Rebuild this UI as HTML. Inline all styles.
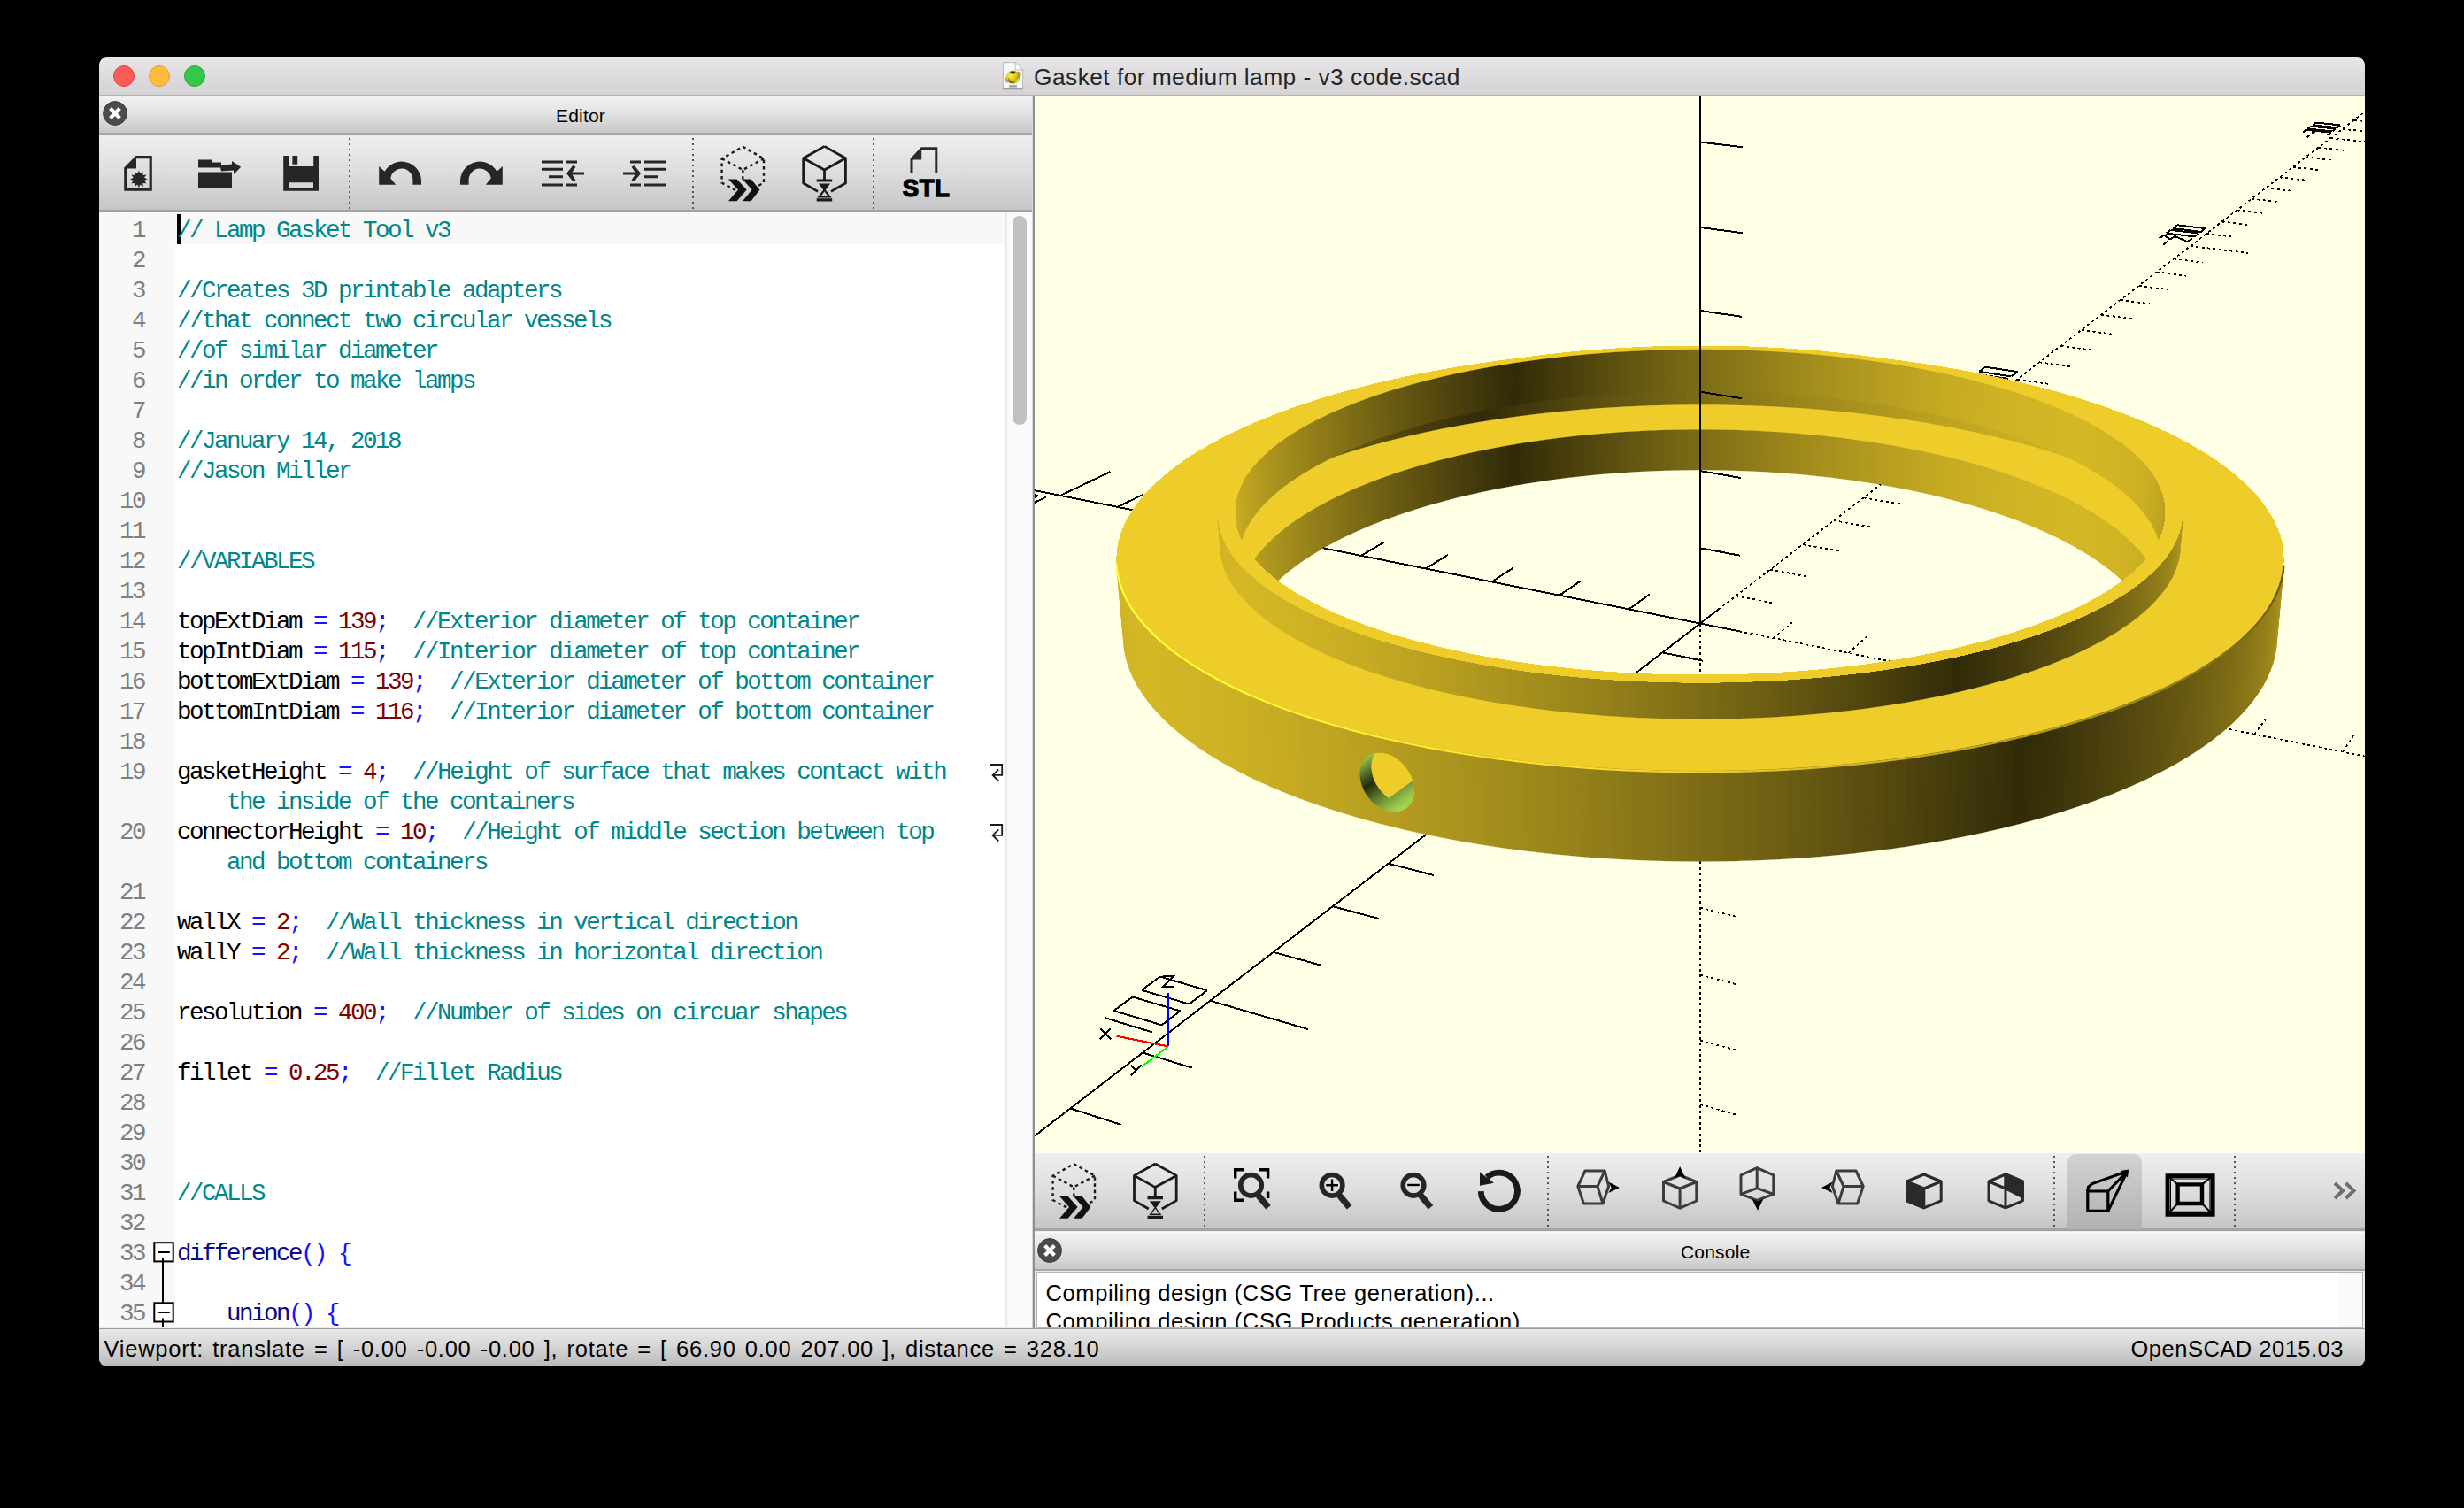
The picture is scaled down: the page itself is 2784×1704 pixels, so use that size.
<!DOCTYPE html>
<html><head><meta charset="utf-8"><title>OpenSCAD</title>
<style>
*{box-sizing:border-box;margin:0;padding:0}
html,body{width:2784px;height:1704px;background:#000;overflow:hidden}
body{position:relative;font-family:"Liberation Sans",sans-serif;color:#000}
.abs{position:absolute}
#win{position:absolute;left:112px;top:64px;width:2560px;height:1480px;border-radius:10px 10px 9px 9px;overflow:hidden;background:#ececec}
#title{position:absolute;left:0;top:0;width:2560px;height:44px;background:linear-gradient(#e9e7e9,#d3d1d3);border-bottom:1px solid #b4b2b4}
.tl{position:absolute;top:10px;width:24px;height:24px;border-radius:50%}
#ttext{position:absolute;left:1056px;top:7.7px;font-size:26.4px;line-height:30px;color:#262626;white-space:nowrap;letter-spacing:0.42px}
.dockhdr{position:absolute;background:linear-gradient(#f1f1f1,#e3e3e3 45%,#c8c8c8);border-top:1px solid #fbfbfb;border-bottom:2px solid #a6a6a6;font-size:21px;text-align:center;line-height:43px;letter-spacing:0.2px}
.tbar{position:absolute;background:linear-gradient(#efefef,#dddddd 50%,#c6c6c6);border-top:1px solid #fbfbfb;border-bottom:3px solid #a2a2a2}
.closeb{position:absolute;width:27px;height:27px}
.sep{position:absolute;width:0;border-left:2px dotted #555}
#code{position:absolute;left:0;top:176px;width:1054px;height:1260px;background:#fff;overflow:hidden;font-family:"Liberation Mono",monospace;font-size:27.5px;letter-spacing:-2.5px;line-height:34px;white-space:pre}
#gutter{position:absolute;left:0;top:0;width:86px;height:1260px;background:#f8f8f8}
.ln{position:absolute;left:0;width:51px;text-align:right;color:#7f7f7f;height:34px}
.cl{position:absolute;left:88px;height:34px;color:#000}
.c{color:#00878a}.n{color:#7f0000}.o{color:#1414ff}.k{color:#0a0a8c}
#status{position:absolute;left:0;top:1437px;width:2560px;height:43px;background:linear-gradient(#e8e8e8,#d4d4d4 50%,#b9b9b9);border-top:1px solid #9a9a9a;font-size:25.5px;line-height:45px;white-space:nowrap}
</style></head><body>
<div id="win">
 <div id="title">
  <div class="tl" style="left:16px;background:#fc5b57;border:1px solid #e0443e"></div>
  <div class="tl" style="left:56px;background:#fdbc40;border:1px solid #dea032"></div>
  <div class="tl" style="left:96px;background:#34c84a;border:1px solid #27aa35"></div>
  <svg class="abs" style="left:1020px;top:5px" width="26" height="34" viewBox="1132 69 26 34"><defs><radialGradient id="sph" cx="0.35" cy="0.35" r="0.75"><stop offset="0" stop-color="#fff23a"/><stop offset="0.55" stop-color="#e2c21c"/><stop offset="1" stop-color="#7a6410"/></radialGradient></defs>
<path d="M1133.4,70.6 H1147.2 L1155.6,79 V100.6 H1133.4Z" fill="#f7f7f7" stroke="#b4b4b4" stroke-width="0.9"/><path d="M1147.2,70.6 V79 H1155.6Z" fill="#fdfdfd" stroke="#b0b0b0" stroke-width="0.8"/><path d="M1133.4,100.6 H1155.6" stroke="#9c9c9c" stroke-width="1.2"/>
<ellipse cx="1138.2" cy="90.2" rx="2.6" ry="3.4" fill="#c99a78" transform="rotate(-25 1138.2 90.2)"/><ellipse cx="1151" cy="83.8" rx="2.4" ry="3.2" fill="#c99a78" transform="rotate(-25 1151 83.8)"/>
<circle cx="1144.5" cy="87" r="7.6" fill="url(#sph)"/>
<ellipse cx="1144.2" cy="81.8" rx="3" ry="1.8" fill="#243a08"/><path d="M1141.4,81.6 a3.4,2.4 0 0 1 6.4,-0.4 q-3,-1.6 -6.4,0.4z" fill="#7fae2c"/>
<path d="M1146.4,91.6 q3.4,-1 4.6,-4.6 q1.2,4.6 -3,7.2 q-1.8,-0.6 -1.6,-2.6z" fill="#b6e45c"/>
<path d="M1139.6,88 q1.4,3.6 4.6,4.8 q-0.6,1.6 -2.6,1.4 q-2.8,-2 -2,-6.2z" fill="#6e6a1c"/>
<rect x="1140" y="96.2" width="9" height="2.4" fill="#8c8c8c" opacity="0.8"/></svg>

  <div id="ttext">Gasket for medium lamp - v3 code.scad</div>
 </div>
 <!-- editor dock -->
 <div class="dockhdr" style="left:0;top:44px;width:1056px;height:44px"><span style="position:absolute;left:516px;top:0">Editor</span></div>
 <svg class="abs" style="left:4px;top:50px" width="29" height="29" viewBox="0 0 29 29"><circle cx="14" cy="14" r="13.4" fill="#4b4b4b" stroke="#3a3a3a" stroke-width="1"/><path d="M8.6,8.6 L19.4,19.4 M19.4,8.6 L8.6,19.4" stroke="#fff" stroke-width="4.2" stroke-linecap="butt"/></svg>

 <div class="tbar" style="left:0;top:88px;width:1056px;height:88px"></div>
 <svg class="abs" style="left:0;top:88px" width="1056" height="88" viewBox="112 152 1056 88">
<g fill="none" stroke="#555" stroke-width="2" stroke-dasharray="2 4"><path d="M395,156V238M783,156V238M987,156V238"/></g>
<g fill="#262626" stroke="none">
<!-- new -->
<path d="M153.5,176 L171.8,176 L171.8,215.8 L140.2,215.8 L140.2,189.5 Z M154,179.2 L154,190.5 L143.4,190.5 L143.4,212.6 L168.6,212.6 L168.6,179.2 Z" fill-rule="evenodd"/>
<path d="M156.9,192.7 l1.6,3.6 3.2,-2.4 -0.3,4 4,-0.3 -2.4,3.2 3.6,1.6 -3.6,1.6 2.4,3.2 -4,-0.3 0.3,4 -3.2,-2.4 -1.6,3.6 -1.6,-3.6 -3.2,2.4 0.3,-4 -4,0.3 2.4,-3.2 -3.6,-1.6 3.6,-1.6 -2.4,-3.2 4,0.3 -0.3,-4 3.2,2.4z"/>
<!-- open -->
<path d="M224,180.5 H240 V183.5 H250 V189.5 H224Z"/>
<path d="M224,194.5 H262 V212 H224Z"/>
<path d="M248.5,187.2 L262,185.6 V182 L272.2,188.8 L264,197 V192.6 L250,193.4Z"/>
<!-- save -->
<path d="M320.2,176 H326 V188 H354.2 V176 H360 V215.8 H320.2Z M326.2,206.2 V212 H354 V206.2Z" fill-rule="evenodd"/>
<path d="M330.4,176 H336.2 V185.8 H330.4Z"/>
<!-- undo / redo -->
<path d="M428.2,188 V208.8 H447.2 L441.3,201.6 A12.6,12.6 0 0 1 466.4,203 V208.8 H476 V203 A22.2,22.2 0 0 0 434.6,193.8Z"/>
<path d="M567.8,188 V208.8 H548.8 L554.7,201.6 A12.6,12.6 0 0 0 529.6,203 V208.8 H520 V203 A22.2,22.2 0 0 1 561.4,193.8Z"/>
<!-- unindent -->
<path d="M612,181.4 H636 V184.4 H612Z M640,181.4 H652 V184.4 H640Z M612,189.8 H636 V192.8 H612Z M620,198.2 H636 V201.2 H620Z M612,207.6 H636 V210.6 H612Z M640,207.6 H652 V210.6 H640Z"/>
<path d="M660,194.4 H646.5 L650.5,188.6 L647.3,187 L640,196 L647.3,205 L650.5,203.4 L646.5,197.6 H660Z"/>
<!-- indent -->
<path d="M712,181.4 H724 V184.4 H712Z M728,181.4 H752 V184.4 H728Z M728,189.8 H752 V192.8 H728Z M728,198.2 H744 V201.2 H728Z M712,207.6 H724 V210.6 H712Z M728,207.6 H752 V210.6 H728Z"/>
<path d="M704,194.4 H717.5 L713.5,188.6 L716.7,187 L724,196 L716.7,205 L713.5,203.4 L717.5,197.6 H704Z"/>
</g>
<!-- preview -->
<g fill="none" stroke="#1a1a1a" stroke-width="2.4" stroke-dasharray="3.6 3.6">
<path d="M839.3,165.8 L863,179.2 V206.6 L848,215 M831,215 L815.6,206.6 V179.2 L839.3,165.8"/>
<path d="M815.6,179.2 L839.3,192 L863,179.2 M839.3,192 V203"/>
</g>
<g fill="#111"><path d="M823,202.4 H832.6 L843.6,214.6 L832.6,227.3 H823 L834,214.6Z M839,202.4 H848.6 L858.4,214.6 L848.6,227.3 H839 L849.6,214.6Z"/></g>
<!-- render -->
<g fill="none" stroke="#1a1a1a" stroke-width="2.8" stroke-linejoin="round">
<path d="M931.5,165.4 L955.4,178.8 V207 L939,216.4 M924,216.4 L907.7,207 V178.8 L931.5,165.4"/>
<path d="M907.7,178.8 L931.5,192 L955.4,178.8 M931.5,192 V203"/>
</g>
<g fill="#1a1a1a"><path d="M922.7,202.4 H940.2 V205.6 H922.7Z M922.7,224.2 H940.2 V227.4 H922.7Z"/><path d="M925,207.6 H938 L931.5,215.8Z" /><path d="M925,222.6 H938 L931.5,214.4Z" fill="none" stroke="#1a1a1a" stroke-width="1.6"/><path d="M926.5,208 L936.5,222 M936.5,208 L926.5,222" stroke="#1a1a1a" stroke-width="1.4"/></g>
<!-- STL -->
<path d="M1030,195.8 V180.2 L1041.4,167.8 H1057.8 V195.8" fill="none" stroke="#2a2a2a" stroke-width="3"/>
<path d="M1029.4,180.6 L1041.2,167.6 V180.6Z" fill="#2a2a2a"/>
<text x="1046.5" y="221.8" font-family="Liberation Sans, sans-serif" font-weight="bold" font-size="27.6" text-anchor="middle" fill="#000" stroke="#000" stroke-width="1.3" letter-spacing="0.4">STL</text>
</svg>

 <div id="code">
  <div id="gutter"></div>
  <div class="abs" style="left:86px;top:1px;width:938px;height:35px;background:#f8f8f8"></div>
<div class="abs" style="left:88px;top:2px;width:4px;height:34px;background:#000"></div>
<div class="ln" style="top:4px">1</div>
<div class="cl" style="top:4px"><span class="c">// Lamp Gasket Tool v3</span></div>
<div class="ln" style="top:38px">2</div>
<div class="ln" style="top:72px">3</div>
<div class="cl" style="top:72px"><span class="c">//Creates 3D printable adapters</span></div>
<div class="ln" style="top:106px">4</div>
<div class="cl" style="top:106px"><span class="c">//that connect two circular vessels</span></div>
<div class="ln" style="top:140px">5</div>
<div class="cl" style="top:140px"><span class="c">//of similar diameter</span></div>
<div class="ln" style="top:174px">6</div>
<div class="cl" style="top:174px"><span class="c">//in order to make lamps</span></div>
<div class="ln" style="top:208px">7</div>
<div class="ln" style="top:242px">8</div>
<div class="cl" style="top:242px"><span class="c">//January 14, 2018</span></div>
<div class="ln" style="top:276px">9</div>
<div class="cl" style="top:276px"><span class="c">//Jason Miller</span></div>
<div class="ln" style="top:310px">10</div>
<div class="ln" style="top:344px">11</div>
<div class="ln" style="top:378px">12</div>
<div class="cl" style="top:378px"><span class="c">//VARIABLES</span></div>
<div class="ln" style="top:412px">13</div>
<div class="ln" style="top:446px">14</div>
<div class="cl" style="top:446px">topExtDiam <span class="o">=</span> <span class="n">139</span><span class="o">;</span>  <span class="c">//Exterior diameter of top container</span></div>
<div class="ln" style="top:480px">15</div>
<div class="cl" style="top:480px">topIntDiam <span class="o">=</span> <span class="n">115</span><span class="o">;</span>  <span class="c">//Interior diameter of top container</span></div>
<div class="ln" style="top:514px">16</div>
<div class="cl" style="top:514px">bottomExtDiam <span class="o">=</span> <span class="n">139</span><span class="o">;</span>  <span class="c">//Exterior diameter of bottom container</span></div>
<div class="ln" style="top:548px">17</div>
<div class="cl" style="top:548px">bottomIntDiam <span class="o">=</span> <span class="n">116</span><span class="o">;</span>  <span class="c">//Interior diameter of bottom container</span></div>
<div class="ln" style="top:582px">18</div>
<div class="ln" style="top:616px">19</div>
<div class="cl" style="top:616px">gasketHeight <span class="o">=</span> <span class="n">4</span><span class="o">;</span>  <span class="c">//Height of surface that makes contact with</span></div>
<div class="cl" style="top:650px">    <span class="c">the inside of the containers</span></div>
<div class="ln" style="top:684px">20</div>
<div class="cl" style="top:684px">connectorHeight <span class="o">=</span> <span class="n">10</span><span class="o">;</span>  <span class="c">//Height of middle section between top</span></div>
<div class="cl" style="top:718px">    <span class="c">and bottom containers</span></div>
<div class="ln" style="top:752px">21</div>
<div class="ln" style="top:786px">22</div>
<div class="cl" style="top:786px">wallX <span class="o">=</span> <span class="n">2</span><span class="o">;</span>  <span class="c">//Wall thickness in vertical direction</span></div>
<div class="ln" style="top:820px">23</div>
<div class="cl" style="top:820px">wallY <span class="o">=</span> <span class="n">2</span><span class="o">;</span>  <span class="c">//Wall thickness in horizontal direction</span></div>
<div class="ln" style="top:854px">24</div>
<div class="ln" style="top:888px">25</div>
<div class="cl" style="top:888px">resolution <span class="o">=</span> <span class="n">400</span><span class="o">;</span>  <span class="c">//Number of sides on circuar shapes</span></div>
<div class="ln" style="top:922px">26</div>
<div class="ln" style="top:956px">27</div>
<div class="cl" style="top:956px">fillet <span class="o">=</span> <span class="n">0.25</span><span class="o">;</span>  <span class="c">//Fillet Radius</span></div>
<div class="ln" style="top:990px">28</div>
<div class="ln" style="top:1024px">29</div>
<div class="ln" style="top:1058px">30</div>
<div class="ln" style="top:1092px">31</div>
<div class="cl" style="top:1092px"><span class="c">//CALLS</span></div>
<div class="ln" style="top:1126px">32</div>
<div class="ln" style="top:1160px">33</div>
<div class="cl" style="top:1160px"><span class="k">difference</span><span class="o">() {</span></div>
<div class="ln" style="top:1194px">34</div>
<div class="ln" style="top:1228px">35</div>
<div class="cl" style="top:1228px">    <span class="k">union</span><span class="o">() {</span></div><svg class="abs" style="left:0;top:0" width="1054" height="1260" viewBox="112 240 1054 1260">
<g fill="none" stroke="#1c1c14" stroke-width="1.8"><path d="M1119,864 H1132.2 V875.9 H1122 M1128.3,869.4 L1121.6,875.9 L1128.3,882.5"/><path d="M1119,932 H1132.2 V943.9 H1122 M1128.3,937.4 L1121.6,943.9 L1128.3,950.5"/></g>
<g stroke="#000" stroke-width="2"><path d="M184,1423 V1500" fill="none"/><rect x="174.3" y="1404.2" width="21.4" height="21.2" fill="#fff"/><rect x="174.3" y="1472.3" width="21.4" height="21.2" fill="#fff"/><path d="M178.4,1415 H191.8 M178.4,1483 H191.8 M184,1421.5 V1426 M184,1489.5 V1500" fill="none"/></g>
</svg>

 </div>
 <!-- editor scrollbar -->
 <div class="abs" style="left:1024px;top:176px;width:30px;height:1260px;background:#fafafa;border-left:2px solid #e9e9e9"></div>
 <div class="abs" style="left:1032px;top:180px;width:16px;height:236px;border-radius:8px;background:#c1c1c1"></div>
 <!-- splitter -->
 <div class="abs" style="left:1054px;top:44px;width:3px;height:1393px;background:linear-gradient(90deg,#d8d8d8 0,#d8d8d8 33%,#8f8f8f 34%,#8f8f8f)"></div>
 <!-- 3D view -->
 <div class="abs" style="left:1057px;top:44px;width:1503px;height:1194px;background:#ffffe5;overflow:hidden">
 <svg width="1503" height="1194" viewBox="1169 108 1503 1194" style="position:absolute;left:0;top:0">
 <g stroke="#000" stroke-width="2" fill="none" shape-rendering="crispEdges"><path d="M1494.9,619.3 L34.6,327.4"/>
<path d="M1650.6,912.7 L-5630.7,6519.3"/>
<path d="M2412.5,802.7 L6512.6,1622.4" stroke-dasharray="3 3.4" stroke-width="1.8"/>
<path d="M2125.0,547.4 L2669.8,127.9" stroke-dasharray="3 3.4" stroke-width="1.8"/>
<path d="M1466.7,613.7 L1493.2,598.8"/>
<path d="M1627.9,930.2 L1678.3,942.6"/>
<path d="M2450.5,810.3 L2467.0,790.1" stroke-dasharray="3 3.4" stroke-width="1.8"/>
<path d="M2137.7,537.6 L2178.0,544.4" stroke-dasharray="3 3.4" stroke-width="1.8"/>
<path d="M1397.1,599.8 L1424.2,585.2"/>
<path d="M1568.7,975.8 L1620.2,989.0"/>
<path d="M2547.3,829.7 L2562.7,808.9" stroke-dasharray="3 3.4" stroke-width="1.8"/>
<path d="M2168.4,514.0 L2208.1,520.5" stroke-dasharray="3 3.4" stroke-width="1.8"/>
<path d="M1329.2,586.2 L1356.8,572.0"/>
<path d="M1505.8,1024.2 L1558.3,1038.2"/>
<path d="M2647.0,849.6 L2661.0,828.3" stroke-dasharray="3 3.4" stroke-width="1.8"/>
<path d="M2197.9,491.3 L2236.9,497.5" stroke-dasharray="3 3.4" stroke-width="1.8"/>
<path d="M1262.8,572.9 L1290.9,559.0"/>
<path d="M1438.8,1075.8 L1492.5,1090.7"/>
<path d="M2749.4,870.1 L2762.1,848.1" stroke-dasharray="3 3.4" stroke-width="1.8"/>
<path d="M2226.2,469.5 L2264.5,475.5" stroke-dasharray="3 3.4" stroke-width="1.8"/>
<path d="M1198.0,560.0 L1254.4,533.1"/>
<path d="M1367.4,1130.8 L1478.0,1163.0"/>
<path d="M2854.9,891.2 L2877.0,846.7" stroke-dasharray="3 3.4" stroke-width="1.8"/>
<path d="M2253.3,448.6 L2329.2,460.2" stroke-dasharray="3 3.4" stroke-width="1.8"/>
<path d="M1134.5,547.3 L1163.5,534.0"/>
<path d="M1291.1,1189.5 L1347.0,1206.6"/>
<path d="M2963.5,912.9 L2973.2,889.6" stroke-dasharray="3 3.4" stroke-width="1.8"/>
<path d="M2279.4,428.6 L2316.5,434.1" stroke-dasharray="3 3.4" stroke-width="1.8"/>
<path d="M1072.5,534.9 L1101.9,521.9"/>
<path d="M1209.3,1252.5 L1266.5,1270.8"/>
<path d="M3075.4,935.3 L3083.4,911.3" stroke-dasharray="3 3.4" stroke-width="1.8"/>
<path d="M2304.4,409.3 L2341.0,414.6" stroke-dasharray="3 3.4" stroke-width="1.8"/>
<path d="M1011.9,522.8 L1041.6,510.0"/>
<path d="M1121.5,1320.1 L1179.9,1339.9"/>
<path d="M3190.6,958.3 L3197.0,933.6" stroke-dasharray="3 3.4" stroke-width="1.8"/>
<path d="M2328.5,390.7 L2364.5,395.8" stroke-dasharray="3 3.4" stroke-width="1.8"/>
<path d="M952.5,510.9 L982.6,498.4"/>
<path d="M1026.9,1392.9 L1086.5,1414.2"/>
<path d="M3309.5,982.1 L3314.0,956.6" stroke-dasharray="3 3.4" stroke-width="1.8"/>
<path d="M2351.8,372.8 L2387.2,377.7" stroke-dasharray="3 3.4" stroke-width="1.8"/>
<path d="M894.4,499.3 L924.9,487.1"/>
<path d="M924.8,1471.6 L985.7,1494.6"/>
<path d="M3432.1,1006.6 L3434.6,980.3" stroke-dasharray="3 3.4" stroke-width="1.8"/>
<path d="M2374.1,355.6 L2409.0,360.3" stroke-dasharray="3 3.4" stroke-width="1.8"/>
<path d="M837.5,487.9 L868.4,476.0"/>
<path d="M814.2,1556.8 L876.3,1581.8"/>
<path d="M3558.6,1031.9 L3559.0,1004.8" stroke-dasharray="3 3.4" stroke-width="1.8"/>
<path d="M2395.7,339.0 L2430.1,343.5" stroke-dasharray="3 3.4" stroke-width="1.8"/>
<path d="M781.9,476.8 L813.0,465.1"/>
<path d="M693.9,1649.3 L757.3,1676.6"/>
<path d="M3689.2,1058.0 L3687.4,1030.0" stroke-dasharray="3 3.4" stroke-width="1.8"/>
<path d="M2416.6,322.9 L2450.4,327.3" stroke-dasharray="3 3.4" stroke-width="1.8"/>
<path d="M727.4,465.9 L758.8,454.4"/>
<path d="M562.8,1750.3 L627.4,1780.1"/>
<path d="M3824.1,1084.9 L3819.9,1056.0" stroke-dasharray="3 3.4" stroke-width="1.8"/>
<path d="M2436.7,307.4 L2470.0,311.7" stroke-dasharray="3 3.4" stroke-width="1.8"/>
<path d="M674.0,455.2 L705.6,444.0"/>
<path d="M419.2,1860.9 L485.0,1893.6"/>
<path d="M3963.5,1112.8 L3956.8,1082.9" stroke-dasharray="3 3.4" stroke-width="1.8"/>
<path d="M2456.1,292.5 L2489.0,296.6" stroke-dasharray="3 3.4" stroke-width="1.8"/>
<path d="M621.6,444.8 L684.8,423.0"/>
<path d="M261.2,1982.5 L397.0,2055.7"/>
<path d="M4107.7,1141.6 L4089.2,1080.9" stroke-dasharray="3 3.4" stroke-width="1.8"/>
<path d="M2474.9,278.0 L2540.1,286.0" stroke-dasharray="3 3.4" stroke-width="1.8"/>
<path d="M570.4,434.5 L602.5,423.7"/>
<path d="M86.7,2116.9 L154.5,2157.0"/>
<path d="M4257.0,1171.5 L4244.6,1139.5" stroke-dasharray="3 3.4" stroke-width="1.8"/>
<path d="M2493.0,264.0 L2525.0,267.9" stroke-dasharray="3 3.4" stroke-width="1.8"/>
<path d="M520.1,424.5 L552.5,413.9"/>
<path d="M-107.2,2266.3 L-38.6,2310.9"/>
<path d="M4411.5,1202.4 L4396.1,1169.3" stroke-dasharray="3 3.4" stroke-width="1.8"/>
<path d="M2510.6,250.5 L2542.2,254.2" stroke-dasharray="3 3.4" stroke-width="1.8"/>
<path d="M470.9,414.6 L503.4,404.3"/>
<path d="M-323.9,2433.1 L-254.8,2483.1"/>
<path d="M4571.5,1234.4 L4552.8,1200.1" stroke-dasharray="3 3.4" stroke-width="1.8"/>
<path d="M2527.6,237.4 L2558.8,241.0" stroke-dasharray="3 3.4" stroke-width="1.8"/>
<path d="M422.6,405.0 L455.3,394.8"/>
<path d="M-567.6,2620.8 L-498.4,2677.3"/>
<path d="M4737.4,1267.5 L4715.2,1232.0" stroke-dasharray="3 3.4" stroke-width="1.8"/>
<path d="M2544.1,224.7 L2574.8,228.2" stroke-dasharray="3 3.4" stroke-width="1.8"/>
<path d="M375.2,395.5 L408.1,385.5"/>
<path d="M-843.8,2833.4 L-775.1,2897.8"/>
<path d="M4909.6,1301.9 L4883.5,1265.1" stroke-dasharray="3 3.4" stroke-width="1.8"/>
<path d="M2560.1,212.4 L2590.4,215.8" stroke-dasharray="3 3.4" stroke-width="1.8"/>
<path d="M328.8,386.2 L361.8,376.4"/>
<path d="M-1159.3,3076.3 L-1091.9,3150.3"/>
<path d="M5088.2,1337.6 L5058.1,1299.4" stroke-dasharray="3 3.4" stroke-width="1.8"/>
<path d="M2575.6,200.4 L2605.5,203.7" stroke-dasharray="3 3.4" stroke-width="1.8"/>
<path d="M283.2,377.1 L316.4,367.5"/>
<path d="M-1523.2,3356.5 L-1458.5,3442.4"/>
<path d="M5273.8,1374.7 L5239.4,1335.0" stroke-dasharray="3 3.4" stroke-width="1.8"/>
<path d="M2590.6,188.9 L2620.2,192.1" stroke-dasharray="3 3.4" stroke-width="1.8"/>
<path d="M238.5,368.1 L271.8,358.7"/>
<path d="M-1947.5,3683.3 L-1887.4,3784.2"/>
<path d="M5466.8,1413.3 L5427.6,1372.0" stroke-dasharray="3 3.4" stroke-width="1.8"/>
<path d="M2605.2,177.6 L2634.4,180.7" stroke-dasharray="3 3.4" stroke-width="1.8"/>
<path d="M194.6,359.4 L228.0,350.1"/>
<path d="M-2448.8,4069.3 L-2396.1,4189.6"/>
<path d="M5667.5,1453.4 L5623.3,1410.4" stroke-dasharray="3 3.4" stroke-width="1.8"/>
<path d="M2619.4,166.7 L2648.2,169.7" stroke-dasharray="3 3.4" stroke-width="1.8"/>
<path d="M151.5,350.8 L218.0,332.8"/>
<path d="M-3050.1,4532.3 L-2965.8,4832.6"/>
<path d="M5876.5,1495.2 L5779.4,1407.6" stroke-dasharray="3 3.4" stroke-width="1.8"/>
<path d="M2633.2,156.1 L2690.3,162.0" stroke-dasharray="3 3.4" stroke-width="1.8"/>
<path d="M109.2,342.3 L142.9,333.4"/>
<path d="M-3784.4,5097.7 L-3762.2,5278.3"/>
<path d="M6094.2,1538.8 L6038.8,1492.1" stroke-dasharray="3 3.4" stroke-width="1.8"/>
<path d="M2646.6,145.8 L2674.6,148.7" stroke-dasharray="3 3.4" stroke-width="1.8"/>
<path d="M67.7,334.0 L101.5,325.3"/>
<path d="M-4701.6,5803.9 L-4709.5,6033.2"/>
<path d="M6321.4,1584.2 L6259.7,1535.5" stroke-dasharray="3 3.4" stroke-width="1.8"/>
<path d="M2659.6,135.8 L2687.3,138.6" stroke-dasharray="3 3.4" stroke-width="1.8"/>
<path d="M1152.4,575.6 L1181.9,561.7"/>
<path d="M1143.6,573.8 L1126.1,570.2"/>
<path d="M1126.1,570.2 L1155.8,556.4"/>
<path d="M1155.8,556.4 L1173.2,559.9"/>
<path d="M1173.2,559.9 L1143.6,573.8"/>
<path d="M1117.4,568.5 L1100.0,564.9"/>
<path d="M1100.0,564.9 L1129.9,551.2"/>
<path d="M1129.9,551.2 L1147.1,554.7"/>
<path d="M1147.1,554.7 L1117.4,568.5"/>
<path d="M1290.0,1118.8 L1310.6,1103.6"/>
<path d="M1310.6,1103.6 L1364.0,1119.1"/>
<path d="M1364.0,1119.1 L1343.7,1134.6"/>
<path d="M1343.7,1134.6 L1290.0,1118.8"/>
<path d="M1258.5,1142.1 L1279.6,1126.5"/>
<path d="M1279.6,1126.5 L1333.5,1142.4"/>
<path d="M1333.5,1142.4 L1312.6,1158.3"/>
<path d="M1312.6,1158.3 L1258.5,1142.1"/>
<path d="M1247.8,1150.0 L1302.1,1166.4"/>
<path d="M1858.2,-269.1 L1858.5,-239.7"/>
<path d="M1858.5,-239.7 L1908.4,-237.1"/>
<path d="M1908.4,-237.1 L1908.3,-266.7"/>
<path d="M1908.3,-266.7 L1858.2,-269.1"/>
<path d="M1857.9,-313.6 L1858.1,-283.9"/>
<path d="M1858.1,-283.9 L1908.3,-281.6"/>
<path d="M1908.3,-281.6 L1908.3,-311.5"/>
<path d="M1908.3,-311.5 L1857.9,-313.6"/>
<path d="M1857.8,-328.6 L1908.3,-326.6"/>
<path d="M2855.3,923.5 L2825.5,917.4"/>
<path d="M2825.5,917.4 L2837.4,894.0"/>
<path d="M2837.4,894.0 L2866.8,899.9"/>
<path d="M2866.8,899.9 L2855.3,923.5"/>
<path d="M2900.4,932.7 L2870.3,926.6"/>
<path d="M2870.3,926.6 L2881.5,902.9"/>
<path d="M2881.5,902.9 L2911.3,908.8"/>
<path d="M2911.3,908.8 L2900.4,932.7"/>
<path d="M2915.6,935.8 L2926.2,911.8"/>
<path d="M2965.2,936.0 L2996.0,942.2"/>
<path d="M2224.3,440.9 L2216.9,446.4"/>
<path d="M2221.5,430.6 L2258.4,436.2"/>
<path d="M2225.2,427.9 L2232.4,422.6"/>
<path d="M2232.4,422.6 L2269.0,428.0"/>
<path d="M2269.0,428.0 L2262.0,433.4"/>
<path d="M2262.0,433.4 L2225.2,427.9"/>
<path d="M2236.0,419.9 L2243.1,414.7"/>
<path d="M2243.1,414.7 L2279.5,420.0"/>
<path d="M2279.5,420.0 L2272.5,425.4"/>
<path d="M2272.5,425.4 L2236.0,419.9"/>
<path d="M1886.4,1454.2 L1886.3,1435.9"/>
<path d="M1871.9,1476.7 L1911.1,1489.3"/>
<path d="M1872.0,1485.7 L1872.1,1503.6"/>
<path d="M1872.1,1503.6 L1911.2,1516.4"/>
<path d="M1911.2,1516.4 L1911.1,1498.4"/>
<path d="M1911.1,1498.4 L1872.0,1485.7"/>
<path d="M1872.2,1512.6 L1872.3,1530.4"/>
<path d="M1872.3,1530.4 L1911.2,1543.2"/>
<path d="M1911.2,1543.2 L1911.2,1525.4"/>
<path d="M1911.2,1525.4 L1872.2,1512.6"/>
<path d="M587.9,460.3 L573.7,457.4"/>
<path d="M573.7,457.4 L600.3,456.0"/>
<path d="M600.3,456.0 L586.1,453.1"/>
<path d="M586.1,453.1 L620.7,449.0"/>
<path d="M620.7,449.0 L606.5,446.1"/>
<path d="M566.6,455.9 L552.5,453.0"/>
<path d="M552.5,453.0 L585.4,441.9"/>
<path d="M585.4,441.9 L599.4,444.7"/>
<path d="M599.4,444.7 L566.6,455.9"/>
<path d="M545.4,451.6 L531.4,448.7"/>
<path d="M531.4,448.7 L564.4,437.7"/>
<path d="M564.4,437.7 L578.4,440.5"/>
<path d="M578.4,440.5 L545.4,451.6"/>
<path d="M157.2,1955.8 L202.8,1922.1"/>
<path d="M202.8,1922.1 L267.3,1956.5"/>
<path d="M267.3,1956.5 L221.9,1991.1"/>
<path d="M221.9,1991.1 L157.2,1955.8"/>
<path d="M86.3,2008.2 L133.9,1973.0"/>
<path d="M133.9,1973.0 L198.7,2008.8"/>
<path d="M198.7,2008.8 L151.4,2045.0"/>
<path d="M151.4,2045.0 L86.3,2008.2"/>
<path d="M12.5,2062.7 L62.0,2026.1"/>
<path d="M62.0,2026.1 L36.8,2077.0"/>
<path d="M36.8,2077.0 L86.3,2040.0"/>
<path d="M86.3,2040.0 L77.9,2101.1"/>
<path d="M77.9,2101.1 L127.3,2063.4"/>
<path d="M2449.3,272.6 L2444.2,276.5"/>
<path d="M2439.9,269.3 L2445.1,265.5"/>
<path d="M2445.1,265.5 L2451.9,270.7"/>
<path d="M2451.9,270.7 L2457.0,266.9"/>
<path d="M2457.0,266.9 L2471.9,273.2"/>
<path d="M2471.9,273.2 L2476.9,269.3"/>
<path d="M2447.6,263.6 L2452.7,259.8"/>
<path d="M2452.7,259.8 L2484.3,263.7"/>
<path d="M2484.3,263.7 L2479.4,267.4"/>
<path d="M2479.4,267.4 L2447.6,263.6"/>
<path d="M2455.2,258.0 L2460.2,254.3"/>
<path d="M2460.2,254.3 L2491.6,258.1"/>
<path d="M2491.6,258.1 L2486.8,261.8"/>
<path d="M2486.8,261.8 L2455.2,258.0"/>
<path d="M1889.7,2057.1 L1889.6,2042.2"/>
<path d="M1876.5,2059.0 L1876.6,2073.8"/>
<path d="M1876.6,2073.8 L1889.8,2064.5"/>
<path d="M1889.8,2064.5 L1889.8,2079.4"/>
<path d="M1889.8,2079.4 L1912.0,2073.8"/>
<path d="M1912.0,2073.8 L1912.1,2088.6"/>
<path d="M1876.6,2081.2 L1876.8,2095.9"/>
<path d="M1876.8,2095.9 L1912.1,2110.8"/>
<path d="M1912.1,2110.8 L1912.1,2096.0"/>
<path d="M1912.1,2096.0 L1876.6,2081.2"/>
<path d="M1876.8,2103.2 L1876.9,2117.8"/>
<path d="M1876.9,2117.8 L1912.1,2132.7"/>
<path d="M1912.1,2132.7 L1912.1,2118.1"/>
<path d="M1912.1,2118.1 L1876.8,2103.2"/>
<path d="M114.4,363.6 L102.7,361.2"/>
<path d="M102.7,361.2 L137.1,351.9"/>
<path d="M137.1,351.9 L148.8,354.2"/>
<path d="M115.7,357.7 L127.4,360.0"/>
<path d="M96.9,360.0 L85.2,357.6"/>
<path d="M85.2,357.6 L119.7,348.4"/>
<path d="M119.7,348.4 L131.3,350.7"/>
<path d="M131.3,350.7 L96.9,360.0"/>
<path d="M79.5,356.4 L67.9,354.1"/>
<path d="M67.9,354.1 L102.5,344.9"/>
<path d="M102.5,344.9 L114.0,347.2"/>
<path d="M114.0,347.2 L79.5,356.4"/>
<path d="M2610.4,152.2 L2606.6,155.0"/>
<path d="M2601.8,149.7 L2605.6,146.9"/>
<path d="M2605.6,146.9 L2633.5,149.7"/>
<path d="M2633.5,149.7 L2629.8,152.5"/>
<path d="M2616.0,147.9 L2612.3,150.8"/>
<path d="M2607.4,145.5 L2611.2,142.7"/>
<path d="M2611.2,142.7 L2639.0,145.5"/>
<path d="M2639.0,145.5 L2635.4,148.3"/>
<path d="M2635.4,148.3 L2607.4,145.5"/>
<path d="M2613.0,141.4 L2616.7,138.6"/>
<path d="M2616.7,138.6 L2644.4,141.4"/>
<path d="M2644.4,141.4 L2640.8,144.2"/>
<path d="M2640.8,144.2 L2613.0,141.4"/>
<path d="M1892.5,2554.5 L1892.4,2542.1"/>
<path d="M1880.4,2554.7 L1880.5,2567.1"/>
<path d="M1880.5,2567.1 L1912.8,2583.1"/>
<path d="M1912.8,2583.1 L1912.8,2570.7"/>
<path d="M1892.6,2573.0 L1892.5,2560.7"/>
<path d="M1880.5,2573.2 L1880.6,2585.5"/>
<path d="M1880.6,2585.5 L1912.9,2601.5"/>
<path d="M1912.9,2601.5 L1912.9,2589.2"/>
<path d="M1912.9,2589.2 L1880.5,2573.2"/>
<path d="M1880.6,2591.6 L1880.7,2603.7"/>
<path d="M1880.7,2603.7 L1912.9,2619.8"/>
<path d="M1912.9,2619.8 L1912.9,2607.6"/>
<path d="M1912.9,2607.6 L1880.6,2591.6"/></g>
<g shape-rendering="crispEdges"><path d="M2545.2,658.4 L2542.1,652.1 L2538.7,646.0 L2534.9,639.9 L2530.6,633.8 L2526.0,627.9 L2521.1,622.0 L2515.7,616.2 L2510.0,610.5 L2504.0,604.8 L2497.7,599.3 L2491.0,593.8 L2484.0,588.5 L2476.6,583.2 L2469.0,578.0 L2461.1,572.9 L2452.9,567.9 L2444.5,563.0 L2435.7,558.2 L2426.7,553.5 L2417.5,549.0 L2408.0,544.5 L2398.3,540.1 L2388.3,535.8 L2378.1,531.7 L2367.7,527.6 L2357.1,523.6 L2346.4,519.8 L2335.4,516.1 L2324.2,512.4 L2312.9,508.9 L2301.3,505.5 L2289.7,502.3 L2277.8,499.1 L2265.8,496.0 L2253.7,493.1 L2241.4,490.2 L2229.0,487.5 L2216.5,484.9 L2203.9,482.4 L2191.1,480.1 L2178.3,477.8 L2165.3,475.7 L2152.2,473.6 L2139.1,471.7 L2125.9,469.9 L2112.6,468.2 L2099.2,466.7 L2085.7,465.2 L2072.2,463.9 L2058.6,462.7 L2045.0,461.6 L2031.4,460.6 L2017.7,459.7 L2003.9,458.9 L1990.1,458.3 L1976.3,457.8 L1962.5,457.4 L1948.7,457.1 L1934.8,456.9 L1921.0,456.8 L1907.2,456.9 L1893.3,457.1 L1879.5,457.4 L1865.7,457.8 L1851.9,458.3 L1838.1,458.9 L1824.3,459.7 L1810.6,460.6 L1797.0,461.6 L1783.4,462.7 L1769.8,463.9 L1756.3,465.2 L1742.8,466.7 L1729.4,468.2 L1716.1,469.9 L1702.9,471.7 L1689.8,473.6 L1676.7,475.7 L1663.7,477.8 L1650.9,480.1 L1638.1,482.4 L1625.5,484.9 L1613.0,487.5 L1600.6,490.2 L1588.3,493.1 L1576.2,496.0 L1564.2,499.1 L1552.3,502.3 L1540.7,505.5 L1529.1,508.9 L1517.8,512.4 L1506.6,516.1 L1495.6,519.8 L1484.9,523.6 L1474.3,527.6 L1463.9,531.7 L1453.7,535.8 L1443.7,540.1 L1434.0,544.5 L1424.5,549.0 L1415.3,553.5 L1406.3,558.2 L1397.5,563.0 L1389.1,567.9 L1380.9,572.9 L1373.0,578.0 L1365.4,583.2 L1358.0,588.5 L1351.0,593.8 L1344.3,599.3 L1338.0,604.8 L1332.0,610.5 L1326.3,616.2 L1320.9,622.0 L1316.0,627.9 L1311.4,633.8 L1307.1,639.9 L1303.3,646.0 L1299.9,652.1 L1296.8,658.4 L1403.5,657.6 L1405.6,652.4 L1408.0,647.3 L1410.7,642.2 L1413.8,637.2 L1417.2,632.2 L1421.0,627.3 L1425.0,622.4 L1429.4,617.6 L1434.0,612.9 L1439.0,608.2 L1444.2,603.6 L1449.7,599.1 L1455.5,594.6 L1461.5,590.2 L1467.8,585.9 L1474.4,581.7 L1481.2,577.5 L1488.2,573.4 L1495.5,569.4 L1503.0,565.5 L1510.8,561.7 L1518.7,557.9 L1526.9,554.3 L1535.2,550.7 L1543.8,547.2 L1552.5,543.8 L1561.4,540.5 L1570.5,537.3 L1579.8,534.2 L1589.2,531.1 L1598.8,528.2 L1608.6,525.4 L1618.5,522.6 L1628.5,520.0 L1638.7,517.4 L1649.0,514.9 L1659.4,512.6 L1670.0,510.3 L1680.6,508.2 L1691.4,506.1 L1702.2,504.1 L1713.2,502.2 L1724.2,500.5 L1735.4,498.8 L1746.6,497.2 L1757.9,495.8 L1769.2,494.4 L1780.7,493.1 L1792.2,492.0 L1803.7,490.9 L1815.3,489.9 L1826.9,489.1 L1838.6,488.3 L1850.3,487.6 L1862.0,487.1 L1873.8,486.6 L1885.6,486.3 L1897.4,486.0 L1909.2,485.9 L1921.0,485.8 L1932.8,485.9 L1944.6,486.0 L1956.4,486.3 L1968.2,486.6 L1980.0,487.1 L1991.7,487.6 L2003.4,488.3 L2015.1,489.1 L2026.7,489.9 L2038.3,490.9 L2049.8,492.0 L2061.3,493.1 L2072.8,494.4 L2084.1,495.8 L2095.4,497.2 L2106.6,498.8 L2117.8,500.5 L2128.8,502.2 L2139.8,504.1 L2150.6,506.1 L2161.4,508.2 L2172.0,510.3 L2182.6,512.6 L2193.0,514.9 L2203.3,517.4 L2213.5,520.0 L2223.5,522.6 L2233.4,525.4 L2243.2,528.2 L2252.8,531.1 L2262.2,534.2 L2271.5,537.3 L2280.6,540.5 L2289.5,543.8 L2298.2,547.2 L2306.8,550.7 L2315.1,554.3 L2323.3,557.9 L2331.2,561.7 L2339.0,565.5 L2346.5,569.4 L2353.8,573.4 L2360.8,577.5 L2367.6,581.7 L2374.2,585.9 L2380.5,590.2 L2386.5,594.6 L2392.3,599.1 L2397.8,603.6 L2403.0,608.2 L2408.0,612.9 L2412.6,617.6 L2417.0,622.4 L2421.0,627.3 L2424.8,632.2 L2428.2,637.2 L2431.3,642.2 L2434.0,647.3 L2436.4,652.4 L2438.5,657.6Z" fill="#eecd2a"/>
<g stroke-width="0.8" stroke-linejoin="round"><path d="M1411.0,555.7 L1405.7,558.5 L1402.2,510.3 L1407.6,507.6Z" fill="#907c19" stroke="#907c19"/><path d="M1405.7,558.5 L1400.5,561.4 L1397.0,513.1 L1402.2,510.3Z" fill="#927e19" stroke="#927e19"/><path d="M1400.5,561.4 L1395.4,564.2 L1391.9,515.8 L1397.0,513.1Z" fill="#94801a" stroke="#94801a"/><path d="M1395.4,564.2 L1390.4,567.1 L1386.8,518.6 L1391.9,515.8Z" fill="#96821a" stroke="#96821a"/><path d="M1390.4,567.1 L1385.5,570.1 L1381.8,521.5 L1386.8,518.6Z" fill="#98831b" stroke="#98831b"/><path d="M1385.5,570.1 L1380.7,573.0 L1377.0,524.3 L1381.8,521.5Z" fill="#9a851b" stroke="#9a851b"/><path d="M1380.7,573.0 L1375.9,576.1 L1372.2,527.2 L1377.0,524.3Z" fill="#9c871b" stroke="#9c871b"/><path d="M1375.9,576.1 L1371.3,579.1 L1367.6,530.1 L1372.2,527.2Z" fill="#9e881c" stroke="#9e881c"/><path d="M1371.3,579.1 L1366.8,582.2 L1363.0,533.1 L1367.6,530.1Z" fill="#a08a1c" stroke="#a08a1c"/><path d="M1366.8,582.2 L1362.4,585.3 L1358.6,536.1 L1363.0,533.1Z" fill="#a28c1c" stroke="#a28c1c"/><path d="M1362.4,585.3 L1358.1,588.4 L1354.2,539.1 L1358.6,536.1Z" fill="#a38d1d" stroke="#a38d1d"/><path d="M1358.1,588.4 L1353.9,591.6 L1350.0,542.2 L1354.2,539.1Z" fill="#a58f1d" stroke="#a58f1d"/><path d="M1353.9,591.6 L1349.8,594.8 L1345.9,545.3 L1350.0,542.2Z" fill="#a7901d" stroke="#a7901d"/><path d="M1349.8,594.8 L1345.9,598.0 L1341.9,548.4 L1345.9,545.3Z" fill="#a9921d" stroke="#a9921d"/><path d="M1345.9,598.0 L1342.0,601.3 L1338.0,551.5 L1341.9,548.4Z" fill="#aa931e" stroke="#aa931e"/><path d="M1342.0,601.3 L1338.3,604.6 L1334.2,554.7 L1338.0,551.5Z" fill="#ac951e" stroke="#ac951e"/><path d="M1338.3,604.6 L1334.7,607.9 L1330.6,557.9 L1334.2,554.7Z" fill="#ae961e" stroke="#ae961e"/><path d="M1334.7,607.9 L1331.2,611.3 L1327.0,561.2 L1330.6,557.9Z" fill="#af971f" stroke="#af971f"/><path d="M1331.2,611.3 L1327.8,614.6 L1323.6,564.4 L1327.0,561.2Z" fill="#b1991f" stroke="#b1991f"/><path d="M1327.8,614.6 L1324.5,618.1 L1320.3,567.7 L1323.6,564.4Z" fill="#b39a1f" stroke="#b39a1f"/><path d="M1324.5,618.1 L1321.4,621.5 L1317.1,571.0 L1320.3,567.7Z" fill="#b49b20" stroke="#b49b20"/><path d="M1321.4,621.5 L1318.4,625.0 L1314.1,574.4 L1317.1,571.0Z" fill="#b69d20" stroke="#b69d20"/><path d="M1318.4,625.0 L1315.5,628.5 L1311.2,577.8 L1314.1,574.4Z" fill="#b79e20" stroke="#b79e20"/><path d="M1315.5,628.5 L1312.7,632.0 L1308.4,581.2 L1311.2,577.8Z" fill="#b89f20" stroke="#b89f20"/><path d="M1312.7,632.0 L1310.1,635.5 L1305.7,584.6 L1308.4,581.2Z" fill="#baa021" stroke="#baa021"/><path d="M1310.1,635.5 L1307.6,639.1 L1303.2,588.0 L1305.7,584.6Z" fill="#bba221" stroke="#bba221"/><path d="M1307.6,639.1 L1305.3,642.7 L1300.9,591.5 L1303.2,588.0Z" fill="#bda321" stroke="#bda321"/><path d="M1305.3,642.7 L1303.1,646.3 L1298.6,595.0 L1300.9,591.5Z" fill="#bea421" stroke="#bea421"/><path d="M1303.1,646.3 L1301.0,650.0 L1296.5,598.5 L1298.6,595.0Z" fill="#bfa521" stroke="#bfa521"/><path d="M1301.0,650.0 L1299.1,653.7 L1294.5,602.1 L1296.5,598.5Z" fill="#c0a622" stroke="#c0a622"/><path d="M1299.1,653.7 L1297.3,657.3 L1292.7,605.6 L1294.5,602.1Z" fill="#c2a722" stroke="#c2a722"/><path d="M1297.3,657.3 L1295.6,661.1 L1291.1,609.2 L1292.7,605.6Z" fill="#c3a822" stroke="#c3a822"/><path d="M1295.6,661.1 L1294.1,664.8 L1289.5,612.8 L1291.1,609.2Z" fill="#c4a922" stroke="#c4a922"/><path d="M1294.1,664.8 L1292.8,668.5 L1288.2,616.4 L1289.5,612.8Z" fill="#c5aa22" stroke="#c5aa22"/><path d="M1292.8,668.5 L1291.6,672.3 L1286.9,620.1 L1288.2,616.4Z" fill="#c6ab23" stroke="#c6ab23"/><path d="M1291.6,672.3 L1290.5,676.1 L1285.9,623.7 L1286.9,620.1Z" fill="#c7ac23" stroke="#c7ac23"/><path d="M1290.5,676.1 L1289.6,679.9 L1284.9,627.4 L1285.9,623.7Z" fill="#c8ad23" stroke="#c8ad23"/><path d="M1289.6,679.9 L1288.9,683.7 L1284.2,631.1 L1284.9,627.4Z" fill="#c9ad23" stroke="#c9ad23"/><path d="M1288.9,683.7 L1288.3,687.6 L1283.6,634.8 L1284.2,631.1Z" fill="#caae23" stroke="#caae23"/><path d="M1288.3,687.6 L1287.9,691.4 L1283.1,638.5 L1283.6,634.8Z" fill="#cbaf24" stroke="#cbaf24"/><path d="M1287.9,691.4 L1287.6,695.3 L1282.8,642.3 L1283.1,638.5Z" fill="#cbb024" stroke="#cbb024"/><path d="M1287.6,695.3 L1287.5,699.2 L1282.7,646.0 L1282.8,642.3Z" fill="#ccb024" stroke="#ccb024"/><path d="M1287.5,699.2 L1287.5,703.1 L1282.7,649.8 L1282.7,646.0Z" fill="#cdb124" stroke="#cdb124"/><path d="M1287.5,703.1 L1287.7,707.0 L1282.9,653.5 L1282.7,649.8Z" fill="#ceb224" stroke="#ceb224"/><path d="M2554.3,707.0 L2554.5,703.1 L2559.3,649.8 L2559.1,653.5Z" fill="#ae961e" stroke="#ae961e"/><path d="M2554.5,703.1 L2554.5,699.2 L2559.3,646.0 L2559.3,649.8Z" fill="#af971f" stroke="#af971f"/><path d="M2554.5,699.2 L2554.4,695.3 L2559.2,642.3 L2559.3,646.0Z" fill="#b1991f" stroke="#b1991f"/><path d="M2554.4,695.3 L2554.1,691.4 L2558.9,638.5 L2559.2,642.3Z" fill="#b39a1f" stroke="#b39a1f"/><path d="M2554.1,691.4 L2553.7,687.6 L2558.4,634.8 L2558.9,638.5Z" fill="#b49b20" stroke="#b49b20"/><path d="M2553.7,687.6 L2553.1,683.7 L2557.8,631.1 L2558.4,634.8Z" fill="#b69d20" stroke="#b69d20"/><path d="M2553.1,683.7 L2552.4,679.9 L2557.1,627.4 L2557.8,631.1Z" fill="#b79e20" stroke="#b79e20"/><path d="M2552.4,679.9 L2551.5,676.1 L2556.1,623.7 L2557.1,627.4Z" fill="#b89f20" stroke="#b89f20"/><path d="M2551.5,676.1 L2550.4,672.3 L2555.1,620.1 L2556.1,623.7Z" fill="#baa021" stroke="#baa021"/><path d="M2550.4,672.3 L2549.2,668.5 L2553.8,616.4 L2555.1,620.1Z" fill="#bba221" stroke="#bba221"/><path d="M2549.2,668.5 L2547.9,664.8 L2552.5,612.8 L2553.8,616.4Z" fill="#bda321" stroke="#bda321"/><path d="M2547.9,664.8 L2546.4,661.1 L2550.9,609.2 L2552.5,612.8Z" fill="#bea421" stroke="#bea421"/><path d="M2546.4,661.1 L2544.7,657.3 L2549.3,605.6 L2550.9,609.2Z" fill="#bfa521" stroke="#bfa521"/><path d="M2544.7,657.3 L2542.9,653.7 L2547.5,602.1 L2549.3,605.6Z" fill="#c0a622" stroke="#c0a622"/><path d="M2542.9,653.7 L2541.0,650.0 L2545.5,598.5 L2547.5,602.1Z" fill="#c2a722" stroke="#c2a722"/><path d="M2541.0,650.0 L2538.9,646.3 L2543.4,595.0 L2545.5,598.5Z" fill="#c3a822" stroke="#c3a822"/><path d="M2538.9,646.3 L2536.7,642.7 L2541.1,591.5 L2543.4,595.0Z" fill="#c4a922" stroke="#c4a922"/><path d="M2536.7,642.7 L2534.4,639.1 L2538.8,588.0 L2541.1,591.5Z" fill="#c5aa22" stroke="#c5aa22"/><path d="M2534.4,639.1 L2531.9,635.5 L2536.3,584.6 L2538.8,588.0Z" fill="#c6ab23" stroke="#c6ab23"/><path d="M2531.9,635.5 L2529.3,632.0 L2533.6,581.2 L2536.3,584.6Z" fill="#c7ac23" stroke="#c7ac23"/><path d="M2529.3,632.0 L2526.5,628.5 L2530.8,577.8 L2533.6,581.2Z" fill="#c8ad23" stroke="#c8ad23"/><path d="M2526.5,628.5 L2523.6,625.0 L2527.9,574.4 L2530.8,577.8Z" fill="#c9ad23" stroke="#c9ad23"/><path d="M2523.6,625.0 L2520.6,621.5 L2524.9,571.0 L2527.9,574.4Z" fill="#caae23" stroke="#caae23"/><path d="M2520.6,621.5 L2517.5,618.1 L2521.7,567.7 L2524.9,571.0Z" fill="#cbaf24" stroke="#cbaf24"/><path d="M2517.5,618.1 L2514.2,614.6 L2518.4,564.4 L2521.7,567.7Z" fill="#cbb024" stroke="#cbb024"/><path d="M2514.2,614.6 L2510.8,611.3 L2515.0,561.2 L2518.4,564.4Z" fill="#ccb024" stroke="#ccb024"/><path d="M2510.8,611.3 L2507.3,607.9 L2511.4,557.9 L2515.0,561.2Z" fill="#cdb124" stroke="#cdb124"/><path d="M2507.3,607.9 L2503.7,604.6 L2507.8,554.7 L2511.4,557.9Z" fill="#ceb224" stroke="#ceb224"/><path d="M2503.7,604.6 L2500.0,601.3 L2504.0,551.5 L2507.8,554.7Z" fill="#ceb224" stroke="#ceb224"/><path d="M2500.0,601.3 L2496.1,598.0 L2500.1,548.4 L2504.0,551.5Z" fill="#cfb324" stroke="#cfb324"/><path d="M2496.1,598.0 L2492.2,594.8 L2496.1,545.3 L2500.1,548.4Z" fill="#d0b324" stroke="#d0b324"/><path d="M2492.2,594.8 L2488.1,591.6 L2492.0,542.2 L2496.1,545.3Z" fill="#d0b424" stroke="#d0b424"/><path d="M2488.1,591.6 L2483.9,588.4 L2487.8,539.1 L2492.0,542.2Z" fill="#d1b425" stroke="#d1b425"/><path d="M2483.9,588.4 L2479.6,585.3 L2483.4,536.1 L2487.8,539.1Z" fill="#d1b525" stroke="#d1b525"/><path d="M2479.6,585.3 L2475.2,582.2 L2479.0,533.1 L2483.4,536.1Z" fill="#d2b525" stroke="#d2b525"/><path d="M2475.2,582.2 L2470.7,579.1 L2474.4,530.1 L2479.0,533.1Z" fill="#d2b525" stroke="#d2b525"/><path d="M2470.7,579.1 L2466.1,576.1 L2469.8,527.2 L2474.4,530.1Z" fill="#d2b625" stroke="#d2b625"/><path d="M2466.1,576.1 L2461.3,573.0 L2465.0,524.3 L2469.8,527.2Z" fill="#d3b625" stroke="#d3b625"/><path d="M2461.3,573.0 L2456.5,570.1 L2460.2,521.5 L2465.0,524.3Z" fill="#d3b625" stroke="#d3b625"/><path d="M2456.5,570.1 L2451.6,567.1 L2455.2,518.6 L2460.2,521.5Z" fill="#d3b625" stroke="#d3b625"/><path d="M2451.6,567.1 L2446.6,564.2 L2450.1,515.8 L2455.2,518.6Z" fill="#d3b625" stroke="#d3b625"/><path d="M2446.6,564.2 L2441.5,561.4 L2445.0,513.1 L2450.1,515.8Z" fill="#d4b725" stroke="#d4b725"/><path d="M2441.5,561.4 L2436.3,558.5 L2439.8,510.3 L2445.0,513.1Z" fill="#d4b725" stroke="#d4b725"/><path d="M2436.3,558.5 L2431.0,555.7 L2434.4,507.6 L2439.8,510.3Z" fill="#d4b725" stroke="#d4b725"/><path d="M2431.0,555.7 L2425.6,553.0 L2429.0,505.0 L2434.4,507.6Z" fill="#d4b725" stroke="#d4b725"/><path d="M2425.6,553.0 L2420.2,550.3 L2423.5,502.4 L2429.0,505.0Z" fill="#d4b725" stroke="#d4b725"/><path d="M2420.2,550.3 L2414.6,547.6 L2417.9,499.8 L2423.5,502.4Z" fill="#d4b725" stroke="#d4b725"/><path d="M2414.6,547.6 L2409.0,544.9 L2412.2,497.2 L2417.9,499.8Z" fill="#d4b725" stroke="#d4b725"/><path d="M2409.0,544.9 L2403.3,542.3 L2406.4,494.7 L2412.2,497.2Z" fill="#d3b725" stroke="#d3b725"/><path d="M2403.3,542.3 L2397.4,539.7 L2400.6,492.2 L2406.4,494.7Z" fill="#d3b625" stroke="#d3b625"/><path d="M2397.4,539.7 L2391.6,537.2 L2394.7,489.8 L2400.6,492.2Z" fill="#d3b625" stroke="#d3b625"/><path d="M2391.6,537.2 L2385.6,534.7 L2388.7,487.3 L2394.7,489.8Z" fill="#d3b625" stroke="#d3b625"/><path d="M2385.6,534.7 L2379.6,532.2 L2382.6,485.0 L2388.7,487.3Z" fill="#d3b625" stroke="#d3b625"/><path d="M2379.6,532.2 L2373.5,529.8 L2376.4,482.6 L2382.6,485.0Z" fill="#d2b625" stroke="#d2b625"/><path d="M2373.5,529.8 L2367.3,527.4 L2370.2,480.3 L2376.4,482.6Z" fill="#d2b525" stroke="#d2b525"/><path d="M2367.3,527.4 L2361.0,525.1 L2363.9,478.1 L2370.2,480.3Z" fill="#d1b525" stroke="#d1b525"/><path d="M2361.0,525.1 L2354.7,522.7 L2357.5,475.8 L2363.9,478.1Z" fill="#d1b425" stroke="#d1b425"/><path d="M2354.7,522.7 L2348.3,520.5 L2351.1,473.6 L2357.5,475.8Z" fill="#d1b425" stroke="#d1b425"/><path d="M2348.3,520.5 L2341.8,518.2 L2344.5,471.5 L2351.1,473.6Z" fill="#d0b424" stroke="#d0b424"/><path d="M2341.8,518.2 L2335.3,516.0 L2338.0,469.4 L2344.5,471.5Z" fill="#cfb324" stroke="#cfb324"/><path d="M2335.3,516.0 L2328.7,513.9 L2331.3,467.3 L2338.0,469.4Z" fill="#cfb324" stroke="#cfb324"/><path d="M2328.7,513.9 L2322.0,511.8 L2324.6,465.3 L2331.3,467.3Z" fill="#ceb224" stroke="#ceb224"/><path d="M2322.0,511.8 L2315.3,509.7 L2317.8,463.3 L2324.6,465.3Z" fill="#ceb124" stroke="#ceb124"/><path d="M2315.3,509.7 L2308.5,507.6 L2311.0,461.3 L2317.8,463.3Z" fill="#cdb124" stroke="#cdb124"/><path d="M2308.5,507.6 L2301.7,505.6 L2304.1,459.4 L2311.0,461.3Z" fill="#ccb024" stroke="#ccb024"/><path d="M2301.7,505.6 L2294.8,503.7 L2297.2,457.5 L2304.1,459.4Z" fill="#cbb024" stroke="#cbb024"/><path d="M2294.8,503.7 L2287.8,501.8 L2290.2,455.6 L2297.2,457.5Z" fill="#caaf23" stroke="#caaf23"/><path d="M2287.8,501.8 L2280.8,499.9 L2283.1,453.8 L2290.2,455.6Z" fill="#caae23" stroke="#caae23"/><path d="M2280.8,499.9 L2273.8,498.0 L2276.0,452.0 L2283.1,453.8Z" fill="#c9ad23" stroke="#c9ad23"/><path d="M2273.8,498.0 L2266.7,496.2 L2268.9,450.3 L2276.0,452.0Z" fill="#c8ac23" stroke="#c8ac23"/><path d="M2266.7,496.2 L2259.5,494.5 L2261.6,448.6 L2268.9,450.3Z" fill="#c7ac23" stroke="#c7ac23"/><path d="M2259.5,494.5 L2252.3,492.7 L2254.4,446.9 L2261.6,448.6Z" fill="#c6ab23" stroke="#c6ab23"/><path d="M2252.3,492.7 L2245.0,491.1 L2247.1,445.3 L2254.4,446.9Z" fill="#c5aa22" stroke="#c5aa22"/><path d="M2245.0,491.1 L2237.7,489.4 L2239.7,443.7 L2247.1,445.3Z" fill="#c4a922" stroke="#c4a922"/><path d="M2237.7,489.4 L2230.4,487.8 L2232.3,442.2 L2239.7,443.7Z" fill="#c2a822" stroke="#c2a822"/><path d="M2230.4,487.8 L2223.0,486.2 L2224.9,440.7 L2232.3,442.2Z" fill="#c1a722" stroke="#c1a722"/><path d="M2223.0,486.2 L2215.5,484.7 L2217.4,439.2 L2224.9,440.7Z" fill="#c0a622" stroke="#c0a622"/><path d="M2215.5,484.7 L2208.0,483.2 L2209.8,437.8 L2217.4,439.2Z" fill="#bfa521" stroke="#bfa521"/><path d="M2208.0,483.2 L2200.5,481.8 L2202.3,436.4 L2209.8,437.8Z" fill="#bea421" stroke="#bea421"/><path d="M2200.5,481.8 L2193.0,480.4 L2194.7,435.0 L2202.3,436.4Z" fill="#bca321" stroke="#bca321"/><path d="M2193.0,480.4 L2185.4,479.0 L2187.0,433.7 L2194.7,435.0Z" fill="#bba121" stroke="#bba121"/><path d="M2185.4,479.0 L2177.7,477.7 L2179.3,432.5 L2187.0,433.7Z" fill="#baa020" stroke="#baa020"/><path d="M2177.7,477.7 L2170.1,476.4 L2171.6,431.2 L2179.3,432.5Z" fill="#b89f20" stroke="#b89f20"/><path d="M2170.1,476.4 L2162.4,475.2 L2163.9,430.0 L2171.6,431.2Z" fill="#b79e20" stroke="#b79e20"/><path d="M2162.4,475.2 L2154.6,474.0 L2156.1,428.9 L2163.9,430.0Z" fill="#b59d20" stroke="#b59d20"/><path d="M2154.6,474.0 L2146.9,472.8 L2148.3,427.7 L2156.1,428.9Z" fill="#b49b1f" stroke="#b49b1f"/><path d="M2146.9,472.8 L2139.1,471.7 L2140.4,426.7 L2148.3,427.7Z" fill="#b29a1f" stroke="#b29a1f"/><path d="M2139.1,471.7 L2131.2,470.6 L2132.5,425.6 L2140.4,426.7Z" fill="#b1991f" stroke="#b1991f"/><path d="M2131.2,470.6 L2123.4,469.6 L2124.6,424.6 L2132.5,425.6Z" fill="#af971f" stroke="#af971f"/><path d="M2123.4,469.6 L2115.5,468.6 L2116.7,423.7 L2124.6,424.6Z" fill="#ad961e" stroke="#ad961e"/><path d="M2115.5,468.6 L2107.6,467.6 L2108.7,422.7 L2116.7,423.7Z" fill="#ac941e" stroke="#ac941e"/><path d="M2107.6,467.6 L2099.6,466.7 L2100.7,421.9 L2108.7,422.7Z" fill="#aa931e" stroke="#aa931e"/><path d="M2099.6,466.7 L2091.7,465.8 L2092.7,421.0 L2100.7,421.9Z" fill="#a8911d" stroke="#a8911d"/><path d="M2091.7,465.8 L2083.7,465.0 L2084.7,420.2 L2092.7,421.0Z" fill="#a7901d" stroke="#a7901d"/><path d="M2083.7,465.0 L2075.7,464.2 L2076.6,419.5 L2084.7,420.2Z" fill="#a58e1d" stroke="#a58e1d"/><path d="M2075.7,464.2 L2067.7,463.5 L2068.6,418.7 L2076.6,419.5Z" fill="#a38d1c" stroke="#a38d1c"/><path d="M2067.7,463.5 L2059.6,462.7 L2060.5,418.0 L2068.6,418.7Z" fill="#a18b1c" stroke="#a18b1c"/><path d="M2059.6,462.7 L2051.6,462.1 L2052.4,417.4 L2060.5,418.0Z" fill="#9f8a1c" stroke="#9f8a1c"/><path d="M2051.6,462.1 L2043.5,461.4 L2044.2,416.8 L2052.4,417.4Z" fill="#9d881c" stroke="#9d881c"/><path d="M2043.5,461.4 L2035.4,460.8 L2036.1,416.2 L2044.2,416.8Z" fill="#9c861b" stroke="#9c861b"/><path d="M2035.4,460.8 L2027.3,460.3 L2027.9,415.7 L2036.1,416.2Z" fill="#9a851b" stroke="#9a851b"/><path d="M2027.3,460.3 L2019.2,459.8 L2019.8,415.2 L2027.9,415.7Z" fill="#98831a" stroke="#98831a"/><path d="M2019.2,459.8 L2011.0,459.3 L2011.6,414.7 L2019.8,415.2Z" fill="#96811a" stroke="#96811a"/><path d="M2011.0,459.3 L2002.9,458.9 L2003.4,414.3 L2011.6,414.7Z" fill="#947f1a" stroke="#947f1a"/><path d="M2002.9,458.9 L1994.7,458.5 L1995.2,414.0 L2003.4,414.3Z" fill="#927e19" stroke="#927e19"/><path d="M1994.7,458.5 L1986.6,458.2 L1987.0,413.6 L1995.2,414.0Z" fill="#907c19" stroke="#907c19"/><path d="M1986.6,458.2 L1978.4,457.8 L1978.7,413.3 L1987.0,413.6Z" fill="#8d7a19" stroke="#8d7a19"/><path d="M1978.4,457.8 L1970.2,457.6 L1970.5,413.1 L1978.7,413.3Z" fill="#8b7818" stroke="#8b7818"/><path d="M1970.2,457.6 L1962.0,457.4 L1962.3,412.9 L1970.5,413.1Z" fill="#897618" stroke="#897618"/><path d="M1962.0,457.4 L1953.8,457.2 L1954.0,412.7 L1962.3,412.9Z" fill="#877518" stroke="#877518"/><path d="M1953.8,457.2 L1945.6,457.0 L1945.8,412.5 L1954.0,412.7Z" fill="#857317" stroke="#857317"/><path d="M1945.6,457.0 L1937.4,456.9 L1937.5,412.4 L1945.8,412.5Z" fill="#837117" stroke="#837117"/><path d="M1937.4,456.9 L1929.2,456.9 L1929.3,412.4 L1937.5,412.4Z" fill="#806f16" stroke="#806f16"/><path d="M1929.2,456.9 L1921.0,456.8 L1921.0,412.4 L1929.3,412.4Z" fill="#7e6d16" stroke="#7e6d16"/><path d="M1921.0,456.8 L1912.8,456.9 L1912.7,412.4 L1921.0,412.4Z" fill="#7c6b16" stroke="#7c6b16"/><path d="M1912.8,456.9 L1904.6,456.9 L1904.5,412.4 L1912.7,412.4Z" fill="#7a6915" stroke="#7a6915"/><path d="M1904.6,456.9 L1896.4,457.0 L1896.2,412.5 L1904.5,412.4Z" fill="#776715" stroke="#776715"/><path d="M1896.4,457.0 L1888.2,457.2 L1888.0,412.7 L1896.2,412.5Z" fill="#756514" stroke="#756514"/><path d="M1888.2,457.2 L1880.0,457.4 L1879.7,412.9 L1888.0,412.7Z" fill="#736314" stroke="#736314"/><path d="M1880.0,457.4 L1871.8,457.6 L1871.5,413.1 L1879.7,412.9Z" fill="#706114" stroke="#706114"/><path d="M1871.8,457.6 L1863.6,457.8 L1863.3,413.3 L1871.5,413.1Z" fill="#6e5f13" stroke="#6e5f13"/><path d="M1863.6,457.8 L1855.4,458.2 L1855.0,413.6 L1863.3,413.3Z" fill="#6c5d13" stroke="#6c5d13"/><path d="M1855.4,458.2 L1847.3,458.5 L1846.8,414.0 L1855.0,413.6Z" fill="#695b12" stroke="#695b12"/><path d="M1847.3,458.5 L1839.1,458.9 L1838.6,414.3 L1846.8,414.0Z" fill="#675912" stroke="#675912"/><path d="M1839.1,458.9 L1831.0,459.3 L1830.4,414.7 L1838.6,414.3Z" fill="#645711" stroke="#645711"/><path d="M1831.0,459.3 L1822.8,459.8 L1822.2,415.2 L1830.4,414.7Z" fill="#625511" stroke="#625511"/><path d="M1822.8,459.8 L1814.7,460.3 L1814.1,415.7 L1822.2,415.2Z" fill="#605211" stroke="#605211"/><path d="M1814.7,460.3 L1806.6,460.8 L1805.9,416.2 L1814.1,415.7Z" fill="#5d5010" stroke="#5d5010"/><path d="M1806.6,460.8 L1798.5,461.4 L1797.8,416.8 L1805.9,416.2Z" fill="#5b4e10" stroke="#5b4e10"/><path d="M1798.5,461.4 L1790.4,462.1 L1789.6,417.4 L1797.8,416.8Z" fill="#584c0f" stroke="#584c0f"/><path d="M1790.4,462.1 L1782.4,462.7 L1781.5,418.0 L1789.6,417.4Z" fill="#564a0f" stroke="#564a0f"/><path d="M1782.4,462.7 L1774.3,463.5 L1773.4,418.7 L1781.5,418.0Z" fill="#53480e" stroke="#53480e"/><path d="M1774.3,463.5 L1766.3,464.2 L1765.4,419.5 L1773.4,418.7Z" fill="#51460e" stroke="#51460e"/><path d="M1766.3,464.2 L1758.3,465.0 L1757.3,420.2 L1765.4,419.5Z" fill="#4e430d" stroke="#4e430d"/><path d="M1758.3,465.0 L1750.3,465.8 L1749.3,421.0 L1757.3,420.2Z" fill="#4c410d" stroke="#4c410d"/><path d="M1750.3,465.8 L1742.4,466.7 L1741.3,421.9 L1749.3,421.0Z" fill="#493f0d" stroke="#493f0d"/><path d="M1742.4,466.7 L1734.4,467.6 L1733.3,422.7 L1741.3,421.9Z" fill="#473d0c" stroke="#473d0c"/><path d="M1734.4,467.6 L1726.5,468.6 L1725.3,423.7 L1733.3,422.7Z" fill="#443b0c" stroke="#443b0c"/><path d="M1726.5,468.6 L1718.6,469.6 L1717.4,424.6 L1725.3,423.7Z" fill="#42390b" stroke="#42390b"/><path d="M1718.6,469.6 L1710.8,470.6 L1709.5,425.6 L1717.4,424.6Z" fill="#3f360b" stroke="#3f360b"/><path d="M1710.8,470.6 L1702.9,471.7 L1701.6,426.7 L1709.5,425.6Z" fill="#3c340a" stroke="#3c340a"/><path d="M1702.9,471.7 L1695.1,472.8 L1693.7,427.7 L1701.6,426.7Z" fill="#3a320a" stroke="#3a320a"/><path d="M1695.1,472.8 L1687.4,474.0 L1685.9,428.9 L1693.7,427.7Z" fill="#373009" stroke="#373009"/><path d="M1687.4,474.0 L1679.6,475.2 L1678.1,430.0 L1685.9,428.9Z" fill="#352e09" stroke="#352e09"/><path d="M1679.6,475.2 L1671.9,476.4 L1670.4,431.2 L1678.1,430.0Z" fill="#322b09" stroke="#322b09"/><path d="M1671.9,476.4 L1664.3,477.7 L1662.7,432.5 L1670.4,431.2Z" fill="#332c09" stroke="#332c09"/><path d="M1664.3,477.7 L1656.6,479.0 L1655.0,433.7 L1662.7,432.5Z" fill="#352e09" stroke="#352e09"/><path d="M1656.6,479.0 L1649.0,480.4 L1647.3,435.0 L1655.0,433.7Z" fill="#383009" stroke="#383009"/><path d="M1649.0,480.4 L1641.5,481.8 L1639.7,436.4 L1647.3,435.0Z" fill="#3a320a" stroke="#3a320a"/><path d="M1641.5,481.8 L1634.0,483.2 L1632.2,437.8 L1639.7,436.4Z" fill="#3d350a" stroke="#3d350a"/><path d="M1634.0,483.2 L1626.5,484.7 L1624.6,439.2 L1632.2,437.8Z" fill="#40370b" stroke="#40370b"/><path d="M1626.5,484.7 L1619.0,486.2 L1617.1,440.7 L1624.6,439.2Z" fill="#42390b" stroke="#42390b"/><path d="M1619.0,486.2 L1611.6,487.8 L1609.7,442.2 L1617.1,440.7Z" fill="#453b0c" stroke="#453b0c"/><path d="M1611.6,487.8 L1604.3,489.4 L1602.3,443.7 L1609.7,442.2Z" fill="#473d0c" stroke="#473d0c"/><path d="M1604.3,489.4 L1597.0,491.1 L1594.9,445.3 L1602.3,443.7Z" fill="#4a400d" stroke="#4a400d"/><path d="M1597.0,491.1 L1589.7,492.7 L1587.6,446.9 L1594.9,445.3Z" fill="#4c420d" stroke="#4c420d"/><path d="M1589.7,492.7 L1582.5,494.5 L1580.4,448.6 L1587.6,446.9Z" fill="#4f440e" stroke="#4f440e"/><path d="M1582.5,494.5 L1575.3,496.2 L1573.1,450.3 L1580.4,448.6Z" fill="#51460e" stroke="#51460e"/><path d="M1575.3,496.2 L1568.2,498.0 L1566.0,452.0 L1573.1,450.3Z" fill="#54480e" stroke="#54480e"/><path d="M1568.2,498.0 L1561.2,499.9 L1558.9,453.8 L1566.0,452.0Z" fill="#564a0f" stroke="#564a0f"/><path d="M1561.2,499.9 L1554.2,501.8 L1551.8,455.6 L1558.9,453.8Z" fill="#594d0f" stroke="#594d0f"/><path d="M1554.2,501.8 L1547.2,503.7 L1544.8,457.5 L1551.8,455.6Z" fill="#5b4f10" stroke="#5b4f10"/><path d="M1547.2,503.7 L1540.3,505.6 L1537.9,459.4 L1544.8,457.5Z" fill="#5e5110" stroke="#5e5110"/><path d="M1540.3,505.6 L1533.5,507.6 L1531.0,461.3 L1537.9,459.4Z" fill="#605311" stroke="#605311"/><path d="M1533.5,507.6 L1526.7,509.7 L1524.2,463.3 L1531.0,461.3Z" fill="#635511" stroke="#635511"/><path d="M1526.7,509.7 L1520.0,511.8 L1517.4,465.3 L1524.2,463.3Z" fill="#655711" stroke="#655711"/><path d="M1520.0,511.8 L1513.3,513.9 L1510.7,467.3 L1517.4,465.3Z" fill="#675912" stroke="#675912"/><path d="M1513.3,513.9 L1506.7,516.0 L1504.0,469.4 L1510.7,467.3Z" fill="#6a5b12" stroke="#6a5b12"/><path d="M1506.7,516.0 L1500.2,518.2 L1497.5,471.5 L1504.0,469.4Z" fill="#6c5d13" stroke="#6c5d13"/><path d="M1500.2,518.2 L1493.7,520.5 L1490.9,473.6 L1497.5,471.5Z" fill="#6e5f13" stroke="#6e5f13"/><path d="M1493.7,520.5 L1487.3,522.7 L1484.5,475.8 L1490.9,473.6Z" fill="#716114" stroke="#716114"/><path d="M1487.3,522.7 L1481.0,525.1 L1478.1,478.1 L1484.5,475.8Z" fill="#736314" stroke="#736314"/><path d="M1481.0,525.1 L1474.7,527.4 L1471.8,480.3 L1478.1,478.1Z" fill="#766514" stroke="#766514"/><path d="M1474.7,527.4 L1468.5,529.8 L1465.6,482.6 L1471.8,480.3Z" fill="#786715" stroke="#786715"/><path d="M1468.5,529.8 L1462.4,532.2 L1459.4,485.0 L1465.6,482.6Z" fill="#7a6915" stroke="#7a6915"/><path d="M1462.4,532.2 L1456.4,534.7 L1453.3,487.3 L1459.4,485.0Z" fill="#7c6b16" stroke="#7c6b16"/><path d="M1456.4,534.7 L1450.4,537.2 L1447.3,489.8 L1453.3,487.3Z" fill="#7f6d16" stroke="#7f6d16"/><path d="M1450.4,537.2 L1444.6,539.7 L1441.4,492.2 L1447.3,489.8Z" fill="#816f16" stroke="#816f16"/><path d="M1444.6,539.7 L1438.7,542.3 L1435.6,494.7 L1441.4,492.2Z" fill="#837117" stroke="#837117"/><path d="M1438.7,542.3 L1433.0,544.9 L1429.8,497.2 L1435.6,494.7Z" fill="#857317" stroke="#857317"/><path d="M1433.0,544.9 L1427.4,547.6 L1424.1,499.8 L1429.8,497.2Z" fill="#877518" stroke="#877518"/><path d="M1427.4,547.6 L1421.8,550.3 L1418.5,502.4 L1424.1,499.8Z" fill="#8a7718" stroke="#8a7718"/><path d="M1421.8,550.3 L1416.4,553.0 L1413.0,505.0 L1418.5,502.4Z" fill="#8c7918" stroke="#8c7918"/><path d="M1416.4,553.0 L1411.0,555.7 L1407.6,507.6 L1413.0,505.0Z" fill="#8e7a19" stroke="#8e7a19"/></g>
<g stroke-width="0.8" stroke-linejoin="round"><path d="M1494.9,619.3 L1490.7,621.8 L1487.8,573.7 L1492.1,571.3Z" fill="#907c19" stroke="#907c19"/><path d="M1490.7,621.8 L1486.5,624.3 L1483.6,576.1 L1487.8,573.7Z" fill="#927e19" stroke="#927e19"/><path d="M1486.5,624.3 L1482.5,626.8 L1479.5,578.5 L1483.6,576.1Z" fill="#94801a" stroke="#94801a"/><path d="M1482.5,626.8 L1478.5,629.4 L1475.5,581.0 L1479.5,578.5Z" fill="#96821a" stroke="#96821a"/><path d="M1478.5,629.4 L1474.6,631.9 L1471.5,583.5 L1475.5,581.0Z" fill="#98831b" stroke="#98831b"/><path d="M1474.6,631.9 L1470.7,634.6 L1467.7,586.0 L1471.5,583.5Z" fill="#9a851b" stroke="#9a851b"/><path d="M1470.7,634.6 L1467.0,637.2 L1463.9,588.6 L1467.7,586.0Z" fill="#9c871b" stroke="#9c871b"/><path d="M1467.0,637.2 L1463.4,639.9 L1460.2,591.2 L1463.9,588.6Z" fill="#9e881c" stroke="#9e881c"/><path d="M1463.4,639.9 L1459.8,642.5 L1456.6,593.8 L1460.2,591.2Z" fill="#a08a1c" stroke="#a08a1c"/><path d="M1459.8,642.5 L1456.3,645.3 L1453.1,596.4 L1456.6,593.8Z" fill="#a28c1c" stroke="#a28c1c"/><path d="M1456.3,645.3 L1453.0,648.0 L1449.8,599.0 L1453.1,596.4Z" fill="#a38d1d" stroke="#a38d1d"/><path d="M1453.0,648.0 L1449.7,650.8 L1446.5,601.7 L1449.8,599.0Z" fill="#a58f1d" stroke="#a58f1d"/><path d="M1449.7,650.8 L1446.5,653.6 L1443.3,604.4 L1446.5,601.7Z" fill="#a7901d" stroke="#a7901d"/><path d="M1446.5,653.6 L1443.5,656.4 L1440.2,607.1 L1443.3,604.4Z" fill="#a9921d" stroke="#a9921d"/><path d="M1443.5,656.4 L1440.5,659.2 L1437.2,609.9 L1440.2,607.1Z" fill="#aa931e" stroke="#aa931e"/><path d="M1440.5,659.2 L1437.6,662.1 L1434.3,612.7 L1437.2,609.9Z" fill="#ac951e" stroke="#ac951e"/><path d="M1437.6,662.1 L1434.9,665.0 L1431.5,615.5 L1434.3,612.7Z" fill="#ae961e" stroke="#ae961e"/><path d="M1434.9,665.0 L1432.2,667.9 L1428.8,618.3 L1431.5,615.5Z" fill="#af971f" stroke="#af971f"/><path d="M1432.2,667.9 L1429.6,670.9 L1426.2,621.1 L1428.8,618.3Z" fill="#b1991f" stroke="#b1991f"/><path d="M1429.6,670.9 L1427.2,673.8 L1423.7,624.0 L1426.2,621.1Z" fill="#b39a1f" stroke="#b39a1f"/><path d="M1427.2,673.8 L1424.8,676.8 L1421.3,626.9 L1423.7,624.0Z" fill="#b49b20" stroke="#b49b20"/><path d="M1424.8,676.8 L1422.6,679.8 L1419.1,629.8 L1421.3,626.9Z" fill="#b69d20" stroke="#b69d20"/><path d="M1422.6,679.8 L1420.5,682.8 L1416.9,632.7 L1419.1,629.8Z" fill="#b79e20" stroke="#b79e20"/><path d="M1420.5,682.8 L1418.4,685.9 L1414.9,635.6 L1416.9,632.7Z" fill="#b89f20" stroke="#b89f20"/><path d="M1418.4,685.9 L1416.5,688.9 L1412.9,638.6 L1414.9,635.6Z" fill="#baa021" stroke="#baa021"/><path d="M1416.5,688.9 L1414.7,692.0 L1411.1,641.6 L1412.9,638.6Z" fill="#bba221" stroke="#bba221"/><path d="M1414.7,692.0 L1413.1,695.1 L1409.4,644.6 L1411.1,641.6Z" fill="#bda321" stroke="#bda321"/><path d="M1413.1,695.1 L1411.5,698.2 L1407.8,647.6 L1409.4,644.6Z" fill="#bea421" stroke="#bea421"/><path d="M1411.5,698.2 L1410.1,701.4 L1406.4,650.6 L1407.8,647.6Z" fill="#bfa521" stroke="#bfa521"/><path d="M1410.1,701.4 L1408.7,704.5 L1405.0,653.7 L1406.4,650.6Z" fill="#c0a622" stroke="#c0a622"/><path d="M1408.7,704.5 L1407.5,707.7 L1403.8,656.7 L1405.0,653.7Z" fill="#c2a722" stroke="#c2a722"/><path d="M1407.5,707.7 L1406.5,710.8 L1402.7,659.8 L1403.8,656.7Z" fill="#c3a822" stroke="#c3a822"/><path d="M1406.5,710.8 L1405.5,714.0 L1401.7,662.9 L1402.7,659.8Z" fill="#c4a922" stroke="#c4a922"/><path d="M1405.5,714.0 L1404.7,717.2 L1400.9,666.0 L1401.7,662.9Z" fill="#c5aa22" stroke="#c5aa22"/><path d="M1404.7,717.2 L1403.9,720.5 L1400.2,669.1 L1400.9,666.0Z" fill="#c6ab23" stroke="#c6ab23"/><path d="M1403.9,720.5 L1403.4,723.7 L1399.6,672.2 L1400.2,669.1Z" fill="#c7ac23" stroke="#c7ac23"/><path d="M1403.4,723.7 L1402.9,726.9 L1399.1,675.4 L1399.6,672.2Z" fill="#c8ad23" stroke="#c8ad23"/><path d="M1402.9,726.9 L1402.6,730.2 L1398.8,678.5 L1399.1,675.4Z" fill="#c9ad23" stroke="#c9ad23"/><path d="M1402.6,730.2 L1402.4,733.5 L1398.5,681.7 L1398.8,678.5Z" fill="#caae23" stroke="#caae23"/><path d="M1402.4,733.5 L1402.3,736.7 L1398.5,684.8 L1398.5,681.7Z" fill="#cbaf24" stroke="#cbaf24"/><path d="M1402.3,736.7 L1402.4,740.0 L1398.5,688.0 L1398.5,684.8Z" fill="#cbb024" stroke="#cbb024"/><path d="M1402.4,740.0 L1402.6,743.3 L1398.7,691.2 L1398.5,688.0Z" fill="#ccb024" stroke="#ccb024"/><path d="M2439.4,743.3 L2439.6,740.0 L2443.5,688.0 L2443.3,691.2Z" fill="#b1991f" stroke="#b1991f"/><path d="M2439.6,740.0 L2439.7,736.7 L2443.5,684.8 L2443.5,688.0Z" fill="#b39a1f" stroke="#b39a1f"/><path d="M2439.7,736.7 L2439.6,733.5 L2443.5,681.7 L2443.5,684.8Z" fill="#b49b20" stroke="#b49b20"/><path d="M2439.6,733.5 L2439.4,730.2 L2443.2,678.5 L2443.5,681.7Z" fill="#b69d20" stroke="#b69d20"/><path d="M2439.4,730.2 L2439.1,726.9 L2442.9,675.4 L2443.2,678.5Z" fill="#b79e20" stroke="#b79e20"/><path d="M2439.1,726.9 L2438.6,723.7 L2442.4,672.2 L2442.9,675.4Z" fill="#b89f20" stroke="#b89f20"/><path d="M2438.6,723.7 L2438.1,720.5 L2441.8,669.1 L2442.4,672.2Z" fill="#baa021" stroke="#baa021"/><path d="M2438.1,720.5 L2437.3,717.2 L2441.1,666.0 L2441.8,669.1Z" fill="#bba221" stroke="#bba221"/><path d="M2437.3,717.2 L2436.5,714.0 L2440.3,662.9 L2441.1,666.0Z" fill="#bda321" stroke="#bda321"/><path d="M2436.5,714.0 L2435.5,710.8 L2439.3,659.8 L2440.3,662.9Z" fill="#bea421" stroke="#bea421"/><path d="M2435.5,710.8 L2434.5,707.7 L2438.2,656.7 L2439.3,659.8Z" fill="#bfa521" stroke="#bfa521"/><path d="M2434.5,707.7 L2433.3,704.5 L2437.0,653.7 L2438.2,656.7Z" fill="#c0a622" stroke="#c0a622"/><path d="M2433.3,704.5 L2431.9,701.4 L2435.6,650.6 L2437.0,653.7Z" fill="#c2a722" stroke="#c2a722"/><path d="M2431.9,701.4 L2430.5,698.2 L2434.2,647.6 L2435.6,650.6Z" fill="#c3a822" stroke="#c3a822"/><path d="M2430.5,698.2 L2428.9,695.1 L2432.6,644.6 L2434.2,647.6Z" fill="#c4a922" stroke="#c4a922"/><path d="M2428.9,695.1 L2427.3,692.0 L2430.9,641.6 L2432.6,644.6Z" fill="#c5aa22" stroke="#c5aa22"/><path d="M2427.3,692.0 L2425.5,688.9 L2429.1,638.6 L2430.9,641.6Z" fill="#c6ab23" stroke="#c6ab23"/><path d="M2425.5,688.9 L2423.6,685.9 L2427.1,635.6 L2429.1,638.6Z" fill="#c7ac23" stroke="#c7ac23"/><path d="M2423.6,685.9 L2421.5,682.8 L2425.1,632.7 L2427.1,635.6Z" fill="#c8ad23" stroke="#c8ad23"/><path d="M2421.5,682.8 L2419.4,679.8 L2422.9,629.8 L2425.1,632.7Z" fill="#c9ad23" stroke="#c9ad23"/><path d="M2419.4,679.8 L2417.2,676.8 L2420.7,626.9 L2422.9,629.8Z" fill="#caae23" stroke="#caae23"/><path d="M2417.2,676.8 L2414.8,673.8 L2418.3,624.0 L2420.7,626.9Z" fill="#cbaf24" stroke="#cbaf24"/><path d="M2414.8,673.8 L2412.4,670.9 L2415.8,621.1 L2418.3,624.0Z" fill="#cbb024" stroke="#cbb024"/><path d="M2412.4,670.9 L2409.8,667.9 L2413.2,618.3 L2415.8,621.1Z" fill="#ccb024" stroke="#ccb024"/><path d="M2409.8,667.9 L2407.1,665.0 L2410.5,615.5 L2413.2,618.3Z" fill="#cdb124" stroke="#cdb124"/><path d="M2407.1,665.0 L2404.4,662.1 L2407.7,612.7 L2410.5,615.5Z" fill="#ceb224" stroke="#ceb224"/><path d="M2404.4,662.1 L2401.5,659.2 L2404.8,609.9 L2407.7,612.7Z" fill="#ceb224" stroke="#ceb224"/><path d="M2401.5,659.2 L2398.5,656.4 L2401.8,607.1 L2404.8,609.9Z" fill="#cfb324" stroke="#cfb324"/><path d="M2398.5,656.4 L2395.5,653.6 L2398.7,604.4 L2401.8,607.1Z" fill="#d0b324" stroke="#d0b324"/><path d="M2395.5,653.6 L2392.3,650.8 L2395.5,601.7 L2398.7,604.4Z" fill="#d0b424" stroke="#d0b424"/><path d="M2392.3,650.8 L2389.0,648.0 L2392.2,599.0 L2395.5,601.7Z" fill="#d1b425" stroke="#d1b425"/><path d="M2389.0,648.0 L2385.7,645.3 L2388.9,596.4 L2392.2,599.0Z" fill="#d1b525" stroke="#d1b525"/><path d="M2385.7,645.3 L2382.2,642.5 L2385.4,593.8 L2388.9,596.4Z" fill="#d2b525" stroke="#d2b525"/><path d="M2382.2,642.5 L2378.6,639.9 L2381.8,591.2 L2385.4,593.8Z" fill="#d2b525" stroke="#d2b525"/><path d="M2378.6,639.9 L2375.0,637.2 L2378.1,588.6 L2381.8,591.2Z" fill="#d2b625" stroke="#d2b625"/><path d="M2375.0,637.2 L2371.3,634.6 L2374.3,586.0 L2378.1,588.6Z" fill="#d3b625" stroke="#d3b625"/><path d="M2371.3,634.6 L2367.4,631.9 L2370.5,583.5 L2374.3,586.0Z" fill="#d3b625" stroke="#d3b625"/><path d="M2367.4,631.9 L2363.5,629.4 L2366.5,581.0 L2370.5,583.5Z" fill="#d3b625" stroke="#d3b625"/><path d="M2363.5,629.4 L2359.5,626.8 L2362.5,578.5 L2366.5,581.0Z" fill="#d3b625" stroke="#d3b625"/><path d="M2359.5,626.8 L2355.5,624.3 L2358.4,576.1 L2362.5,578.5Z" fill="#d4b725" stroke="#d4b725"/><path d="M2355.5,624.3 L2351.3,621.8 L2354.2,573.7 L2358.4,576.1Z" fill="#d4b725" stroke="#d4b725"/><path d="M2351.3,621.8 L2347.1,619.3 L2349.9,571.3 L2354.2,573.7Z" fill="#d4b725" stroke="#d4b725"/><path d="M2347.1,619.3 L2342.7,616.9 L2345.6,569.0 L2349.9,571.3Z" fill="#d4b725" stroke="#d4b725"/><path d="M2342.7,616.9 L2338.3,614.5 L2341.1,566.6 L2345.6,569.0Z" fill="#d4b725" stroke="#d4b725"/><path d="M2338.3,614.5 L2333.9,612.1 L2336.6,564.3 L2341.1,566.6Z" fill="#d4b725" stroke="#d4b725"/><path d="M2333.9,612.1 L2329.3,609.8 L2332.0,562.1 L2336.6,564.3Z" fill="#d4b725" stroke="#d4b725"/><path d="M2329.3,609.8 L2324.7,607.4 L2327.4,559.8 L2332.0,562.1Z" fill="#d3b725" stroke="#d3b725"/><path d="M2324.7,607.4 L2320.0,605.2 L2322.6,557.6 L2327.4,559.8Z" fill="#d3b625" stroke="#d3b625"/><path d="M2320.0,605.2 L2315.2,602.9 L2317.8,555.5 L2322.6,557.6Z" fill="#d3b625" stroke="#d3b625"/><path d="M2315.2,602.9 L2310.3,600.7 L2312.9,553.3 L2317.8,555.5Z" fill="#d3b625" stroke="#d3b625"/><path d="M2310.3,600.7 L2305.4,598.5 L2308.0,551.2 L2312.9,553.3Z" fill="#d3b625" stroke="#d3b625"/><path d="M2305.4,598.5 L2300.4,596.3 L2302.9,549.1 L2308.0,551.2Z" fill="#d2b625" stroke="#d2b625"/><path d="M2300.4,596.3 L2295.4,594.2 L2297.8,547.1 L2302.9,549.1Z" fill="#d2b525" stroke="#d2b525"/><path d="M2295.4,594.2 L2290.2,592.1 L2292.7,545.0 L2297.8,547.1Z" fill="#d1b525" stroke="#d1b525"/><path d="M2290.2,592.1 L2285.1,590.1 L2287.4,543.0 L2292.7,545.0Z" fill="#d1b425" stroke="#d1b425"/><path d="M2285.1,590.1 L2279.8,588.0 L2282.2,541.1 L2287.4,543.0Z" fill="#d1b425" stroke="#d1b425"/><path d="M2279.8,588.0 L2274.5,586.1 L2276.8,539.2 L2282.2,541.1Z" fill="#d0b424" stroke="#d0b424"/><path d="M2274.5,586.1 L2269.1,584.1 L2271.4,537.3 L2276.8,539.2Z" fill="#cfb324" stroke="#cfb324"/><path d="M2269.1,584.1 L2263.7,582.2 L2265.9,535.4 L2271.4,537.3Z" fill="#cfb324" stroke="#cfb324"/><path d="M2263.7,582.2 L2258.2,580.3 L2260.4,533.6 L2265.9,535.4Z" fill="#ceb224" stroke="#ceb224"/><path d="M2258.2,580.3 L2252.6,578.4 L2254.8,531.8 L2260.4,533.6Z" fill="#ceb124" stroke="#ceb124"/><path d="M2252.6,578.4 L2247.0,576.6 L2249.2,530.0 L2254.8,531.8Z" fill="#cdb124" stroke="#cdb124"/><path d="M2247.0,576.6 L2241.4,574.8 L2243.5,528.3 L2249.2,530.0Z" fill="#ccb024" stroke="#ccb024"/><path d="M2241.4,574.8 L2235.7,573.0 L2237.7,526.6 L2243.5,528.3Z" fill="#cbb024" stroke="#cbb024"/><path d="M2235.7,573.0 L2229.9,571.3 L2231.9,524.9 L2237.7,526.6Z" fill="#caaf23" stroke="#caaf23"/><path d="M2229.9,571.3 L2224.1,569.6 L2226.0,523.3 L2231.9,524.9Z" fill="#caae23" stroke="#caae23"/><path d="M2224.1,569.6 L2218.2,568.0 L2220.1,521.7 L2226.0,523.3Z" fill="#c9ad23" stroke="#c9ad23"/><path d="M2218.2,568.0 L2212.3,566.4 L2214.2,520.1 L2220.1,521.7Z" fill="#c8ac23" stroke="#c8ac23"/><path d="M2212.3,566.4 L2206.3,564.8 L2208.2,518.6 L2214.2,520.1Z" fill="#c7ac23" stroke="#c7ac23"/><path d="M2206.3,564.8 L2200.3,563.2 L2202.1,517.1 L2208.2,518.6Z" fill="#c6ab23" stroke="#c6ab23"/><path d="M2200.3,563.2 L2194.3,561.7 L2196.0,515.6 L2202.1,517.1Z" fill="#c5aa22" stroke="#c5aa22"/><path d="M2194.3,561.7 L2188.2,560.2 L2189.9,514.2 L2196.0,515.6Z" fill="#c4a922" stroke="#c4a922"/><path d="M2188.2,560.2 L2182.0,558.8 L2183.7,512.8 L2189.9,514.2Z" fill="#c2a822" stroke="#c2a822"/><path d="M2182.0,558.8 L2175.8,557.4 L2177.5,511.5 L2183.7,512.8Z" fill="#c1a722" stroke="#c1a722"/><path d="M2175.8,557.4 L2169.6,556.0 L2171.2,510.1 L2177.5,511.5Z" fill="#c0a622" stroke="#c0a622"/><path d="M2169.6,556.0 L2163.4,554.7 L2164.9,508.9 L2171.2,510.1Z" fill="#bfa521" stroke="#bfa521"/><path d="M2163.4,554.7 L2157.1,553.4 L2158.6,507.6 L2164.9,508.9Z" fill="#bea421" stroke="#bea421"/><path d="M2157.1,553.4 L2150.7,552.1 L2152.2,506.4 L2158.6,507.6Z" fill="#bca321" stroke="#bca321"/><path d="M2150.7,552.1 L2144.3,550.9 L2145.8,505.2 L2152.2,506.4Z" fill="#bba121" stroke="#bba121"/><path d="M2144.3,550.9 L2137.9,549.7 L2139.3,504.0 L2145.8,505.2Z" fill="#baa020" stroke="#baa020"/><path d="M2137.9,549.7 L2131.5,548.5 L2132.8,502.9 L2139.3,504.0Z" fill="#b89f20" stroke="#b89f20"/><path d="M2131.5,548.5 L2125.0,547.4 L2126.3,501.8 L2132.8,502.9Z" fill="#b79e20" stroke="#b79e20"/><path d="M2125.0,547.4 L2118.5,546.3 L2119.8,500.8 L2126.3,501.8Z" fill="#b59d20" stroke="#b59d20"/><path d="M2118.5,546.3 L2112.0,545.3 L2113.2,499.8 L2119.8,500.8Z" fill="#b49b1f" stroke="#b49b1f"/><path d="M2112.0,545.3 L2105.4,544.3 L2106.6,498.8 L2113.2,499.8Z" fill="#b29a1f" stroke="#b29a1f"/><path d="M2105.4,544.3 L2098.8,543.3 L2099.9,497.9 L2106.6,498.8Z" fill="#b1991f" stroke="#b1991f"/><path d="M2098.8,543.3 L2092.2,542.3 L2093.3,496.9 L2099.9,497.9Z" fill="#af971f" stroke="#af971f"/><path d="M2092.2,542.3 L2085.6,541.4 L2086.6,496.1 L2093.3,496.9Z" fill="#ad961e" stroke="#ad961e"/><path d="M2085.6,541.4 L2078.9,540.6 L2079.9,495.2 L2086.6,496.1Z" fill="#ac941e" stroke="#ac941e"/><path d="M2078.9,540.6 L2072.2,539.7 L2073.1,494.4 L2079.9,495.2Z" fill="#aa931e" stroke="#aa931e"/><path d="M2072.2,539.7 L2065.5,538.9 L2066.4,493.7 L2073.1,494.4Z" fill="#a8911d" stroke="#a8911d"/><path d="M2065.5,538.9 L2058.7,538.2 L2059.6,492.9 L2066.4,493.7Z" fill="#a7901d" stroke="#a7901d"/><path d="M2058.7,538.2 L2052.0,537.5 L2052.8,492.2 L2059.6,492.9Z" fill="#a58e1d" stroke="#a58e1d"/><path d="M2052.0,537.5 L2045.2,536.8 L2046.0,491.6 L2052.8,492.2Z" fill="#a38d1c" stroke="#a38d1c"/><path d="M2045.2,536.8 L2038.4,536.1 L2039.1,491.0 L2046.0,491.6Z" fill="#a18b1c" stroke="#a18b1c"/><path d="M2038.4,536.1 L2031.6,535.5 L2032.3,490.4 L2039.1,491.0Z" fill="#9f8a1c" stroke="#9f8a1c"/><path d="M2031.6,535.5 L2024.7,535.0 L2025.4,489.8 L2032.3,490.4Z" fill="#9d881c" stroke="#9d881c"/><path d="M2024.7,535.0 L2017.9,534.4 L2018.5,489.3 L2025.4,489.8Z" fill="#9c861b" stroke="#9c861b"/><path d="M2017.9,534.4 L2011.0,533.9 L2011.6,488.8 L2018.5,489.3Z" fill="#9a851b" stroke="#9a851b"/><path d="M2011.0,533.9 L2004.2,533.5 L2004.7,488.4 L2011.6,488.8Z" fill="#98831a" stroke="#98831a"/><path d="M2004.2,533.5 L1997.3,533.0 L1997.8,488.0 L2004.7,488.4Z" fill="#96811a" stroke="#96811a"/><path d="M1997.3,533.0 L1990.4,532.6 L1990.8,487.6 L1997.8,488.0Z" fill="#947f1a" stroke="#947f1a"/><path d="M1990.4,532.6 L1983.5,532.3 L1983.9,487.2 L1990.8,487.6Z" fill="#927e19" stroke="#927e19"/><path d="M1983.5,532.3 L1976.6,532.0 L1976.9,486.9 L1983.9,487.2Z" fill="#907c19" stroke="#907c19"/><path d="M1976.6,532.0 L1969.6,531.7 L1969.9,486.7 L1976.9,486.9Z" fill="#8d7a19" stroke="#8d7a19"/><path d="M1969.6,531.7 L1962.7,531.5 L1963.0,486.4 L1969.9,486.7Z" fill="#8b7818" stroke="#8b7818"/><path d="M1962.7,531.5 L1955.8,531.3 L1956.0,486.2 L1963.0,486.4Z" fill="#897618" stroke="#897618"/><path d="M1955.8,531.3 L1948.8,531.1 L1949.0,486.1 L1956.0,486.2Z" fill="#877518" stroke="#877518"/><path d="M1948.8,531.1 L1941.9,531.0 L1942.0,486.0 L1949.0,486.1Z" fill="#857317" stroke="#857317"/><path d="M1941.9,531.0 L1934.9,530.9 L1935.0,485.9 L1942.0,486.0Z" fill="#837117" stroke="#837117"/><path d="M1934.9,530.9 L1928.0,530.8 L1928.0,485.8 L1935.0,485.9Z" fill="#806f16" stroke="#806f16"/><path d="M1928.0,530.8 L1921.0,530.8 L1921.0,485.8 L1928.0,485.8Z" fill="#7e6d16" stroke="#7e6d16"/><path d="M1921.0,530.8 L1914.0,530.8 L1914.0,485.8 L1921.0,485.8Z" fill="#7c6b16" stroke="#7c6b16"/><path d="M1914.0,530.8 L1907.1,530.9 L1907.0,485.9 L1914.0,485.8Z" fill="#7a6915" stroke="#7a6915"/><path d="M1907.1,530.9 L1900.1,531.0 L1900.0,486.0 L1907.0,485.9Z" fill="#776715" stroke="#776715"/><path d="M1900.1,531.0 L1893.2,531.1 L1893.0,486.1 L1900.0,486.0Z" fill="#756514" stroke="#756514"/><path d="M1893.2,531.1 L1886.2,531.3 L1886.0,486.2 L1893.0,486.1Z" fill="#736314" stroke="#736314"/><path d="M1886.2,531.3 L1879.3,531.5 L1879.0,486.4 L1886.0,486.2Z" fill="#706114" stroke="#706114"/><path d="M1879.3,531.5 L1872.4,531.7 L1872.1,486.7 L1879.0,486.4Z" fill="#6e5f13" stroke="#6e5f13"/><path d="M1872.4,531.7 L1865.4,532.0 L1865.1,486.9 L1872.1,486.7Z" fill="#6c5d13" stroke="#6c5d13"/><path d="M1865.4,532.0 L1858.5,532.3 L1858.1,487.2 L1865.1,486.9Z" fill="#695b12" stroke="#695b12"/><path d="M1858.5,532.3 L1851.6,532.6 L1851.2,487.6 L1858.1,487.2Z" fill="#675912" stroke="#675912"/><path d="M1851.6,532.6 L1844.7,533.0 L1844.2,488.0 L1851.2,487.6Z" fill="#645711" stroke="#645711"/><path d="M1844.7,533.0 L1837.8,533.5 L1837.3,488.4 L1844.2,488.0Z" fill="#625511" stroke="#625511"/><path d="M1837.8,533.5 L1831.0,533.9 L1830.4,488.8 L1837.3,488.4Z" fill="#605211" stroke="#605211"/><path d="M1831.0,533.9 L1824.1,534.4 L1823.5,489.3 L1830.4,488.8Z" fill="#5d5010" stroke="#5d5010"/><path d="M1824.1,534.4 L1817.3,535.0 L1816.6,489.8 L1823.5,489.3Z" fill="#5b4e10" stroke="#5b4e10"/><path d="M1817.3,535.0 L1810.4,535.5 L1809.7,490.4 L1816.6,489.8Z" fill="#584c0f" stroke="#584c0f"/><path d="M1810.4,535.5 L1803.6,536.1 L1802.9,491.0 L1809.7,490.4Z" fill="#564a0f" stroke="#564a0f"/><path d="M1803.6,536.1 L1796.8,536.8 L1796.0,491.6 L1802.9,491.0Z" fill="#53480e" stroke="#53480e"/><path d="M1796.8,536.8 L1790.0,537.5 L1789.2,492.2 L1796.0,491.6Z" fill="#51460e" stroke="#51460e"/><path d="M1790.0,537.5 L1783.3,538.2 L1782.4,492.9 L1789.2,492.2Z" fill="#4e430d" stroke="#4e430d"/><path d="M1783.3,538.2 L1776.5,538.9 L1775.6,493.7 L1782.4,492.9Z" fill="#4c410d" stroke="#4c410d"/><path d="M1776.5,538.9 L1769.8,539.7 L1768.9,494.4 L1775.6,493.7Z" fill="#493f0d" stroke="#493f0d"/><path d="M1769.8,539.7 L1763.1,540.6 L1762.1,495.2 L1768.9,494.4Z" fill="#473d0c" stroke="#473d0c"/><path d="M1763.1,540.6 L1756.4,541.4 L1755.4,496.1 L1762.1,495.2Z" fill="#443b0c" stroke="#443b0c"/><path d="M1756.4,541.4 L1749.8,542.3 L1748.7,496.9 L1755.4,496.1Z" fill="#42390b" stroke="#42390b"/><path d="M1749.8,542.3 L1743.2,543.3 L1742.1,497.9 L1748.7,496.9Z" fill="#3f360b" stroke="#3f360b"/><path d="M1743.2,543.3 L1736.6,544.3 L1735.4,498.8 L1742.1,497.9Z" fill="#3c340a" stroke="#3c340a"/><path d="M1736.6,544.3 L1730.0,545.3 L1728.8,499.8 L1735.4,498.8Z" fill="#3a320a" stroke="#3a320a"/><path d="M1730.0,545.3 L1723.5,546.3 L1722.2,500.8 L1728.8,499.8Z" fill="#373009" stroke="#373009"/><path d="M1723.5,546.3 L1717.0,547.4 L1715.7,501.8 L1722.2,500.8Z" fill="#352e09" stroke="#352e09"/><path d="M1717.0,547.4 L1710.5,548.5 L1709.2,502.9 L1715.7,501.8Z" fill="#322b09" stroke="#322b09"/><path d="M1710.5,548.5 L1704.1,549.7 L1702.7,504.0 L1709.2,502.9Z" fill="#332c09" stroke="#332c09"/><path d="M1704.1,549.7 L1697.7,550.9 L1696.2,505.2 L1702.7,504.0Z" fill="#352e09" stroke="#352e09"/><path d="M1697.7,550.9 L1691.3,552.1 L1689.8,506.4 L1696.2,505.2Z" fill="#383009" stroke="#383009"/><path d="M1691.3,552.1 L1684.9,553.4 L1683.4,507.6 L1689.8,506.4Z" fill="#3a320a" stroke="#3a320a"/><path d="M1684.9,553.4 L1678.6,554.7 L1677.1,508.9 L1683.4,507.6Z" fill="#3d350a" stroke="#3d350a"/><path d="M1678.6,554.7 L1672.4,556.0 L1670.8,510.1 L1677.1,508.9Z" fill="#40370b" stroke="#40370b"/><path d="M1672.4,556.0 L1666.2,557.4 L1664.5,511.5 L1670.8,510.1Z" fill="#42390b" stroke="#42390b"/><path d="M1666.2,557.4 L1660.0,558.8 L1658.3,512.8 L1664.5,511.5Z" fill="#453b0c" stroke="#453b0c"/><path d="M1660.0,558.8 L1653.8,560.2 L1652.1,514.2 L1658.3,512.8Z" fill="#473d0c" stroke="#473d0c"/><path d="M1653.8,560.2 L1647.7,561.7 L1646.0,515.6 L1652.1,514.2Z" fill="#4a400d" stroke="#4a400d"/><path d="M1647.7,561.7 L1641.7,563.2 L1639.9,517.1 L1646.0,515.6Z" fill="#4c420d" stroke="#4c420d"/><path d="M1641.7,563.2 L1635.7,564.8 L1633.8,518.6 L1639.9,517.1Z" fill="#4f440e" stroke="#4f440e"/><path d="M1635.7,564.8 L1629.7,566.4 L1627.8,520.1 L1633.8,518.6Z" fill="#51460e" stroke="#51460e"/><path d="M1629.7,566.4 L1623.8,568.0 L1621.9,521.7 L1627.8,520.1Z" fill="#54480e" stroke="#54480e"/><path d="M1623.8,568.0 L1617.9,569.6 L1616.0,523.3 L1621.9,521.7Z" fill="#564a0f" stroke="#564a0f"/><path d="M1617.9,569.6 L1612.1,571.3 L1610.1,524.9 L1616.0,523.3Z" fill="#594d0f" stroke="#594d0f"/><path d="M1612.1,571.3 L1606.3,573.0 L1604.3,526.6 L1610.1,524.9Z" fill="#5b4f10" stroke="#5b4f10"/><path d="M1606.3,573.0 L1600.6,574.8 L1598.5,528.3 L1604.3,526.6Z" fill="#5e5110" stroke="#5e5110"/><path d="M1600.6,574.8 L1595.0,576.6 L1592.8,530.0 L1598.5,528.3Z" fill="#605311" stroke="#605311"/><path d="M1595.0,576.6 L1589.4,578.4 L1587.2,531.8 L1592.8,530.0Z" fill="#635511" stroke="#635511"/><path d="M1589.4,578.4 L1583.8,580.3 L1581.6,533.6 L1587.2,531.8Z" fill="#655711" stroke="#655711"/><path d="M1583.8,580.3 L1578.3,582.2 L1576.1,535.4 L1581.6,533.6Z" fill="#675912" stroke="#675912"/><path d="M1578.3,582.2 L1572.9,584.1 L1570.6,537.3 L1576.1,535.4Z" fill="#6a5b12" stroke="#6a5b12"/><path d="M1572.9,584.1 L1567.5,586.1 L1565.2,539.2 L1570.6,537.3Z" fill="#6c5d13" stroke="#6c5d13"/><path d="M1567.5,586.1 L1562.2,588.0 L1559.8,541.1 L1565.2,539.2Z" fill="#6e5f13" stroke="#6e5f13"/><path d="M1562.2,588.0 L1556.9,590.1 L1554.6,543.0 L1559.8,541.1Z" fill="#716114" stroke="#716114"/><path d="M1556.9,590.1 L1551.8,592.1 L1549.3,545.0 L1554.6,543.0Z" fill="#736314" stroke="#736314"/><path d="M1551.8,592.1 L1546.6,594.2 L1544.2,547.1 L1549.3,545.0Z" fill="#766514" stroke="#766514"/><path d="M1546.6,594.2 L1541.6,596.3 L1539.1,549.1 L1544.2,547.1Z" fill="#786715" stroke="#786715"/><path d="M1541.6,596.3 L1536.6,598.5 L1534.0,551.2 L1539.1,549.1Z" fill="#7a6915" stroke="#7a6915"/><path d="M1536.6,598.5 L1531.7,600.7 L1529.1,553.3 L1534.0,551.2Z" fill="#7c6b16" stroke="#7c6b16"/><path d="M1531.7,600.7 L1526.8,602.9 L1524.2,555.5 L1529.1,553.3Z" fill="#7f6d16" stroke="#7f6d16"/><path d="M1526.8,602.9 L1522.0,605.2 L1519.4,557.6 L1524.2,555.5Z" fill="#816f16" stroke="#816f16"/><path d="M1522.0,605.2 L1517.3,607.4 L1514.6,559.8 L1519.4,557.6Z" fill="#837117" stroke="#837117"/><path d="M1517.3,607.4 L1512.7,609.8 L1510.0,562.1 L1514.6,559.8Z" fill="#857317" stroke="#857317"/><path d="M1512.7,609.8 L1508.1,612.1 L1505.4,564.3 L1510.0,562.1Z" fill="#877518" stroke="#877518"/><path d="M1508.1,612.1 L1503.7,614.5 L1500.9,566.6 L1505.4,564.3Z" fill="#8a7718" stroke="#8a7718"/><path d="M1503.7,614.5 L1499.3,616.9 L1496.4,569.0 L1500.9,566.6Z" fill="#8c7918" stroke="#8c7918"/><path d="M1499.3,616.9 L1494.9,619.3 L1492.1,571.3 L1496.4,569.0Z" fill="#8e7a19" stroke="#8e7a19"/></g>
<path d="M2570.0,589.3 L2566.7,583.2 L2563.0,577.2 L2558.9,571.2 L2554.4,565.3 L2549.5,559.4 L2544.2,553.7 L2538.6,548.0 L2532.5,542.4 L2526.2,536.9 L2519.5,531.5 L2512.4,526.1 L2505.1,520.9 L2497.4,515.7 L2489.4,510.6 L2481.1,505.7 L2472.5,500.8 L2463.6,496.0 L2454.5,491.4 L2445.1,486.8 L2435.4,482.3 L2425.5,477.9 L2415.4,473.7 L2405.0,469.5 L2394.4,465.4 L2383.6,461.5 L2372.5,457.6 L2361.3,453.9 L2349.9,450.3 L2338.3,446.8 L2326.5,443.3 L2314.5,440.0 L2302.4,436.9 L2290.1,433.8 L2277.7,430.8 L2265.1,427.9 L2252.4,425.2 L2239.6,422.5 L2226.6,420.0 L2213.5,417.6 L2200.3,415.3 L2187.0,413.1 L2173.5,411.0 L2160.0,409.1 L2146.4,407.2 L2132.7,405.5 L2119.0,403.8 L2105.1,402.3 L2091.2,400.9 L2077.3,399.6 L2063.2,398.4 L2049.2,397.3 L2035.0,396.4 L2020.9,395.5 L2006.7,394.8 L1992.4,394.2 L1978.2,393.7 L1963.9,393.3 L1949.6,393.0 L1935.3,392.8 L1921.0,392.8 L1906.7,392.8 L1892.4,393.0 L1878.1,393.3 L1863.8,393.7 L1849.6,394.2 L1835.3,394.8 L1821.1,395.5 L1807.0,396.4 L1792.8,397.3 L1778.8,398.4 L1764.7,399.6 L1750.8,400.9 L1736.9,402.3 L1723.0,403.8 L1709.3,405.5 L1695.6,407.2 L1682.0,409.1 L1668.5,411.0 L1655.0,413.1 L1641.7,415.3 L1628.5,417.6 L1615.4,420.0 L1602.4,422.5 L1589.6,425.2 L1576.9,427.9 L1564.3,430.8 L1551.9,433.8 L1539.6,436.9 L1527.5,440.0 L1515.5,443.3 L1503.7,446.8 L1492.1,450.3 L1480.7,453.9 L1469.5,457.6 L1458.4,461.5 L1447.6,465.4 L1437.0,469.5 L1426.6,473.7 L1416.5,477.9 L1406.6,482.3 L1396.9,486.8 L1387.5,491.4 L1378.4,496.0 L1369.5,500.8 L1360.9,505.7 L1352.6,510.6 L1344.6,515.7 L1336.9,520.9 L1329.6,526.1 L1322.5,531.5 L1315.8,536.9 L1309.5,542.4 L1303.4,548.0 L1297.8,553.7 L1292.5,559.4 L1287.6,565.3 L1283.1,571.2 L1279.0,577.2 L1275.3,583.2 L1272.0,589.3 L1384.4,588.5 L1386.6,583.5 L1389.2,578.4 L1392.2,573.5 L1395.4,568.6 L1399.1,563.7 L1403.0,558.9 L1407.3,554.2 L1411.8,549.5 L1416.7,544.9 L1421.9,540.3 L1427.4,535.8 L1433.2,531.4 L1439.2,527.0 L1445.5,522.7 L1452.1,518.5 L1459.0,514.4 L1466.1,510.4 L1473.4,506.4 L1481.0,502.5 L1488.8,498.7 L1496.9,494.9 L1505.1,491.3 L1513.6,487.7 L1522.3,484.3 L1531.1,480.9 L1540.2,477.6 L1549.5,474.3 L1558.9,471.2 L1568.5,468.2 L1578.3,465.2 L1588.2,462.4 L1598.3,459.6 L1608.6,457.0 L1619.0,454.4 L1629.5,451.9 L1640.1,449.5 L1650.9,447.2 L1661.8,445.0 L1672.8,442.9 L1684.0,440.9 L1695.2,439.0 L1706.5,437.2 L1717.9,435.5 L1729.4,433.9 L1741.0,432.3 L1752.7,430.9 L1764.4,429.6 L1776.2,428.4 L1788.1,427.2 L1800.0,426.2 L1811.9,425.3 L1823.9,424.4 L1836.0,423.7 L1848.1,423.0 L1860.2,422.5 L1872.3,422.0 L1884.5,421.7 L1896.6,421.5 L1908.8,421.3 L1921.0,421.3 L1933.2,421.3 L1945.4,421.5 L1957.5,421.7 L1969.7,422.0 L1981.8,422.5 L1993.9,423.0 L2006.0,423.7 L2018.1,424.4 L2030.1,425.3 L2042.0,426.2 L2053.9,427.2 L2065.8,428.4 L2077.6,429.6 L2089.3,430.9 L2101.0,432.3 L2112.6,433.9 L2124.1,435.5 L2135.5,437.2 L2146.8,439.0 L2158.0,440.9 L2169.2,442.9 L2180.2,445.0 L2191.1,447.2 L2201.9,449.5 L2212.5,451.9 L2223.0,454.4 L2233.4,457.0 L2243.7,459.6 L2253.8,462.4 L2263.7,465.2 L2273.5,468.2 L2283.1,471.2 L2292.5,474.3 L2301.8,477.6 L2310.9,480.9 L2319.7,484.3 L2328.4,487.7 L2336.9,491.3 L2345.1,494.9 L2353.2,498.7 L2361.0,502.5 L2368.6,506.4 L2375.9,510.4 L2383.0,514.4 L2389.9,518.5 L2396.5,522.7 L2402.8,527.0 L2408.8,531.4 L2414.6,535.8 L2420.1,540.3 L2425.3,544.9 L2430.2,549.5 L2434.7,554.2 L2439.0,558.9 L2442.9,563.7 L2446.6,568.6 L2449.8,573.5 L2452.8,578.4 L2455.4,583.5 L2457.6,588.5Z" fill="#eecd2a"/>
<path d="M2460.2,553.4 L2458.0,548.5 L2455.4,543.6 L2452.4,538.8 L2449.1,534.0 L2445.4,529.3 L2441.5,524.6 L2437.2,520.0 L2432.6,515.4 L2427.7,510.9 L2422.4,506.4 L2416.9,502.1 L2411.1,497.8 L2405.0,493.5 L2398.7,489.4 L2392.0,485.3 L2385.2,481.2 L2378.0,477.3 L2370.6,473.4 L2363.0,469.6 L2355.1,465.9 L2347.1,462.3 L2338.8,458.7 L2330.2,455.2 L2321.5,451.9 L2312.6,448.6 L2303.5,445.3 L2294.2,442.2 L2284.7,439.2 L2275.0,436.2 L2265.2,433.4 L2255.2,430.6 L2245.1,427.9 L2234.8,425.3 L2224.3,422.8 L2213.8,420.4 L2203.1,418.0 L2192.2,415.8 L2181.3,413.7 L2170.2,411.6 L2159.0,409.7 L2147.8,407.8 L2136.4,406.1 L2124.9,404.4 L2113.4,402.8 L2101.7,401.3 L2090.0,399.9 L2078.3,398.6 L2066.4,397.4 L2054.5,396.3 L2042.5,395.3 L2030.5,394.4 L2018.5,393.6 L2006.4,392.9 L1994.2,392.3 L1982.1,391.7 L1969.9,391.3 L1957.7,391.0 L1945.5,390.7 L1933.2,390.6 L1921.0,390.5 L1908.8,390.6 L1896.5,390.7 L1884.3,391.0 L1872.1,391.3 L1859.9,391.7 L1847.8,392.3 L1835.6,392.9 L1823.5,393.6 L1811.5,394.4 L1799.5,395.3 L1787.5,396.3 L1775.6,397.4 L1763.7,398.6 L1752.0,399.9 L1740.3,401.3 L1728.6,402.8 L1717.1,404.4 L1705.6,406.1 L1694.2,407.8 L1683.0,409.7 L1671.8,411.6 L1660.7,413.7 L1649.8,415.8 L1638.9,418.0 L1628.2,420.4 L1617.7,422.8 L1607.2,425.3 L1596.9,427.9 L1586.8,430.6 L1576.8,433.4 L1567.0,436.2 L1557.3,439.2 L1547.8,442.2 L1538.5,445.3 L1529.4,448.6 L1520.5,451.9 L1511.8,455.2 L1503.2,458.7 L1494.9,462.3 L1486.9,465.9 L1479.0,469.6 L1471.4,473.4 L1464.0,477.3 L1456.8,481.2 L1450.0,485.3 L1443.3,489.4 L1437.0,493.5 L1430.9,497.8 L1425.1,502.1 L1419.6,506.4 L1414.3,510.9 L1409.4,515.4 L1404.8,520.0 L1400.5,524.6 L1396.6,529.3 L1392.9,534.0 L1389.6,538.8 L1386.6,543.6 L1384.0,548.5 L1381.8,553.4 L1400.6,553.3 L1402.7,548.5 L1405.1,543.8 L1407.9,539.2 L1411.0,534.5 L1414.5,530.0 L1418.2,525.4 L1422.3,521.0 L1426.7,516.6 L1431.4,512.2 L1436.4,507.9 L1441.6,503.7 L1447.2,499.5 L1453.0,495.4 L1459.1,491.3 L1465.4,487.4 L1472.0,483.5 L1478.9,479.6 L1486.0,475.9 L1493.3,472.2 L1500.9,468.6 L1508.6,465.1 L1516.6,461.6 L1524.8,458.3 L1533.2,455.0 L1541.8,451.8 L1550.6,448.6 L1559.6,445.6 L1568.8,442.7 L1578.1,439.8 L1587.6,437.0 L1597.2,434.3 L1607.0,431.7 L1617.0,429.2 L1627.1,426.7 L1637.3,424.4 L1647.6,422.1 L1658.1,419.9 L1668.7,417.9 L1679.4,415.9 L1690.2,414.0 L1701.2,412.1 L1712.2,410.4 L1723.3,408.8 L1734.5,407.3 L1745.7,405.8 L1757.1,404.5 L1768.5,403.2 L1780.0,402.0 L1791.5,401.0 L1803.1,400.0 L1814.8,399.1 L1826.5,398.3 L1838.2,397.6 L1850.0,397.0 L1861.8,396.5 L1873.6,396.1 L1885.4,395.7 L1897.3,395.5 L1909.1,395.4 L1921.0,395.3 L1932.9,395.4 L1944.7,395.5 L1956.6,395.7 L1968.4,396.1 L1980.2,396.5 L1992.0,397.0 L2003.8,397.6 L2015.5,398.3 L2027.2,399.1 L2038.9,400.0 L2050.5,401.0 L2062.0,402.0 L2073.5,403.2 L2084.9,404.5 L2096.3,405.8 L2107.5,407.3 L2118.7,408.8 L2129.8,410.4 L2140.8,412.1 L2151.8,414.0 L2162.6,415.9 L2173.3,417.9 L2183.9,419.9 L2194.4,422.1 L2204.7,424.4 L2214.9,426.7 L2225.0,429.2 L2235.0,431.7 L2244.8,434.3 L2254.4,437.0 L2263.9,439.8 L2273.2,442.7 L2282.4,445.6 L2291.4,448.6 L2300.2,451.8 L2308.8,455.0 L2317.2,458.3 L2325.4,461.6 L2333.4,465.1 L2341.1,468.6 L2348.7,472.2 L2356.0,475.9 L2363.1,479.6 L2370.0,483.5 L2376.6,487.4 L2382.9,491.3 L2389.0,495.4 L2394.8,499.5 L2400.4,503.7 L2405.6,507.9 L2410.6,512.2 L2415.3,516.6 L2419.7,521.0 L2423.8,525.4 L2427.5,530.0 L2431.0,534.5 L2434.1,539.2 L2436.9,543.8 L2439.3,548.5 L2441.4,553.3Z" fill="#eecd2a"/>
<g stroke-width="0.8" stroke-linejoin="round"><path d="M1492.7,523.3 L1488.5,525.6 L1485.5,476.1 L1489.8,473.9Z" fill="#907c19" stroke="#907c19"/><path d="M1488.5,525.6 L1484.3,527.9 L1481.3,478.4 L1485.5,476.1Z" fill="#927e19" stroke="#927e19"/><path d="M1484.3,527.9 L1480.2,530.2 L1477.2,480.6 L1481.3,478.4Z" fill="#94801a" stroke="#94801a"/><path d="M1480.2,530.2 L1476.2,532.6 L1473.1,482.9 L1477.2,480.6Z" fill="#96821a" stroke="#96821a"/><path d="M1476.2,532.6 L1472.2,535.0 L1469.1,485.2 L1473.1,482.9Z" fill="#98831b" stroke="#98831b"/><path d="M1472.2,535.0 L1468.4,537.4 L1465.3,487.5 L1469.1,485.2Z" fill="#9a851b" stroke="#9a851b"/><path d="M1468.4,537.4 L1464.6,539.8 L1461.5,489.8 L1465.3,487.5Z" fill="#9c871b" stroke="#9c871b"/><path d="M1464.6,539.8 L1461.0,542.3 L1457.8,492.2 L1461.5,489.8Z" fill="#9e881c" stroke="#9e881c"/><path d="M1461.0,542.3 L1457.4,544.8 L1454.2,494.6 L1457.8,492.2Z" fill="#a08a1c" stroke="#a08a1c"/><path d="M1457.4,544.8 L1453.9,547.3 L1450.6,497.0 L1454.2,494.6Z" fill="#a28c1c" stroke="#a28c1c"/><path d="M1453.9,547.3 L1450.5,549.8 L1447.2,499.4 L1450.6,497.0Z" fill="#a38d1d" stroke="#a38d1d"/><path d="M1450.5,549.8 L1447.2,552.4 L1443.9,501.9 L1447.2,499.4Z" fill="#a58f1d" stroke="#a58f1d"/><path d="M1447.2,552.4 L1444.0,555.0 L1440.7,504.4 L1443.9,501.9Z" fill="#a7901d" stroke="#a7901d"/><path d="M1444.0,555.0 L1440.9,557.6 L1437.6,506.9 L1440.7,504.4Z" fill="#a9921d" stroke="#a9921d"/><path d="M1440.9,557.6 L1438.0,560.2 L1434.5,509.4 L1437.6,506.9Z" fill="#aa931e" stroke="#aa931e"/><path d="M1438.0,560.2 L1435.1,562.9 L1431.6,512.0 L1434.5,509.4Z" fill="#ac951e" stroke="#ac951e"/><path d="M1435.1,562.9 L1432.3,565.5 L1428.8,514.6 L1431.6,512.0Z" fill="#ae961e" stroke="#ae961e"/><path d="M1432.3,565.5 L1429.6,568.2 L1426.1,517.2 L1428.8,514.6Z" fill="#af971f" stroke="#af971f"/><path d="M1429.6,568.2 L1427.0,570.9 L1423.5,519.8 L1426.1,517.2Z" fill="#b1991f" stroke="#b1991f"/><path d="M1427.0,570.9 L1424.5,573.7 L1421.0,522.4 L1423.5,519.8Z" fill="#b39a1f" stroke="#b39a1f"/><path d="M1424.5,573.7 L1422.2,576.4 L1418.6,525.1 L1421.0,522.4Z" fill="#b49b20" stroke="#b49b20"/><path d="M1422.2,576.4 L1419.9,579.2 L1416.3,527.7 L1418.6,525.1Z" fill="#b69d20" stroke="#b69d20"/><path d="M1419.9,579.2 L1417.7,582.0 L1414.1,530.4 L1416.3,527.7Z" fill="#b79e20" stroke="#b79e20"/><path d="M1417.7,582.0 L1415.7,584.8 L1412.1,533.1 L1414.1,530.4Z" fill="#b89f20" stroke="#b89f20"/><path d="M1415.7,584.8 L1413.8,587.7 L1410.1,535.8 L1412.1,533.1Z" fill="#baa021" stroke="#baa021"/><path d="M1413.8,587.7 L1412.0,590.5 L1408.3,538.6 L1410.1,535.8Z" fill="#bba221" stroke="#bba221"/><path d="M1412.0,590.5 L1410.3,593.4 L1406.6,541.3 L1408.3,538.6Z" fill="#bda321" stroke="#bda321"/><path d="M1410.3,593.4 L1408.7,596.2 L1405.0,544.1 L1406.6,541.3Z" fill="#bea421" stroke="#bea421"/><path d="M1408.7,596.2 L1407.3,599.1 L1403.5,546.9 L1405.0,544.1Z" fill="#bfa521" stroke="#bfa521"/><path d="M1407.3,599.1 L1405.9,602.1 L1402.1,549.7 L1403.5,546.9Z" fill="#c0a622" stroke="#c0a622"/><path d="M1405.9,602.1 L1404.7,605.0 L1400.9,552.5 L1402.1,549.7Z" fill="#c2a722" stroke="#c2a722"/><path d="M1404.7,605.0 L1403.6,607.9 L1399.8,555.4 L1400.9,552.5Z" fill="#c3a822" stroke="#c3a822"/><path d="M1403.6,607.9 L1402.6,610.9 L1398.8,558.2 L1399.8,555.4Z" fill="#c4a922" stroke="#c4a922"/><path d="M1402.6,610.9 L1401.8,613.9 L1397.9,561.1 L1398.8,558.2Z" fill="#c5aa22" stroke="#c5aa22"/><path d="M1401.8,613.9 L1401.1,616.8 L1397.2,563.9 L1397.9,561.1Z" fill="#c6ab23" stroke="#c6ab23"/><path d="M1401.1,616.8 L1400.5,619.8 L1396.6,566.8 L1397.2,563.9Z" fill="#c7ac23" stroke="#c7ac23"/><path d="M1400.5,619.8 L1400.0,622.8 L1396.1,569.7 L1396.6,566.8Z" fill="#c8ad23" stroke="#c8ad23"/><path d="M1400.0,622.8 L1399.7,625.8 L1395.8,572.6 L1396.1,569.7Z" fill="#c9ad23" stroke="#c9ad23"/><path d="M1399.7,625.8 L1399.5,628.9 L1395.5,575.5 L1395.8,572.6Z" fill="#caae23" stroke="#caae23"/><path d="M1399.5,628.9 L1399.4,631.9 L1395.5,578.4 L1395.5,575.5Z" fill="#cbaf24" stroke="#cbaf24"/><path d="M1399.4,631.9 L1399.4,634.9 L1395.5,581.3 L1395.5,578.4Z" fill="#cbb024" stroke="#cbb024"/><path d="M1399.4,634.9 L1399.6,638.0 L1395.7,584.3 L1395.5,581.3Z" fill="#ccb024" stroke="#ccb024"/><path d="M2442.4,638.0 L2442.6,634.9 L2446.5,581.3 L2446.3,584.3Z" fill="#b1991f" stroke="#b1991f"/><path d="M2442.6,634.9 L2442.6,631.9 L2446.5,578.4 L2446.5,581.3Z" fill="#b39a1f" stroke="#b39a1f"/><path d="M2442.6,631.9 L2442.5,628.9 L2446.5,575.5 L2446.5,578.4Z" fill="#b49b20" stroke="#b49b20"/><path d="M2442.5,628.9 L2442.3,625.8 L2446.2,572.6 L2446.5,575.5Z" fill="#b69d20" stroke="#b69d20"/><path d="M2442.3,625.8 L2442.0,622.8 L2445.9,569.7 L2446.2,572.6Z" fill="#b79e20" stroke="#b79e20"/><path d="M2442.0,622.8 L2441.5,619.8 L2445.4,566.8 L2445.9,569.7Z" fill="#b89f20" stroke="#b89f20"/><path d="M2441.5,619.8 L2440.9,616.8 L2444.8,563.9 L2445.4,566.8Z" fill="#baa021" stroke="#baa021"/><path d="M2440.9,616.8 L2440.2,613.9 L2444.1,561.1 L2444.8,563.9Z" fill="#bba221" stroke="#bba221"/><path d="M2440.2,613.9 L2439.4,610.9 L2443.2,558.2 L2444.1,561.1Z" fill="#bda321" stroke="#bda321"/><path d="M2439.4,610.9 L2438.4,607.9 L2442.2,555.4 L2443.2,558.2Z" fill="#bea421" stroke="#bea421"/><path d="M2438.4,607.9 L2437.3,605.0 L2441.1,552.5 L2442.2,555.4Z" fill="#bfa521" stroke="#bfa521"/><path d="M2437.3,605.0 L2436.1,602.1 L2439.9,549.7 L2441.1,552.5Z" fill="#c0a622" stroke="#c0a622"/><path d="M2436.1,602.1 L2434.7,599.1 L2438.5,546.9 L2439.9,549.7Z" fill="#c2a722" stroke="#c2a722"/><path d="M2434.7,599.1 L2433.3,596.2 L2437.0,544.1 L2438.5,546.9Z" fill="#c3a822" stroke="#c3a822"/><path d="M2433.3,596.2 L2431.7,593.4 L2435.4,541.3 L2437.0,544.1Z" fill="#c4a922" stroke="#c4a922"/><path d="M2431.7,593.4 L2430.0,590.5 L2433.7,538.6 L2435.4,541.3Z" fill="#c5aa22" stroke="#c5aa22"/><path d="M2430.0,590.5 L2428.2,587.7 L2431.9,535.8 L2433.7,538.6Z" fill="#c6ab23" stroke="#c6ab23"/><path d="M2428.2,587.7 L2426.3,584.8 L2429.9,533.1 L2431.9,535.8Z" fill="#c7ac23" stroke="#c7ac23"/><path d="M2426.3,584.8 L2424.3,582.0 L2427.9,530.4 L2429.9,533.1Z" fill="#c8ad23" stroke="#c8ad23"/><path d="M2424.3,582.0 L2422.1,579.2 L2425.7,527.7 L2427.9,530.4Z" fill="#c9ad23" stroke="#c9ad23"/><path d="M2422.1,579.2 L2419.8,576.4 L2423.4,525.1 L2425.7,527.7Z" fill="#caae23" stroke="#caae23"/><path d="M2419.8,576.4 L2417.5,573.7 L2421.0,522.4 L2423.4,525.1Z" fill="#cbaf24" stroke="#cbaf24"/><path d="M2417.5,573.7 L2415.0,570.9 L2418.5,519.8 L2421.0,522.4Z" fill="#cbb024" stroke="#cbb024"/><path d="M2415.0,570.9 L2412.4,568.2 L2415.9,517.2 L2418.5,519.8Z" fill="#ccb024" stroke="#ccb024"/><path d="M2412.4,568.2 L2409.7,565.5 L2413.2,514.6 L2415.9,517.2Z" fill="#cdb124" stroke="#cdb124"/><path d="M2409.7,565.5 L2406.9,562.9 L2410.4,512.0 L2413.2,514.6Z" fill="#ceb224" stroke="#ceb224"/><path d="M2406.9,562.9 L2404.0,560.2 L2407.5,509.4 L2410.4,512.0Z" fill="#ceb224" stroke="#ceb224"/><path d="M2404.0,560.2 L2401.1,557.6 L2404.4,506.9 L2407.5,509.4Z" fill="#cfb324" stroke="#cfb324"/><path d="M2401.1,557.6 L2398.0,555.0 L2401.3,504.4 L2404.4,506.9Z" fill="#d0b324" stroke="#d0b324"/><path d="M2398.0,555.0 L2394.8,552.4 L2398.1,501.9 L2401.3,504.4Z" fill="#d0b424" stroke="#d0b424"/><path d="M2394.8,552.4 L2391.5,549.8 L2394.8,499.4 L2398.1,501.9Z" fill="#d1b425" stroke="#d1b425"/><path d="M2391.5,549.8 L2388.1,547.3 L2391.4,497.0 L2394.8,499.4Z" fill="#d1b525" stroke="#d1b525"/><path d="M2388.1,547.3 L2384.6,544.8 L2387.8,494.6 L2391.4,497.0Z" fill="#d2b525" stroke="#d2b525"/><path d="M2384.6,544.8 L2381.0,542.3 L2384.2,492.2 L2387.8,494.6Z" fill="#d2b525" stroke="#d2b525"/><path d="M2381.0,542.3 L2377.4,539.8 L2380.5,489.8 L2384.2,492.2Z" fill="#d2b625" stroke="#d2b625"/><path d="M2377.4,539.8 L2373.6,537.4 L2376.7,487.5 L2380.5,489.8Z" fill="#d3b625" stroke="#d3b625"/><path d="M2373.6,537.4 L2369.8,535.0 L2372.9,485.2 L2376.7,487.5Z" fill="#d3b625" stroke="#d3b625"/><path d="M2369.8,535.0 L2365.8,532.6 L2368.9,482.9 L2372.9,485.2Z" fill="#d3b625" stroke="#d3b625"/><path d="M2365.8,532.6 L2361.8,530.2 L2364.8,480.6 L2368.9,482.9Z" fill="#d3b625" stroke="#d3b625"/><path d="M2361.8,530.2 L2357.7,527.9 L2360.7,478.4 L2364.8,480.6Z" fill="#d4b725" stroke="#d4b725"/><path d="M2357.7,527.9 L2353.5,525.6 L2356.5,476.1 L2360.7,478.4Z" fill="#d4b725" stroke="#d4b725"/><path d="M2353.5,525.6 L2349.3,523.3 L2352.2,473.9 L2356.5,476.1Z" fill="#d4b725" stroke="#d4b725"/><path d="M2349.3,523.3 L2344.9,521.0 L2347.8,471.8 L2352.2,473.9Z" fill="#d4b725" stroke="#d4b725"/><path d="M2344.9,521.0 L2340.5,518.8 L2343.3,469.6 L2347.8,471.8Z" fill="#d4b725" stroke="#d4b725"/><path d="M2340.5,518.8 L2336.0,516.6 L2338.8,467.5 L2343.3,469.6Z" fill="#d4b725" stroke="#d4b725"/><path d="M2336.0,516.6 L2331.4,514.5 L2334.2,465.4 L2338.8,467.5Z" fill="#d4b725" stroke="#d4b725"/><path d="M2331.4,514.5 L2326.7,512.3 L2329.5,463.4 L2334.2,465.4Z" fill="#d3b725" stroke="#d3b725"/><path d="M2326.7,512.3 L2322.0,510.2 L2324.7,461.4 L2329.5,463.4Z" fill="#d3b625" stroke="#d3b625"/><path d="M2322.0,510.2 L2317.2,508.1 L2319.8,459.4 L2324.7,461.4Z" fill="#d3b625" stroke="#d3b625"/><path d="M2317.2,508.1 L2312.3,506.1 L2314.9,457.4 L2319.8,459.4Z" fill="#d3b625" stroke="#d3b625"/><path d="M2312.3,506.1 L2307.3,504.1 L2309.9,455.4 L2314.9,457.4Z" fill="#d3b625" stroke="#d3b625"/><path d="M2307.3,504.1 L2302.3,502.1 L2304.9,453.5 L2309.9,455.4Z" fill="#d2b625" stroke="#d2b625"/><path d="M2302.3,502.1 L2297.2,500.1 L2299.8,451.6 L2304.9,453.5Z" fill="#d2b525" stroke="#d2b525"/><path d="M2297.2,500.1 L2292.1,498.2 L2294.6,449.8 L2299.8,451.6Z" fill="#d1b525" stroke="#d1b525"/><path d="M2292.1,498.2 L2286.9,496.3 L2289.3,447.9 L2294.6,449.8Z" fill="#d1b425" stroke="#d1b425"/><path d="M2286.9,496.3 L2281.6,494.4 L2284.0,446.1 L2289.3,447.9Z" fill="#d1b425" stroke="#d1b425"/><path d="M2281.6,494.4 L2276.3,492.5 L2278.6,444.4 L2284.0,446.1Z" fill="#d0b424" stroke="#d0b424"/><path d="M2276.3,492.5 L2270.8,490.7 L2273.2,442.6 L2278.6,444.4Z" fill="#cfb324" stroke="#cfb324"/><path d="M2270.8,490.7 L2265.4,489.0 L2267.7,440.9 L2273.2,442.6Z" fill="#cfb324" stroke="#cfb324"/><path d="M2265.4,489.0 L2259.9,487.2 L2262.1,439.2 L2267.7,440.9Z" fill="#ceb224" stroke="#ceb224"/><path d="M2259.9,487.2 L2254.3,485.5 L2256.5,437.6 L2262.1,439.2Z" fill="#ceb124" stroke="#ceb124"/><path d="M2254.3,485.5 L2248.6,483.8 L2250.8,436.0 L2256.5,437.6Z" fill="#cdb124" stroke="#cdb124"/><path d="M2248.6,483.8 L2243.0,482.1 L2245.1,434.4 L2250.8,436.0Z" fill="#ccb024" stroke="#ccb024"/><path d="M2243.0,482.1 L2237.2,480.5 L2239.3,432.8 L2245.1,434.4Z" fill="#cbb024" stroke="#cbb024"/><path d="M2237.2,480.5 L2231.4,478.9 L2233.5,431.3 L2239.3,432.8Z" fill="#caaf23" stroke="#caaf23"/><path d="M2231.4,478.9 L2225.6,477.4 L2227.6,429.8 L2233.5,431.3Z" fill="#caae23" stroke="#caae23"/><path d="M2225.6,477.4 L2219.7,475.8 L2221.6,428.3 L2227.6,429.8Z" fill="#c9ad23" stroke="#c9ad23"/><path d="M2219.7,475.8 L2213.7,474.3 L2215.6,426.9 L2221.6,428.3Z" fill="#c8ac23" stroke="#c8ac23"/><path d="M2213.7,474.3 L2207.7,472.9 L2209.6,425.5 L2215.6,426.9Z" fill="#c7ac23" stroke="#c7ac23"/><path d="M2207.7,472.9 L2201.7,471.5 L2203.5,424.1 L2209.6,425.5Z" fill="#c6ab23" stroke="#c6ab23"/><path d="M2201.7,471.5 L2195.6,470.1 L2197.4,422.8 L2203.5,424.1Z" fill="#c5aa22" stroke="#c5aa22"/><path d="M2195.6,470.1 L2189.5,468.7 L2191.2,421.4 L2197.4,422.8Z" fill="#c4a922" stroke="#c4a922"/><path d="M2189.5,468.7 L2183.3,467.4 L2185.0,420.2 L2191.2,421.4Z" fill="#c2a822" stroke="#c2a822"/><path d="M2183.3,467.4 L2177.1,466.1 L2178.7,418.9 L2185.0,420.2Z" fill="#c1a722" stroke="#c1a722"/><path d="M2177.1,466.1 L2170.8,464.8 L2172.4,417.7 L2178.7,418.9Z" fill="#c0a622" stroke="#c0a622"/><path d="M2170.8,464.8 L2164.5,463.5 L2166.1,416.5 L2172.4,417.7Z" fill="#bfa521" stroke="#bfa521"/><path d="M2164.5,463.5 L2158.2,462.3 L2159.7,415.3 L2166.1,416.5Z" fill="#bea421" stroke="#bea421"/><path d="M2158.2,462.3 L2151.8,461.2 L2153.3,414.2 L2159.7,415.3Z" fill="#bca321" stroke="#bca321"/><path d="M2151.8,461.2 L2145.4,460.0 L2146.9,413.1 L2153.3,414.2Z" fill="#bba121" stroke="#bba121"/><path d="M2145.4,460.0 L2139.0,458.9 L2140.4,412.1 L2146.9,413.1Z" fill="#baa020" stroke="#baa020"/><path d="M2139.0,458.9 L2132.5,457.9 L2133.9,411.0 L2140.4,412.1Z" fill="#b89f20" stroke="#b89f20"/><path d="M2132.5,457.9 L2126.0,456.8 L2127.3,410.1 L2133.9,411.0Z" fill="#b79e20" stroke="#b79e20"/><path d="M2126.0,456.8 L2119.5,455.8 L2120.7,409.1 L2127.3,410.1Z" fill="#b59d20" stroke="#b59d20"/><path d="M2119.5,455.8 L2112.9,454.9 L2114.1,408.2 L2120.7,409.1Z" fill="#b49b1f" stroke="#b49b1f"/><path d="M2112.9,454.9 L2106.3,453.9 L2107.5,407.3 L2114.1,408.2Z" fill="#b29a1f" stroke="#b29a1f"/><path d="M2106.3,453.9 L2099.7,453.0 L2100.8,406.4 L2107.5,407.3Z" fill="#b1991f" stroke="#b1991f"/><path d="M2099.7,453.0 L2093.0,452.2 L2094.1,405.6 L2100.8,406.4Z" fill="#af971f" stroke="#af971f"/><path d="M2093.0,452.2 L2086.3,451.3 L2087.4,404.8 L2094.1,405.6Z" fill="#ad961e" stroke="#ad961e"/><path d="M2086.3,451.3 L2079.6,450.5 L2080.7,404.0 L2087.4,404.8Z" fill="#ac941e" stroke="#ac941e"/><path d="M2079.6,450.5 L2072.9,449.8 L2073.9,403.3 L2080.7,404.0Z" fill="#aa931e" stroke="#aa931e"/><path d="M2072.9,449.8 L2066.2,449.0 L2067.1,402.5 L2073.9,403.3Z" fill="#a8911d" stroke="#a8911d"/><path d="M2066.2,449.0 L2059.4,448.3 L2060.3,401.9 L2067.1,402.5Z" fill="#a7901d" stroke="#a7901d"/><path d="M2059.4,448.3 L2052.6,447.7 L2053.4,401.2 L2060.3,401.9Z" fill="#a58e1d" stroke="#a58e1d"/><path d="M2052.6,447.7 L2045.8,447.0 L2046.6,400.6 L2053.4,401.2Z" fill="#a38d1c" stroke="#a38d1c"/><path d="M2045.8,447.0 L2039.0,446.4 L2039.7,400.1 L2046.6,400.6Z" fill="#a18b1c" stroke="#a18b1c"/><path d="M2039.0,446.4 L2032.1,445.9 L2032.8,399.5 L2039.7,400.1Z" fill="#9f8a1c" stroke="#9f8a1c"/><path d="M2032.1,445.9 L2025.2,445.3 L2025.9,399.0 L2032.8,399.5Z" fill="#9d881c" stroke="#9d881c"/><path d="M2025.2,445.3 L2018.4,444.8 L2019.0,398.5 L2025.9,399.0Z" fill="#9c861b" stroke="#9c861b"/><path d="M2018.4,444.8 L2011.5,444.4 L2012.0,398.1 L2019.0,398.5Z" fill="#9a851b" stroke="#9a851b"/><path d="M2011.5,444.4 L2004.6,444.0 L2005.1,397.7 L2012.0,398.1Z" fill="#98831a" stroke="#98831a"/><path d="M2004.6,444.0 L1997.6,443.6 L1998.1,397.3 L2005.1,397.7Z" fill="#96811a" stroke="#96811a"/><path d="M1997.6,443.6 L1990.7,443.2 L1991.1,397.0 L1998.1,397.3Z" fill="#947f1a" stroke="#947f1a"/><path d="M1990.7,443.2 L1983.8,442.9 L1984.2,396.6 L1991.1,397.0Z" fill="#927e19" stroke="#927e19"/><path d="M1983.8,442.9 L1976.8,442.6 L1977.2,396.4 L1984.2,396.6Z" fill="#907c19" stroke="#907c19"/><path d="M1976.8,442.6 L1969.9,442.3 L1970.2,396.1 L1977.2,396.4Z" fill="#8d7a19" stroke="#8d7a19"/><path d="M1969.9,442.3 L1962.9,442.1 L1963.2,395.9 L1970.2,396.1Z" fill="#8b7818" stroke="#8b7818"/><path d="M1962.9,442.1 L1955.9,441.9 L1956.1,395.7 L1963.2,395.9Z" fill="#897618" stroke="#897618"/><path d="M1955.9,441.9 L1948.9,441.8 L1949.1,395.6 L1956.1,395.7Z" fill="#877518" stroke="#877518"/><path d="M1948.9,441.8 L1942.0,441.6 L1942.1,395.5 L1949.1,395.6Z" fill="#857317" stroke="#857317"/><path d="M1942.0,441.6 L1935.0,441.6 L1935.1,395.4 L1942.1,395.5Z" fill="#837117" stroke="#837117"/><path d="M1935.0,441.6 L1928.0,441.5 L1928.0,395.3 L1935.1,395.4Z" fill="#806f16" stroke="#806f16"/><path d="M1928.0,441.5 L1921.0,441.5 L1921.0,395.3 L1928.0,395.3Z" fill="#7e6d16" stroke="#7e6d16"/><path d="M1921.0,441.5 L1914.0,441.5 L1914.0,395.3 L1921.0,395.3Z" fill="#7c6b16" stroke="#7c6b16"/><path d="M1914.0,441.5 L1907.0,441.6 L1906.9,395.4 L1914.0,395.3Z" fill="#7a6915" stroke="#7a6915"/><path d="M1907.0,441.6 L1900.0,441.6 L1899.9,395.5 L1906.9,395.4Z" fill="#776715" stroke="#776715"/><path d="M1900.0,441.6 L1893.1,441.8 L1892.9,395.6 L1899.9,395.5Z" fill="#756514" stroke="#756514"/><path d="M1893.1,441.8 L1886.1,441.9 L1885.9,395.7 L1892.9,395.6Z" fill="#736314" stroke="#736314"/><path d="M1886.1,441.9 L1879.1,442.1 L1878.8,395.9 L1885.9,395.7Z" fill="#706114" stroke="#706114"/><path d="M1879.1,442.1 L1872.1,442.3 L1871.8,396.1 L1878.8,395.9Z" fill="#6e5f13" stroke="#6e5f13"/><path d="M1872.1,442.3 L1865.2,442.6 L1864.8,396.4 L1871.8,396.1Z" fill="#6c5d13" stroke="#6c5d13"/><path d="M1865.2,442.6 L1858.2,442.9 L1857.8,396.6 L1864.8,396.4Z" fill="#695b12" stroke="#695b12"/><path d="M1858.2,442.9 L1851.3,443.2 L1850.9,397.0 L1857.8,396.6Z" fill="#675912" stroke="#675912"/><path d="M1851.3,443.2 L1844.4,443.6 L1843.9,397.3 L1850.9,397.0Z" fill="#645711" stroke="#645711"/><path d="M1844.4,443.6 L1837.4,444.0 L1836.9,397.7 L1843.9,397.3Z" fill="#625511" stroke="#625511"/><path d="M1837.4,444.0 L1830.5,444.4 L1830.0,398.1 L1836.9,397.7Z" fill="#605211" stroke="#605211"/><path d="M1830.5,444.4 L1823.6,444.8 L1823.0,398.5 L1830.0,398.1Z" fill="#5d5010" stroke="#5d5010"/><path d="M1823.6,444.8 L1816.8,445.3 L1816.1,399.0 L1823.0,398.5Z" fill="#5b4e10" stroke="#5b4e10"/><path d="M1816.8,445.3 L1809.9,445.9 L1809.2,399.5 L1816.1,399.0Z" fill="#584c0f" stroke="#584c0f"/><path d="M1809.9,445.9 L1803.0,446.4 L1802.3,400.1 L1809.2,399.5Z" fill="#564a0f" stroke="#564a0f"/><path d="M1803.0,446.4 L1796.2,447.0 L1795.4,400.6 L1802.3,400.1Z" fill="#53480e" stroke="#53480e"/><path d="M1796.2,447.0 L1789.4,447.7 L1788.6,401.2 L1795.4,400.6Z" fill="#51460e" stroke="#51460e"/><path d="M1789.4,447.7 L1782.6,448.3 L1781.7,401.9 L1788.6,401.2Z" fill="#4e430d" stroke="#4e430d"/><path d="M1782.6,448.3 L1775.8,449.0 L1774.9,402.5 L1781.7,401.9Z" fill="#4c410d" stroke="#4c410d"/><path d="M1775.8,449.0 L1769.1,449.8 L1768.1,403.3 L1774.9,402.5Z" fill="#493f0d" stroke="#493f0d"/><path d="M1769.1,449.8 L1762.4,450.5 L1761.3,404.0 L1768.1,403.3Z" fill="#473d0c" stroke="#473d0c"/><path d="M1762.4,450.5 L1755.7,451.3 L1754.6,404.8 L1761.3,404.0Z" fill="#443b0c" stroke="#443b0c"/><path d="M1755.7,451.3 L1749.0,452.2 L1747.9,405.6 L1754.6,404.8Z" fill="#42390b" stroke="#42390b"/><path d="M1749.0,452.2 L1742.3,453.0 L1741.2,406.4 L1747.9,405.6Z" fill="#3f360b" stroke="#3f360b"/><path d="M1742.3,453.0 L1735.7,453.9 L1734.5,407.3 L1741.2,406.4Z" fill="#3c340a" stroke="#3c340a"/><path d="M1735.7,453.9 L1729.1,454.9 L1727.9,408.2 L1734.5,407.3Z" fill="#3a320a" stroke="#3a320a"/><path d="M1729.1,454.9 L1722.5,455.8 L1721.3,409.1 L1727.9,408.2Z" fill="#373009" stroke="#373009"/><path d="M1722.5,455.8 L1716.0,456.8 L1714.7,410.1 L1721.3,409.1Z" fill="#352e09" stroke="#352e09"/><path d="M1716.0,456.8 L1709.5,457.9 L1708.1,411.0 L1714.7,410.1Z" fill="#322b09" stroke="#322b09"/><path d="M1709.5,457.9 L1703.0,458.9 L1701.6,412.1 L1708.1,411.0Z" fill="#332c09" stroke="#332c09"/><path d="M1703.0,458.9 L1696.6,460.0 L1695.1,413.1 L1701.6,412.1Z" fill="#352e09" stroke="#352e09"/><path d="M1696.6,460.0 L1690.2,461.2 L1688.7,414.2 L1695.1,413.1Z" fill="#383009" stroke="#383009"/><path d="M1690.2,461.2 L1683.8,462.3 L1682.3,415.3 L1688.7,414.2Z" fill="#3a320a" stroke="#3a320a"/><path d="M1683.8,462.3 L1677.5,463.5 L1675.9,416.5 L1682.3,415.3Z" fill="#3d350a" stroke="#3d350a"/><path d="M1677.5,463.5 L1671.2,464.8 L1669.6,417.7 L1675.9,416.5Z" fill="#40370b" stroke="#40370b"/><path d="M1671.2,464.8 L1664.9,466.1 L1663.3,418.9 L1669.6,417.7Z" fill="#42390b" stroke="#42390b"/><path d="M1664.9,466.1 L1658.7,467.4 L1657.0,420.2 L1663.3,418.9Z" fill="#453b0c" stroke="#453b0c"/><path d="M1658.7,467.4 L1652.5,468.7 L1650.8,421.4 L1657.0,420.2Z" fill="#473d0c" stroke="#473d0c"/><path d="M1652.5,468.7 L1646.4,470.1 L1644.6,422.8 L1650.8,421.4Z" fill="#4a400d" stroke="#4a400d"/><path d="M1646.4,470.1 L1640.3,471.5 L1638.5,424.1 L1644.6,422.8Z" fill="#4c420d" stroke="#4c420d"/><path d="M1640.3,471.5 L1634.3,472.9 L1632.4,425.5 L1638.5,424.1Z" fill="#4f440e" stroke="#4f440e"/><path d="M1634.3,472.9 L1628.3,474.3 L1626.4,426.9 L1632.4,425.5Z" fill="#51460e" stroke="#51460e"/><path d="M1628.3,474.3 L1622.3,475.8 L1620.4,428.3 L1626.4,426.9Z" fill="#54480e" stroke="#54480e"/><path d="M1622.3,475.8 L1616.4,477.4 L1614.4,429.8 L1620.4,428.3Z" fill="#564a0f" stroke="#564a0f"/><path d="M1616.4,477.4 L1610.6,478.9 L1608.5,431.3 L1614.4,429.8Z" fill="#594d0f" stroke="#594d0f"/><path d="M1610.6,478.9 L1604.8,480.5 L1602.7,432.8 L1608.5,431.3Z" fill="#5b4f10" stroke="#5b4f10"/><path d="M1604.8,480.5 L1599.0,482.1 L1596.9,434.4 L1602.7,432.8Z" fill="#5e5110" stroke="#5e5110"/><path d="M1599.0,482.1 L1593.4,483.8 L1591.2,436.0 L1596.9,434.4Z" fill="#605311" stroke="#605311"/><path d="M1593.4,483.8 L1587.7,485.5 L1585.5,437.6 L1591.2,436.0Z" fill="#635511" stroke="#635511"/><path d="M1587.7,485.5 L1582.1,487.2 L1579.9,439.2 L1585.5,437.6Z" fill="#655711" stroke="#655711"/><path d="M1582.1,487.2 L1576.6,489.0 L1574.3,440.9 L1579.9,439.2Z" fill="#675912" stroke="#675912"/><path d="M1576.6,489.0 L1571.2,490.7 L1568.8,442.6 L1574.3,440.9Z" fill="#6a5b12" stroke="#6a5b12"/><path d="M1571.2,490.7 L1565.7,492.5 L1563.4,444.4 L1568.8,442.6Z" fill="#6c5d13" stroke="#6c5d13"/><path d="M1565.7,492.5 L1560.4,494.4 L1558.0,446.1 L1563.4,444.4Z" fill="#6e5f13" stroke="#6e5f13"/><path d="M1560.4,494.4 L1555.1,496.3 L1552.7,447.9 L1558.0,446.1Z" fill="#716114" stroke="#716114"/><path d="M1555.1,496.3 L1549.9,498.2 L1547.4,449.8 L1552.7,447.9Z" fill="#736314" stroke="#736314"/><path d="M1549.9,498.2 L1544.8,500.1 L1542.2,451.6 L1547.4,449.8Z" fill="#766514" stroke="#766514"/><path d="M1544.8,500.1 L1539.7,502.1 L1537.1,453.5 L1542.2,451.6Z" fill="#786715" stroke="#786715"/><path d="M1539.7,502.1 L1534.7,504.1 L1532.1,455.4 L1537.1,453.5Z" fill="#7a6915" stroke="#7a6915"/><path d="M1534.7,504.1 L1529.7,506.1 L1527.1,457.4 L1532.1,455.4Z" fill="#7c6b16" stroke="#7c6b16"/><path d="M1529.7,506.1 L1524.8,508.1 L1522.2,459.4 L1527.1,457.4Z" fill="#7f6d16" stroke="#7f6d16"/><path d="M1524.8,508.1 L1520.0,510.2 L1517.3,461.4 L1522.2,459.4Z" fill="#816f16" stroke="#816f16"/><path d="M1520.0,510.2 L1515.3,512.3 L1512.5,463.4 L1517.3,461.4Z" fill="#837117" stroke="#837117"/><path d="M1515.3,512.3 L1510.6,514.5 L1507.8,465.4 L1512.5,463.4Z" fill="#857317" stroke="#857317"/><path d="M1510.6,514.5 L1506.0,516.6 L1503.2,467.5 L1507.8,465.4Z" fill="#877518" stroke="#877518"/><path d="M1506.0,516.6 L1501.5,518.8 L1498.7,469.6 L1503.2,467.5Z" fill="#8a7718" stroke="#8a7718"/><path d="M1501.5,518.8 L1497.1,521.0 L1494.2,471.8 L1498.7,469.6Z" fill="#8c7918" stroke="#8c7918"/><path d="M1497.1,521.0 L1492.7,523.3 L1489.8,473.9 L1494.2,471.8Z" fill="#8e7a19" stroke="#8e7a19"/></g></g>
<g stroke="#000" stroke-width="2" fill="none" shape-rendering="crispEdges"><path d="M1921.0,704.5 L1494.9,619.3"/>
<path d="M1921.0,704.5 L1650.6,912.7"/>
<path d="M1921.0,704.5 L2412.5,802.7" stroke-dasharray="3 3.4" stroke-width="1.8"/>
<path d="M1921.0,704.5 L2125.0,547.4" stroke-dasharray="3 3.4" stroke-width="1.8"/>
<path d="M1921.0,704.5 L1921.0,-3838.6"/>
<path d="M1921.0,704.5 L1921.0,2687.3" stroke-dasharray="3 3.4" stroke-width="1.8"/>
<path d="M1921.0,704.5 L1943.4,687.2"/>
<path d="M1921.0,704.5 L1965.9,713.5"/>
<path d="M1921.0,704.5 L1965.9,713.5"/>
<path d="M1840.5,688.4 L1863.7,671.6"/>
<path d="M1878.4,737.3 L1924.1,746.7"/>
<path d="M1921.0,619.3 L1966.4,627.8"/>
<path d="M2003.6,721.0 L2025.1,703.3" stroke-dasharray="3 3.4" stroke-width="1.8"/>
<path d="M1961.5,673.3 L2005.6,681.8" stroke-dasharray="3 3.4" stroke-width="1.8"/>
<path d="M1921.0,787.6 L1965.3,797.1" stroke-dasharray="3 3.4" stroke-width="1.8"/>
<path d="M1762.0,672.7 L1786.0,656.3"/>
<path d="M1833.6,771.8 L1880.2,781.8"/>
<path d="M1921.0,532.1 L1967.0,540.0"/>
<path d="M2088.3,737.9 L2108.9,719.8" stroke-dasharray="3 3.4" stroke-width="1.8"/>
<path d="M2000.1,643.6 L2043.4,651.7" stroke-dasharray="3 3.4" stroke-width="1.8"/>
<path d="M1921.0,868.9 L1964.8,878.7" stroke-dasharray="3 3.4" stroke-width="1.8"/>
<path d="M1685.5,657.4 L1710.1,641.4"/>
<path d="M1786.3,808.2 L1833.8,818.7"/>
<path d="M1921.0,442.7 L1967.6,450.1"/>
<path d="M2175.2,755.3 L2194.9,736.7" stroke-dasharray="3 3.4" stroke-width="1.8"/>
<path d="M2036.9,615.3 L2079.4,623.0" stroke-dasharray="3 3.4" stroke-width="1.8"/>
<path d="M1921.0,948.2 L1964.3,958.5" stroke-dasharray="3 3.4" stroke-width="1.8"/>
<path d="M1610.8,642.5 L1636.1,626.9"/>
<path d="M1736.4,846.6 L1784.9,857.7"/>
<path d="M1921.0,351.0 L1968.2,357.9"/>
<path d="M2264.5,773.2 L2283.2,754.0" stroke-dasharray="3 3.4" stroke-width="1.8"/>
<path d="M2072.0,588.2 L2113.8,595.6" stroke-dasharray="3 3.4" stroke-width="1.8"/>
<path d="M1921.0,1025.7 L1963.8,1036.4" stroke-dasharray="3 3.4" stroke-width="1.8"/>
<path d="M1537.9,627.9 L1563.8,612.6"/>
<path d="M1683.7,887.2 L1733.2,898.9"/>
<path d="M1921.0,257.0 L1968.8,263.2"/>
<path d="M2356.2,791.5 L2373.9,771.8" stroke-dasharray="3 3.4" stroke-width="1.8"/>
<path d="M2105.6,562.4 L2146.6,569.4" stroke-dasharray="3 3.4" stroke-width="1.8"/>
<path d="M1921.0,1101.5 L1963.3,1112.6" stroke-dasharray="3 3.4" stroke-width="1.8"/>
<path d="M1921.0,160.6 L1969.4,166.2"/>
<path d="M1921.0,1175.6 L1962.9,1187.0" stroke-dasharray="3 3.4" stroke-width="1.8"/>
<path d="M1921.0,61.7 L1970.0,66.6"/>
<path d="M1921.0,1248.0 L1962.4,1259.8" stroke-dasharray="3 3.4" stroke-width="1.8"/>
<path d="M1921.0,-39.8 L1970.7,-35.7"/>
<path d="M1921.0,1318.9 L1961.9,1331.0" stroke-dasharray="3 3.4" stroke-width="1.8"/>
<path d="M1921.0,-144.1 L1971.3,-140.7"/>
<path d="M1921.0,1388.2 L1961.5,1400.6" stroke-dasharray="3 3.4" stroke-width="1.8"/>
<path d="M1921.0,-251.2 L2023.9,-246.0"/>
<path d="M1921.0,1456.0 L2001.6,1481.6" stroke-dasharray="3 3.4" stroke-width="1.8"/>
<path d="M1921.0,-361.2 L1972.7,-359.5"/>
<path d="M1921.0,1522.5 L1960.6,1535.4" stroke-dasharray="3 3.4" stroke-width="1.8"/>
<path d="M1921.0,-474.4 L1973.5,-473.5"/>
<path d="M1921.0,1587.5 L1960.2,1600.7" stroke-dasharray="3 3.4" stroke-width="1.8"/>
<path d="M1921.0,-590.7 L1974.2,-590.8"/>
<path d="M1921.0,1651.2 L1959.8,1664.7" stroke-dasharray="3 3.4" stroke-width="1.8"/>
<path d="M1921.0,-710.3 L1975.0,-711.5"/>
<path d="M1921.0,1713.6 L1959.4,1727.3" stroke-dasharray="3 3.4" stroke-width="1.8"/>
<path d="M1921.0,-833.5 L1975.8,-835.7"/>
<path d="M1921.0,1774.7 L1959.0,1788.6" stroke-dasharray="3 3.4" stroke-width="1.8"/>
<path d="M1921.0,-960.3 L1976.6,-963.6"/>
<path d="M1921.0,1834.6 L1958.6,1848.7" stroke-dasharray="3 3.4" stroke-width="1.8"/>
<path d="M1921.0,-1090.9 L1977.4,-1095.4"/>
<path d="M1921.0,1893.3 L1958.3,1907.6" stroke-dasharray="3 3.4" stroke-width="1.8"/>
<path d="M1921.0,-1225.5 L1978.3,-1231.3"/>
<path d="M1921.0,1950.8 L1957.9,1965.3" stroke-dasharray="3 3.4" stroke-width="1.8"/>
<path d="M1921.0,-1364.2 L1979.2,-1371.4"/>
<path d="M1921.0,2007.2 L1957.5,2021.9" stroke-dasharray="3 3.4" stroke-width="1.8"/>
<path d="M1921.0,-1507.3 L2040.3,-1524.7"/>
<path d="M1921.0,2062.5 L1993.8,2092.5" stroke-dasharray="3 3.4" stroke-width="1.8"/>
<path d="M1921.0,-1655.0 L1981.1,-1665.1"/>
<path d="M1921.0,2116.8 L1956.8,2131.9" stroke-dasharray="3 3.4" stroke-width="1.8"/>
<path d="M1921.0,-1807.4 L1982.1,-1819.2"/>
<path d="M1921.0,2170.1 L1956.5,2185.3" stroke-dasharray="3 3.4" stroke-width="1.8"/>
<path d="M1921.0,-1964.9 L1983.1,-1978.4"/>
<path d="M1921.0,2222.3 L1956.1,2237.7" stroke-dasharray="3 3.4" stroke-width="1.8"/>
<path d="M1921.0,-2127.7 L1984.1,-2143.0"/>
<path d="M1921.0,2273.6 L1955.8,2289.1" stroke-dasharray="3 3.4" stroke-width="1.8"/>
<path d="M1921.0,-2296.0 L1985.2,-2313.3"/>
<path d="M1921.0,2323.9 L1955.5,2339.5" stroke-dasharray="3 3.4" stroke-width="1.8"/>
<path d="M1921.0,-2470.2 L1986.3,-2489.5"/>
<path d="M1921.0,2373.3 L1955.2,2389.1" stroke-dasharray="3 3.4" stroke-width="1.8"/>
<path d="M1921.0,-2650.5 L1987.5,-2672.1"/>
<path d="M1921.0,2421.9 L1954.9,2437.7" stroke-dasharray="3 3.4" stroke-width="1.8"/>
<path d="M1921.0,-2837.3 L1988.7,-2861.3"/>
<path d="M1921.0,2469.5 L1954.6,2485.5" stroke-dasharray="3 3.4" stroke-width="1.8"/>
<path d="M1921.0,-3031.0 L1990.0,-3057.4"/>
<path d="M1921.0,2516.3 L1954.3,2532.4" stroke-dasharray="3 3.4" stroke-width="1.8"/>
<path d="M1921.0,-3231.9 L2063.1,-3290.8"/>
<path d="M1921.0,2562.3 L1987.3,2594.8" stroke-dasharray="3 3.4" stroke-width="1.8"/>
<path d="M1921.0,-3440.4 L1992.6,-3472.4"/>
<path d="M1921.0,2607.5 L1953.7,2623.7" stroke-dasharray="3 3.4" stroke-width="1.8"/>
<path d="M1921.0,-3656.9 L1994.0,-3692.1"/>
<path d="M1921.0,2651.9 L1953.4,2668.2" stroke-dasharray="3 3.4" stroke-width="1.8"/></g>
<g shape-rendering="crispEdges"><path d="M1277.1,580.1 L1273.6,586.2 L1270.5,592.3 L1267.9,598.5 L1265.6,604.8 L1263.9,611.1 L1262.6,617.5 L1261.7,623.9 L1261.4,630.3 L1261.5,636.8 L1262.1,643.3 L1263.2,649.9 L1264.7,656.4 L1266.8,663.0 L1269.5,669.6 L1272.6,676.2 L1276.3,682.8 L1280.5,689.4 L1285.2,695.9 L1290.5,702.5 L1296.3,709.0 L1302.7,715.5 L1309.6,722.0 L1317.1,728.4 L1325.1,734.8 L1333.7,741.1 L1342.8,747.4 L1352.5,753.5 L1362.8,759.6 L1373.6,765.7 L1384.9,771.6 L1396.7,777.4 L1409.1,783.1 L1422.1,788.7 L1435.5,794.2 L1449.5,799.5 L1463.9,804.7 L1478.9,809.7 L1494.3,814.6 L1510.2,819.4 L1526.6,824.0 L1543.3,828.4 L1560.6,832.6 L1578.2,836.6 L1596.2,840.4 L1614.6,844.1 L1633.4,847.5 L1652.4,850.7 L1671.8,853.7 L1691.5,856.5 L1711.5,859.1 L1731.7,861.4 L1752.2,863.5 L1772.8,865.3 L1793.7,867.0 L1814.6,868.3 L1835.8,869.5 L1857.0,870.3 L1878.3,871.0 L1899.6,871.3 L1921.0,871.5 L1942.4,871.3 L1963.7,871.0 L1985.0,870.3 L2006.2,869.5 L2027.4,868.3 L2048.3,867.0 L2069.2,865.3 L2089.8,863.5 L2110.3,861.4 L2130.5,859.1 L2150.5,856.5 L2170.2,853.7 L2189.6,850.7 L2208.6,847.5 L2227.4,844.1 L2245.8,840.4 L2263.8,836.6 L2281.4,832.6 L2298.7,828.4 L2315.4,824.0 L2331.8,819.4 L2347.7,814.6 L2363.1,809.7 L2378.1,804.7 L2392.5,799.5 L2406.5,794.2 L2419.9,788.7 L2432.9,783.1 L2445.3,777.4 L2457.1,771.6 L2468.4,765.7 L2479.2,759.6 L2489.5,753.5 L2499.2,747.4 L2508.3,741.1 L2516.9,734.8 L2524.9,728.4 L2532.4,722.0 L2539.3,715.5 L2545.7,709.0 L2551.5,702.5 L2556.8,695.9 L2561.5,689.4 L2565.7,682.8 L2569.4,676.2 L2572.5,669.6 L2575.2,663.0 L2577.3,656.4 L2578.8,649.9 L2579.9,643.3 L2580.5,636.8 L2580.6,630.3 L2580.3,623.9 L2579.4,617.5 L2578.1,611.1 L2576.4,604.8 L2574.1,598.5 L2571.5,592.3 L2568.4,586.2 L2564.9,580.1 L2454.1,580.9 L2456.5,585.9 L2458.6,591.0 L2460.3,596.1 L2461.6,601.3 L2462.5,606.5 L2463.1,611.7 L2463.3,616.9 L2463.1,622.2 L2462.5,627.5 L2461.5,632.8 L2460.0,638.1 L2458.2,643.4 L2456.0,648.7 L2453.3,654.1 L2450.2,659.4 L2446.7,664.7 L2442.8,670.0 L2438.4,675.2 L2433.7,680.5 L2428.4,685.7 L2422.8,690.9 L2416.7,696.0 L2410.2,701.1 L2403.2,706.2 L2395.8,711.2 L2388.0,716.1 L2379.8,721.0 L2371.1,725.8 L2362.0,730.5 L2352.5,735.1 L2342.6,739.7 L2332.3,744.1 L2321.6,748.5 L2310.5,752.8 L2299.0,756.9 L2287.2,760.9 L2274.9,764.9 L2262.3,768.6 L2249.4,772.3 L2236.1,775.8 L2222.5,779.2 L2208.6,782.5 L2194.4,785.6 L2179.9,788.5 L2165.1,791.3 L2150.0,793.9 L2134.7,796.4 L2119.2,798.7 L2103.5,800.8 L2087.5,802.8 L2071.4,804.6 L2055.1,806.2 L2038.7,807.6 L2022.1,808.8 L2005.4,809.9 L1988.7,810.7 L1971.8,811.4 L1954.9,811.9 L1938.0,812.1 L1921.0,812.2 L1904.0,812.1 L1887.1,811.9 L1870.2,811.4 L1853.3,810.7 L1836.6,809.9 L1819.9,808.8 L1803.3,807.6 L1786.9,806.2 L1770.6,804.6 L1754.5,802.8 L1738.5,800.8 L1722.8,798.7 L1707.3,796.4 L1692.0,793.9 L1676.9,791.3 L1662.1,788.5 L1647.6,785.6 L1633.4,782.5 L1619.5,779.2 L1605.9,775.8 L1592.6,772.3 L1579.7,768.6 L1567.1,764.9 L1554.8,760.9 L1543.0,756.9 L1531.5,752.8 L1520.4,748.5 L1509.7,744.1 L1499.4,739.7 L1489.5,735.1 L1480.0,730.5 L1470.9,725.8 L1462.2,721.0 L1454.0,716.1 L1446.2,711.2 L1438.8,706.2 L1431.8,701.1 L1425.3,696.0 L1419.2,690.9 L1413.6,685.7 L1408.3,680.5 L1403.6,675.2 L1399.2,670.0 L1395.3,664.7 L1391.8,659.4 L1388.7,654.1 L1386.0,648.7 L1383.8,643.4 L1382.0,638.1 L1380.5,632.8 L1379.5,627.5 L1378.9,622.2 L1378.7,616.9 L1378.9,611.7 L1379.5,606.5 L1380.4,601.3 L1381.7,596.1 L1383.4,591.0 L1385.5,585.9 L1387.9,580.9Z" fill="#eecd2a"/>
<g stroke-width="0.8" stroke-linejoin="round"><path d="M1270.0,729.5 L1270.5,733.6 L1262.3,644.8 L1261.8,641.0Z" fill="#cfb324" stroke="#cfb324"/><path d="M1270.5,733.6 L1271.2,737.7 L1262.9,648.7 L1262.3,644.8Z" fill="#d0b324" stroke="#d0b324"/><path d="M1271.2,737.7 L1272.0,741.8 L1263.8,652.6 L1262.9,648.7Z" fill="#d0b424" stroke="#d0b424"/><path d="M1272.0,741.8 L1273.0,745.9 L1264.8,656.5 L1263.8,652.6Z" fill="#d1b425" stroke="#d1b425"/><path d="M1273.0,745.9 L1274.2,750.0 L1266.0,660.4 L1264.8,656.5Z" fill="#d1b525" stroke="#d1b525"/><path d="M1274.2,750.0 L1275.6,754.2 L1267.3,664.3 L1266.0,660.4Z" fill="#d2b525" stroke="#d2b525"/><path d="M1275.6,754.2 L1277.2,758.3 L1268.9,668.2 L1267.3,664.3Z" fill="#d2b525" stroke="#d2b525"/><path d="M1277.2,758.3 L1278.9,762.4 L1270.6,672.1 L1268.9,668.2Z" fill="#d2b625" stroke="#d2b625"/><path d="M1278.9,762.4 L1280.8,766.6 L1272.5,676.0 L1270.6,672.1Z" fill="#d3b625" stroke="#d3b625"/><path d="M1280.8,766.6 L1282.9,770.7 L1274.6,679.9 L1272.5,676.0Z" fill="#d3b625" stroke="#d3b625"/><path d="M1282.9,770.7 L1285.2,774.9 L1276.9,683.8 L1274.6,679.9Z" fill="#d3b625" stroke="#d3b625"/><path d="M1285.2,774.9 L1287.7,779.0 L1279.4,687.7 L1276.9,683.8Z" fill="#d3b625" stroke="#d3b625"/><path d="M1287.7,779.0 L1290.3,783.1 L1282.0,691.6 L1279.4,687.7Z" fill="#d4b725" stroke="#d4b725"/><path d="M1290.3,783.1 L1293.2,787.2 L1284.9,695.5 L1282.0,691.6Z" fill="#d4b725" stroke="#d4b725"/><path d="M1293.2,787.2 L1296.2,791.3 L1287.9,699.4 L1284.9,695.5Z" fill="#d4b725" stroke="#d4b725"/><path d="M1296.2,791.3 L1299.4,795.5 L1291.2,703.3 L1287.9,699.4Z" fill="#d4b725" stroke="#d4b725"/><path d="M1299.4,795.5 L1302.8,799.6 L1294.6,707.2 L1291.2,703.3Z" fill="#d4b725" stroke="#d4b725"/><path d="M1302.8,799.6 L1306.4,803.6 L1298.2,711.0 L1294.6,707.2Z" fill="#d4b725" stroke="#d4b725"/><path d="M1306.4,803.6 L1310.2,807.7 L1302.0,714.9 L1298.2,711.0Z" fill="#d4b725" stroke="#d4b725"/><path d="M1310.2,807.7 L1314.2,811.8 L1306.0,718.7 L1302.0,714.9Z" fill="#d3b725" stroke="#d3b725"/><path d="M1314.2,811.8 L1318.3,815.8 L1310.2,722.5 L1306.0,718.7Z" fill="#d3b625" stroke="#d3b625"/><path d="M1318.3,815.8 L1322.7,819.9 L1314.6,726.3 L1310.2,722.5Z" fill="#d3b625" stroke="#d3b625"/><path d="M1322.7,819.9 L1327.2,823.9 L1319.2,730.1 L1314.6,726.3Z" fill="#d3b625" stroke="#d3b625"/><path d="M1327.2,823.9 L1332.0,827.9 L1324.0,733.9 L1319.2,730.1Z" fill="#d3b625" stroke="#d3b625"/><path d="M1332.0,827.9 L1336.9,831.8 L1328.9,737.7 L1324.0,733.9Z" fill="#d2b625" stroke="#d2b625"/><path d="M1336.9,831.8 L1342.0,835.8 L1334.1,741.4 L1328.9,737.7Z" fill="#d2b525" stroke="#d2b525"/><path d="M1342.0,835.8 L1347.3,839.7 L1339.5,745.1 L1334.1,741.4Z" fill="#d1b525" stroke="#d1b525"/><path d="M1347.3,839.7 L1352.8,843.6 L1345.0,748.8 L1339.5,745.1Z" fill="#d1b425" stroke="#d1b425"/><path d="M1352.8,843.6 L1358.5,847.5 L1350.8,752.5 L1345.0,748.8Z" fill="#d1b425" stroke="#d1b425"/><path d="M1358.5,847.5 L1364.4,851.3 L1356.7,756.1 L1350.8,752.5Z" fill="#d0b424" stroke="#d0b424"/><path d="M1364.4,851.3 L1370.5,855.1 L1362.8,759.7 L1356.7,756.1Z" fill="#cfb324" stroke="#cfb324"/><path d="M1370.5,855.1 L1376.7,858.9 L1369.2,763.3 L1362.8,759.7Z" fill="#cfb324" stroke="#cfb324"/><path d="M1376.7,858.9 L1383.2,862.6 L1375.7,766.8 L1369.2,763.3Z" fill="#ceb224" stroke="#ceb224"/><path d="M1383.2,862.6 L1389.8,866.3 L1382.4,770.3 L1375.7,766.8Z" fill="#ceb124" stroke="#ceb124"/><path d="M1389.8,866.3 L1396.6,870.0 L1389.3,773.8 L1382.4,770.3Z" fill="#cdb124" stroke="#cdb124"/><path d="M1396.6,870.0 L1403.6,873.6 L1396.4,777.2 L1389.3,773.8Z" fill="#ccb024" stroke="#ccb024"/><path d="M1403.6,873.6 L1410.8,877.2 L1403.7,780.6 L1396.4,777.2Z" fill="#cbb024" stroke="#cbb024"/><path d="M1410.8,877.2 L1418.2,880.8 L1411.1,784.0 L1403.7,780.6Z" fill="#caaf23" stroke="#caaf23"/><path d="M1418.2,880.8 L1425.8,884.3 L1418.8,787.3 L1411.1,784.0Z" fill="#caae23" stroke="#caae23"/><path d="M1425.8,884.3 L1433.5,887.7 L1426.6,790.6 L1418.8,787.3Z" fill="#c9ad23" stroke="#c9ad23"/><path d="M1433.5,887.7 L1441.4,891.1 L1434.6,793.8 L1426.6,790.6Z" fill="#c8ac23" stroke="#c8ac23"/><path d="M1441.4,891.1 L1449.5,894.5 L1442.8,797.0 L1434.6,793.8Z" fill="#c7ac23" stroke="#c7ac23"/><path d="M1449.5,894.5 L1457.7,897.8 L1451.1,800.1 L1442.8,797.0Z" fill="#c6ab23" stroke="#c6ab23"/><path d="M1457.7,897.8 L1466.2,901.1 L1459.7,803.2 L1451.1,800.1Z" fill="#c5aa22" stroke="#c5aa22"/><path d="M1466.2,901.1 L1474.8,904.3 L1468.4,806.2 L1459.7,803.2Z" fill="#c4a922" stroke="#c4a922"/><path d="M1474.8,904.3 L1483.6,907.4 L1477.3,809.2 L1468.4,806.2Z" fill="#c2a822" stroke="#c2a822"/><path d="M1483.6,907.4 L1492.5,910.5 L1486.3,812.2 L1477.3,809.2Z" fill="#c1a722" stroke="#c1a722"/><path d="M1492.5,910.5 L1501.6,913.5 L1495.5,815.0 L1486.3,812.2Z" fill="#c0a622" stroke="#c0a622"/><path d="M1501.6,913.5 L1510.9,916.5 L1504.9,817.8 L1495.5,815.0Z" fill="#bfa521" stroke="#bfa521"/><path d="M1510.9,916.5 L1520.3,919.4 L1514.5,820.6 L1504.9,817.8Z" fill="#bea421" stroke="#bea421"/><path d="M1520.3,919.4 L1529.9,922.3 L1524.2,823.3 L1514.5,820.6Z" fill="#bca321" stroke="#bca321"/><path d="M1529.9,922.3 L1539.6,925.1 L1534.0,826.0 L1524.2,823.3Z" fill="#bba121" stroke="#bba121"/><path d="M1539.6,925.1 L1549.5,927.8 L1544.1,828.5 L1534.0,826.0Z" fill="#baa020" stroke="#baa020"/><path d="M1549.5,927.8 L1559.5,930.5 L1554.2,831.1 L1544.1,828.5Z" fill="#b89f20" stroke="#b89f20"/><path d="M1559.5,930.5 L1569.7,933.0 L1564.5,833.5 L1554.2,831.1Z" fill="#b79e20" stroke="#b79e20"/><path d="M1569.7,933.0 L1580.0,935.6 L1575.0,835.9 L1564.5,833.5Z" fill="#b59d20" stroke="#b59d20"/><path d="M1580.0,935.6 L1590.4,938.0 L1585.6,838.2 L1575.0,835.9Z" fill="#b49b1f" stroke="#b49b1f"/><path d="M1590.4,938.0 L1601.0,940.4 L1596.3,840.5 L1585.6,838.2Z" fill="#b29a1f" stroke="#b29a1f"/><path d="M1601.0,940.4 L1611.7,942.7 L1607.1,842.6 L1596.3,840.5Z" fill="#b1991f" stroke="#b1991f"/><path d="M1611.7,942.7 L1622.5,944.9 L1618.1,844.7 L1607.1,842.6Z" fill="#af971f" stroke="#af971f"/><path d="M1622.5,944.9 L1633.5,947.0 L1629.2,846.8 L1618.1,844.7Z" fill="#ad961e" stroke="#ad961e"/><path d="M1633.5,947.0 L1644.5,949.1 L1640.4,848.7 L1629.2,846.8Z" fill="#ac941e" stroke="#ac941e"/><path d="M1644.5,949.1 L1655.7,951.1 L1651.8,850.6 L1640.4,848.7Z" fill="#aa931e" stroke="#aa931e"/><path d="M1655.7,951.1 L1667.0,953.0 L1663.2,852.4 L1651.8,850.6Z" fill="#a8911d" stroke="#a8911d"/><path d="M1667.0,953.0 L1678.4,954.8 L1674.8,854.2 L1663.2,852.4Z" fill="#a7901d" stroke="#a7901d"/><path d="M1678.4,954.8 L1689.9,956.6 L1686.5,855.8 L1674.8,854.2Z" fill="#a58e1d" stroke="#a58e1d"/><path d="M1689.9,956.6 L1701.5,958.3 L1698.2,857.4 L1686.5,855.8Z" fill="#a38d1c" stroke="#a38d1c"/><path d="M1701.5,958.3 L1713.2,959.8 L1710.1,858.9 L1698.2,857.4Z" fill="#a18b1c" stroke="#a18b1c"/><path d="M1713.2,959.8 L1724.9,961.3 L1722.0,860.3 L1710.1,858.9Z" fill="#9f8a1c" stroke="#9f8a1c"/><path d="M1724.9,961.3 L1736.8,962.7 L1734.0,861.6 L1722.0,860.3Z" fill="#9d881c" stroke="#9d881c"/><path d="M1736.8,962.7 L1748.7,964.1 L1746.1,862.9 L1734.0,861.6Z" fill="#9c861b" stroke="#9c861b"/><path d="M1748.7,964.1 L1760.7,965.3 L1758.3,864.1 L1746.1,862.9Z" fill="#9a851b" stroke="#9a851b"/><path d="M1760.7,965.3 L1772.8,966.4 L1770.6,865.2 L1758.3,864.1Z" fill="#98831a" stroke="#98831a"/><path d="M1772.8,966.4 L1784.9,967.5 L1782.9,866.2 L1770.6,865.2Z" fill="#96811a" stroke="#96811a"/><path d="M1784.9,967.5 L1797.1,968.5 L1795.2,867.1 L1782.9,866.2Z" fill="#947f1a" stroke="#947f1a"/><path d="M1797.1,968.5 L1809.3,969.3 L1807.7,867.9 L1795.2,867.1Z" fill="#927e19" stroke="#927e19"/><path d="M1809.3,969.3 L1821.6,970.1 L1820.1,868.6 L1807.7,867.9Z" fill="#907c19" stroke="#907c19"/><path d="M1821.6,970.1 L1834.0,970.8 L1832.6,869.3 L1820.1,868.6Z" fill="#8d7a19" stroke="#8d7a19"/><path d="M1834.0,970.8 L1846.3,971.4 L1845.2,869.9 L1832.6,869.3Z" fill="#8b7818" stroke="#8b7818"/><path d="M1846.3,971.4 L1858.7,971.9 L1857.8,870.4 L1845.2,869.9Z" fill="#897618" stroke="#897618"/><path d="M1858.7,971.9 L1871.1,972.3 L1870.4,870.8 L1857.8,870.4Z" fill="#877518" stroke="#877518"/><path d="M1871.1,972.3 L1883.6,972.7 L1883.0,871.1 L1870.4,870.8Z" fill="#857317" stroke="#857317"/><path d="M1883.6,972.7 L1896.0,972.9 L1895.7,871.3 L1883.0,871.1Z" fill="#837117" stroke="#837117"/><path d="M1896.0,972.9 L1908.5,973.0 L1908.3,871.4 L1895.7,871.3Z" fill="#806f16" stroke="#806f16"/><path d="M1908.5,973.0 L1921.0,973.1 L1921.0,871.5 L1908.3,871.4Z" fill="#7e6d16" stroke="#7e6d16"/><path d="M1921.0,973.1 L1933.5,973.0 L1933.7,871.4 L1921.0,871.5Z" fill="#7c6b16" stroke="#7c6b16"/><path d="M1933.5,973.0 L1946.0,972.9 L1946.3,871.3 L1933.7,871.4Z" fill="#7a6915" stroke="#7a6915"/><path d="M1946.0,972.9 L1958.4,972.7 L1959.0,871.1 L1946.3,871.3Z" fill="#776715" stroke="#776715"/><path d="M1958.4,972.7 L1970.9,972.3 L1971.6,870.8 L1959.0,871.1Z" fill="#756514" stroke="#756514"/><path d="M1970.9,972.3 L1983.3,971.9 L1984.2,870.4 L1971.6,870.8Z" fill="#736314" stroke="#736314"/><path d="M1983.3,971.9 L1995.7,971.4 L1996.8,869.9 L1984.2,870.4Z" fill="#706114" stroke="#706114"/><path d="M1995.7,971.4 L2008.0,970.8 L2009.4,869.3 L1996.8,869.9Z" fill="#6e5f13" stroke="#6e5f13"/><path d="M2008.0,970.8 L2020.4,970.1 L2021.9,868.6 L2009.4,869.3Z" fill="#6c5d13" stroke="#6c5d13"/><path d="M2020.4,970.1 L2032.7,969.3 L2034.3,867.9 L2021.9,868.6Z" fill="#695b12" stroke="#695b12"/><path d="M2032.7,969.3 L2044.9,968.5 L2046.8,867.1 L2034.3,867.9Z" fill="#675912" stroke="#675912"/><path d="M2044.9,968.5 L2057.1,967.5 L2059.1,866.2 L2046.8,867.1Z" fill="#645711" stroke="#645711"/><path d="M2057.1,967.5 L2069.2,966.4 L2071.4,865.2 L2059.1,866.2Z" fill="#625511" stroke="#625511"/><path d="M2069.2,966.4 L2081.3,965.3 L2083.7,864.1 L2071.4,865.2Z" fill="#605211" stroke="#605211"/><path d="M2081.3,965.3 L2093.3,964.1 L2095.9,862.9 L2083.7,864.1Z" fill="#5d5010" stroke="#5d5010"/><path d="M2093.3,964.1 L2105.2,962.7 L2108.0,861.6 L2095.9,862.9Z" fill="#5b4e10" stroke="#5b4e10"/><path d="M2105.2,962.7 L2117.1,961.3 L2120.0,860.3 L2108.0,861.6Z" fill="#584c0f" stroke="#584c0f"/><path d="M2117.1,961.3 L2128.8,959.8 L2131.9,858.9 L2120.0,860.3Z" fill="#564a0f" stroke="#564a0f"/><path d="M2128.8,959.8 L2140.5,958.3 L2143.8,857.4 L2131.9,858.9Z" fill="#53480e" stroke="#53480e"/><path d="M2140.5,958.3 L2152.1,956.6 L2155.5,855.8 L2143.8,857.4Z" fill="#51460e" stroke="#51460e"/><path d="M2152.1,956.6 L2163.6,954.8 L2167.2,854.2 L2155.5,855.8Z" fill="#4e430d" stroke="#4e430d"/><path d="M2163.6,954.8 L2175.0,953.0 L2178.8,852.4 L2167.2,854.2Z" fill="#4c410d" stroke="#4c410d"/><path d="M2175.0,953.0 L2186.3,951.1 L2190.2,850.6 L2178.8,852.4Z" fill="#493f0d" stroke="#493f0d"/><path d="M2186.3,951.1 L2197.5,949.1 L2201.6,848.7 L2190.2,850.6Z" fill="#473d0c" stroke="#473d0c"/><path d="M2197.5,949.1 L2208.5,947.0 L2212.8,846.8 L2201.6,848.7Z" fill="#443b0c" stroke="#443b0c"/><path d="M2208.5,947.0 L2219.5,944.9 L2223.9,844.7 L2212.8,846.8Z" fill="#42390b" stroke="#42390b"/><path d="M2219.5,944.9 L2230.3,942.7 L2234.9,842.6 L2223.9,844.7Z" fill="#3f360b" stroke="#3f360b"/><path d="M2230.3,942.7 L2241.0,940.4 L2245.7,840.5 L2234.9,842.6Z" fill="#3c340a" stroke="#3c340a"/><path d="M2241.0,940.4 L2251.6,938.0 L2256.4,838.2 L2245.7,840.5Z" fill="#3a320a" stroke="#3a320a"/><path d="M2251.6,938.0 L2262.0,935.6 L2267.0,835.9 L2256.4,838.2Z" fill="#373009" stroke="#373009"/><path d="M2262.0,935.6 L2272.3,933.0 L2277.5,833.5 L2267.0,835.9Z" fill="#352e09" stroke="#352e09"/><path d="M2272.3,933.0 L2282.5,930.5 L2287.8,831.1 L2277.5,833.5Z" fill="#322b09" stroke="#322b09"/><path d="M2282.5,930.5 L2292.5,927.8 L2297.9,828.5 L2287.8,831.1Z" fill="#332c09" stroke="#332c09"/><path d="M2292.5,927.8 L2302.4,925.1 L2308.0,826.0 L2297.9,828.5Z" fill="#352e09" stroke="#352e09"/><path d="M2302.4,925.1 L2312.1,922.3 L2317.8,823.3 L2308.0,826.0Z" fill="#383009" stroke="#383009"/><path d="M2312.1,922.3 L2321.7,919.4 L2327.5,820.6 L2317.8,823.3Z" fill="#3a320a" stroke="#3a320a"/><path d="M2321.7,919.4 L2331.1,916.5 L2337.1,817.8 L2327.5,820.6Z" fill="#3d350a" stroke="#3d350a"/><path d="M2331.1,916.5 L2340.4,913.5 L2346.5,815.0 L2337.1,817.8Z" fill="#40370b" stroke="#40370b"/><path d="M2340.4,913.5 L2349.5,910.5 L2355.7,812.2 L2346.5,815.0Z" fill="#42390b" stroke="#42390b"/><path d="M2349.5,910.5 L2358.4,907.4 L2364.7,809.2 L2355.7,812.2Z" fill="#453b0c" stroke="#453b0c"/><path d="M2358.4,907.4 L2367.2,904.3 L2373.6,806.2 L2364.7,809.2Z" fill="#473d0c" stroke="#473d0c"/><path d="M2367.2,904.3 L2375.8,901.1 L2382.3,803.2 L2373.6,806.2Z" fill="#4a400d" stroke="#4a400d"/><path d="M2375.8,901.1 L2384.3,897.8 L2390.9,800.1 L2382.3,803.2Z" fill="#4c420d" stroke="#4c420d"/><path d="M2384.3,897.8 L2392.5,894.5 L2399.2,797.0 L2390.9,800.1Z" fill="#4f440e" stroke="#4f440e"/><path d="M2392.5,894.5 L2400.6,891.1 L2407.4,793.8 L2399.2,797.0Z" fill="#51460e" stroke="#51460e"/><path d="M2400.6,891.1 L2408.5,887.7 L2415.4,790.6 L2407.4,793.8Z" fill="#54480e" stroke="#54480e"/><path d="M2408.5,887.7 L2416.2,884.3 L2423.2,787.3 L2415.4,790.6Z" fill="#564a0f" stroke="#564a0f"/><path d="M2416.2,884.3 L2423.8,880.8 L2430.9,784.0 L2423.2,787.3Z" fill="#594d0f" stroke="#594d0f"/><path d="M2423.8,880.8 L2431.2,877.2 L2438.3,780.6 L2430.9,784.0Z" fill="#5b4f10" stroke="#5b4f10"/><path d="M2431.2,877.2 L2438.4,873.6 L2445.6,777.2 L2438.3,780.6Z" fill="#5e5110" stroke="#5e5110"/><path d="M2438.4,873.6 L2445.4,870.0 L2452.7,773.8 L2445.6,777.2Z" fill="#605311" stroke="#605311"/><path d="M2445.4,870.0 L2452.2,866.3 L2459.6,770.3 L2452.7,773.8Z" fill="#635511" stroke="#635511"/><path d="M2452.2,866.3 L2458.8,862.6 L2466.3,766.8 L2459.6,770.3Z" fill="#655711" stroke="#655711"/><path d="M2458.8,862.6 L2465.3,858.9 L2472.8,763.3 L2466.3,766.8Z" fill="#675912" stroke="#675912"/><path d="M2465.3,858.9 L2471.5,855.1 L2479.2,759.7 L2472.8,763.3Z" fill="#6a5b12" stroke="#6a5b12"/><path d="M2471.5,855.1 L2477.6,851.3 L2485.3,756.1 L2479.2,759.7Z" fill="#6c5d13" stroke="#6c5d13"/><path d="M2477.6,851.3 L2483.5,847.5 L2491.2,752.5 L2485.3,756.1Z" fill="#6e5f13" stroke="#6e5f13"/><path d="M2483.5,847.5 L2489.2,843.6 L2497.0,748.8 L2491.2,752.5Z" fill="#716114" stroke="#716114"/><path d="M2489.2,843.6 L2494.7,839.7 L2502.5,745.1 L2497.0,748.8Z" fill="#736314" stroke="#736314"/><path d="M2494.7,839.7 L2500.0,835.8 L2507.9,741.4 L2502.5,745.1Z" fill="#766514" stroke="#766514"/><path d="M2500.0,835.8 L2505.1,831.8 L2513.1,737.7 L2507.9,741.4Z" fill="#786715" stroke="#786715"/><path d="M2505.1,831.8 L2510.0,827.9 L2518.0,733.9 L2513.1,737.7Z" fill="#7a6915" stroke="#7a6915"/><path d="M2510.0,827.9 L2514.8,823.9 L2522.8,730.1 L2518.0,733.9Z" fill="#7c6b16" stroke="#7c6b16"/><path d="M2514.8,823.9 L2519.3,819.9 L2527.4,726.3 L2522.8,730.1Z" fill="#7f6d16" stroke="#7f6d16"/><path d="M2519.3,819.9 L2523.7,815.8 L2531.8,722.5 L2527.4,726.3Z" fill="#816f16" stroke="#816f16"/><path d="M2523.7,815.8 L2527.8,811.8 L2536.0,718.7 L2531.8,722.5Z" fill="#837117" stroke="#837117"/><path d="M2527.8,811.8 L2531.8,807.7 L2540.0,714.9 L2536.0,718.7Z" fill="#857317" stroke="#857317"/><path d="M2531.8,807.7 L2535.6,803.6 L2543.8,711.0 L2540.0,714.9Z" fill="#877518" stroke="#877518"/><path d="M2535.6,803.6 L2539.2,799.6 L2547.4,707.2 L2543.8,711.0Z" fill="#8a7718" stroke="#8a7718"/><path d="M2539.2,799.6 L2542.6,795.5 L2550.8,703.3 L2547.4,707.2Z" fill="#8c7918" stroke="#8c7918"/><path d="M2542.6,795.5 L2545.8,791.3 L2554.1,699.4 L2550.8,703.3Z" fill="#8e7a19" stroke="#8e7a19"/><path d="M2545.8,791.3 L2548.8,787.2 L2557.1,695.5 L2554.1,699.4Z" fill="#907c19" stroke="#907c19"/><path d="M2548.8,787.2 L2551.7,783.1 L2560.0,691.6 L2557.1,695.5Z" fill="#927e19" stroke="#927e19"/><path d="M2551.7,783.1 L2554.3,779.0 L2562.6,687.7 L2560.0,691.6Z" fill="#94801a" stroke="#94801a"/><path d="M2554.3,779.0 L2556.8,774.9 L2565.1,683.8 L2562.6,687.7Z" fill="#96821a" stroke="#96821a"/><path d="M2556.8,774.9 L2559.1,770.7 L2567.4,679.9 L2565.1,683.8Z" fill="#98831b" stroke="#98831b"/><path d="M2559.1,770.7 L2561.2,766.6 L2569.5,676.0 L2567.4,679.9Z" fill="#9a851b" stroke="#9a851b"/><path d="M2561.2,766.6 L2563.1,762.4 L2571.4,672.1 L2569.5,676.0Z" fill="#9c871b" stroke="#9c871b"/><path d="M2563.1,762.4 L2564.8,758.3 L2573.1,668.2 L2571.4,672.1Z" fill="#9e881c" stroke="#9e881c"/><path d="M2564.8,758.3 L2566.4,754.2 L2574.7,664.3 L2573.1,668.2Z" fill="#a08a1c" stroke="#a08a1c"/><path d="M2566.4,754.2 L2567.8,750.0 L2576.0,660.4 L2574.7,664.3Z" fill="#a28c1c" stroke="#a28c1c"/><path d="M2567.8,750.0 L2569.0,745.9 L2577.2,656.5 L2576.0,660.4Z" fill="#a38d1d" stroke="#a38d1d"/><path d="M2569.0,745.9 L2570.0,741.8 L2578.2,652.6 L2577.2,656.5Z" fill="#a58f1d" stroke="#a58f1d"/><path d="M2570.0,741.8 L2570.8,737.7 L2579.1,648.7 L2578.2,652.6Z" fill="#a7901d" stroke="#a7901d"/><path d="M2570.8,737.7 L2571.5,733.6 L2579.7,644.8 L2579.1,648.7Z" fill="#a9921d" stroke="#a9921d"/><path d="M2571.5,733.6 L2572.0,729.5 L2580.2,641.0 L2579.7,644.8Z" fill="#aa931e" stroke="#aa931e"/></g>
<g stroke-width="0.8" stroke-linejoin="round"><path d="M1378.9,621.5 L1379.2,624.6 L1376.4,588.6 L1376.1,585.6Z" fill="#cdb124" stroke="#cdb124"/><path d="M1379.2,624.6 L1379.6,627.7 L1376.8,591.7 L1376.4,588.6Z" fill="#ceb224" stroke="#ceb224"/><path d="M1379.6,627.7 L1380.1,630.9 L1377.4,594.7 L1376.8,591.7Z" fill="#ceb224" stroke="#ceb224"/><path d="M1380.1,630.9 L1380.8,634.0 L1378.1,597.8 L1377.4,594.7Z" fill="#cfb324" stroke="#cfb324"/><path d="M1380.8,634.0 L1381.7,637.2 L1378.9,600.9 L1378.1,597.8Z" fill="#d0b324" stroke="#d0b324"/><path d="M1381.7,637.2 L1382.7,640.3 L1379.9,603.9 L1378.9,600.9Z" fill="#d0b424" stroke="#d0b424"/><path d="M1382.7,640.3 L1383.8,643.5 L1381.1,607.0 L1379.9,603.9Z" fill="#d1b425" stroke="#d1b425"/><path d="M1383.8,643.5 L1385.1,646.6 L1382.3,610.1 L1381.1,607.0Z" fill="#d1b525" stroke="#d1b525"/><path d="M1385.1,646.6 L1386.5,649.8 L1383.8,613.2 L1382.3,610.1Z" fill="#d2b525" stroke="#d2b525"/><path d="M1386.5,649.8 L1388.1,652.9 L1385.3,616.2 L1383.8,613.2Z" fill="#d2b525" stroke="#d2b525"/><path d="M1388.1,652.9 L1389.8,656.1 L1387.1,619.3 L1385.3,616.2Z" fill="#d2b625" stroke="#d2b625"/><path d="M1389.8,656.1 L1391.7,659.2 L1388.9,622.4 L1387.1,619.3Z" fill="#d3b625" stroke="#d3b625"/><path d="M1391.7,659.2 L1393.7,662.4 L1390.9,625.4 L1388.9,622.4Z" fill="#d3b625" stroke="#d3b625"/><path d="M1393.7,662.4 L1395.9,665.5 L1393.1,628.5 L1390.9,625.4Z" fill="#d3b625" stroke="#d3b625"/><path d="M1395.9,665.5 L1398.2,668.6 L1395.4,631.6 L1393.1,628.5Z" fill="#d3b625" stroke="#d3b625"/><path d="M1398.2,668.6 L1400.6,671.8 L1397.9,634.6 L1395.4,631.6Z" fill="#d4b725" stroke="#d4b725"/><path d="M1400.6,671.8 L1403.3,674.9 L1400.5,637.7 L1397.9,634.6Z" fill="#d4b725" stroke="#d4b725"/><path d="M1403.3,674.9 L1406.0,678.0 L1403.3,640.7 L1400.5,637.7Z" fill="#d4b725" stroke="#d4b725"/><path d="M1406.0,678.0 L1409.0,681.1 L1406.2,643.7 L1403.3,640.7Z" fill="#d4b725" stroke="#d4b725"/><path d="M1409.0,681.1 L1412.0,684.2 L1409.3,646.7 L1406.2,643.7Z" fill="#d4b725" stroke="#d4b725"/><path d="M1412.0,684.2 L1415.3,687.3 L1412.6,649.7 L1409.3,646.7Z" fill="#d4b725" stroke="#d4b725"/><path d="M1415.3,687.3 L1418.6,690.4 L1415.9,652.7 L1412.6,649.7Z" fill="#d4b725" stroke="#d4b725"/><path d="M1418.6,690.4 L1422.2,693.4 L1419.5,655.7 L1415.9,652.7Z" fill="#d3b725" stroke="#d3b725"/><path d="M1422.2,693.4 L1425.8,696.4 L1423.2,658.7 L1419.5,655.7Z" fill="#d3b625" stroke="#d3b625"/><path d="M1425.8,696.4 L1429.7,699.5 L1427.0,661.6 L1423.2,658.7Z" fill="#d3b625" stroke="#d3b625"/><path d="M1429.7,699.5 L1433.7,702.5 L1431.0,664.6 L1427.0,661.6Z" fill="#d3b625" stroke="#d3b625"/><path d="M1433.7,702.5 L1437.8,705.5 L1435.2,667.5 L1431.0,664.6Z" fill="#d3b625" stroke="#d3b625"/><path d="M1437.8,705.5 L1442.1,708.4 L1439.5,670.4 L1435.2,667.5Z" fill="#d2b625" stroke="#d2b625"/><path d="M1442.1,708.4 L1446.5,711.4 L1443.9,673.3 L1439.5,670.4Z" fill="#d2b525" stroke="#d2b525"/><path d="M1446.5,711.4 L1451.1,714.3 L1448.5,676.1 L1443.9,673.3Z" fill="#d1b525" stroke="#d1b525"/><path d="M1451.1,714.3 L1455.8,717.2 L1453.3,678.9 L1448.5,676.1Z" fill="#d1b425" stroke="#d1b425"/><path d="M1455.8,717.2 L1460.7,720.1 L1458.2,681.8 L1453.3,678.9Z" fill="#d1b425" stroke="#d1b425"/><path d="M1460.7,720.1 L1465.8,723.0 L1463.3,684.6 L1458.2,681.8Z" fill="#d0b424" stroke="#d0b424"/><path d="M1465.8,723.0 L1470.9,725.8 L1468.5,687.3 L1463.3,684.6Z" fill="#cfb324" stroke="#cfb324"/><path d="M1470.9,725.8 L1476.3,728.6 L1473.8,690.1 L1468.5,687.3Z" fill="#cfb324" stroke="#cfb324"/><path d="M1476.3,728.6 L1481.7,731.4 L1479.3,692.8 L1473.8,690.1Z" fill="#ceb224" stroke="#ceb224"/><path d="M1481.7,731.4 L1487.4,734.1 L1485.0,695.4 L1479.3,692.8Z" fill="#ceb124" stroke="#ceb124"/><path d="M1487.4,734.1 L1493.1,736.9 L1490.8,698.1 L1485.0,695.4Z" fill="#cdb124" stroke="#cdb124"/><path d="M1493.1,736.9 L1499.0,739.5 L1496.7,700.7 L1490.8,698.1Z" fill="#ccb024" stroke="#ccb024"/><path d="M1499.0,739.5 L1505.1,742.2 L1502.8,703.3 L1496.7,700.7Z" fill="#cbb024" stroke="#cbb024"/><path d="M1505.1,742.2 L1511.3,744.8 L1509.0,705.9 L1502.8,703.3Z" fill="#caaf23" stroke="#caaf23"/><path d="M1511.3,744.8 L1517.6,747.4 L1515.4,708.4 L1509.0,705.9Z" fill="#caae23" stroke="#caae23"/><path d="M1517.6,747.4 L1524.1,750.0 L1521.9,710.9 L1515.4,708.4Z" fill="#c9ad23" stroke="#c9ad23"/><path d="M1524.1,750.0 L1530.7,752.5 L1528.5,713.3 L1521.9,710.9Z" fill="#c8ac23" stroke="#c8ac23"/><path d="M1530.7,752.5 L1537.5,754.9 L1535.3,715.8 L1528.5,713.3Z" fill="#c7ac23" stroke="#c7ac23"/><path d="M1537.5,754.9 L1544.3,757.4 L1542.2,718.1 L1535.3,715.8Z" fill="#c6ab23" stroke="#c6ab23"/><path d="M1544.3,757.4 L1551.3,759.8 L1549.3,720.5 L1542.2,718.1Z" fill="#c5aa22" stroke="#c5aa22"/><path d="M1551.3,759.8 L1558.5,762.1 L1556.4,722.8 L1549.3,720.5Z" fill="#c4a922" stroke="#c4a922"/><path d="M1558.5,762.1 L1565.8,764.4 L1563.7,725.0 L1556.4,722.8Z" fill="#c2a822" stroke="#c2a822"/><path d="M1565.8,764.4 L1573.2,766.7 L1571.2,727.2 L1563.7,725.0Z" fill="#c1a722" stroke="#c1a722"/><path d="M1573.2,766.7 L1580.7,768.9 L1578.7,729.4 L1571.2,727.2Z" fill="#c0a622" stroke="#c0a622"/><path d="M1580.7,768.9 L1588.3,771.1 L1586.4,731.5 L1578.7,729.4Z" fill="#bfa521" stroke="#bfa521"/><path d="M1588.3,771.1 L1596.1,773.3 L1594.2,733.6 L1586.4,731.5Z" fill="#bea421" stroke="#bea421"/><path d="M1596.1,773.3 L1604.0,775.3 L1602.1,735.7 L1594.2,733.6Z" fill="#bca321" stroke="#bca321"/><path d="M1604.0,775.3 L1611.9,777.4 L1610.2,737.7 L1602.1,735.7Z" fill="#bba121" stroke="#bba121"/><path d="M1611.9,777.4 L1620.1,779.4 L1618.3,739.6 L1610.2,737.7Z" fill="#baa020" stroke="#baa020"/><path d="M1620.1,779.4 L1628.3,781.3 L1626.6,741.5 L1618.3,739.6Z" fill="#b89f20" stroke="#b89f20"/><path d="M1628.3,781.3 L1636.6,783.2 L1635.0,743.3 L1626.6,741.5Z" fill="#b79e20" stroke="#b79e20"/><path d="M1636.6,783.2 L1645.0,785.0 L1643.4,745.1 L1635.0,743.3Z" fill="#b59d20" stroke="#b59d20"/><path d="M1645.0,785.0 L1653.6,786.8 L1652.0,746.9 L1643.4,745.1Z" fill="#b49b1f" stroke="#b49b1f"/><path d="M1653.6,786.8 L1662.2,788.5 L1660.7,748.5 L1652.0,746.9Z" fill="#b29a1f" stroke="#b29a1f"/><path d="M1662.2,788.5 L1670.9,790.2 L1669.5,750.2 L1660.7,748.5Z" fill="#b1991f" stroke="#b1991f"/><path d="M1670.9,790.2 L1679.7,791.8 L1678.4,751.8 L1669.5,750.2Z" fill="#af971f" stroke="#af971f"/><path d="M1679.7,791.8 L1688.7,793.4 L1687.3,753.3 L1678.4,751.8Z" fill="#ad961e" stroke="#ad961e"/><path d="M1688.7,793.4 L1697.7,794.9 L1696.4,754.7 L1687.3,753.3Z" fill="#ac941e" stroke="#ac941e"/><path d="M1697.7,794.9 L1706.7,796.3 L1705.5,756.2 L1696.4,754.7Z" fill="#aa931e" stroke="#aa931e"/><path d="M1706.7,796.3 L1715.9,797.7 L1714.7,757.5 L1705.5,756.2Z" fill="#a8911d" stroke="#a8911d"/><path d="M1715.9,797.7 L1725.2,799.0 L1724.0,758.8 L1714.7,757.5Z" fill="#a7901d" stroke="#a7901d"/><path d="M1725.2,799.0 L1734.5,800.3 L1733.4,760.0 L1724.0,758.8Z" fill="#a58e1d" stroke="#a58e1d"/><path d="M1734.5,800.3 L1743.9,801.5 L1742.8,761.2 L1733.4,760.0Z" fill="#a38d1c" stroke="#a38d1c"/><path d="M1743.9,801.5 L1753.3,802.7 L1752.4,762.3 L1742.8,761.2Z" fill="#a18b1c" stroke="#a18b1c"/><path d="M1753.3,802.7 L1762.9,803.7 L1761.9,763.4 L1752.4,762.3Z" fill="#9f8a1c" stroke="#9f8a1c"/><path d="M1762.9,803.7 L1772.4,804.8 L1771.6,764.4 L1761.9,763.4Z" fill="#9d881c" stroke="#9d881c"/><path d="M1772.4,804.8 L1782.1,805.7 L1781.3,765.3 L1771.6,764.4Z" fill="#9c861b" stroke="#9c861b"/><path d="M1782.1,805.7 L1791.8,806.6 L1791.0,766.2 L1781.3,765.3Z" fill="#9a851b" stroke="#9a851b"/><path d="M1791.8,806.6 L1801.5,807.4 L1800.8,767.0 L1791.0,766.2Z" fill="#98831a" stroke="#98831a"/><path d="M1801.5,807.4 L1811.3,808.2 L1810.7,767.7 L1800.8,767.0Z" fill="#96811a" stroke="#96811a"/><path d="M1811.3,808.2 L1821.1,808.9 L1820.6,768.4 L1810.7,767.7Z" fill="#947f1a" stroke="#947f1a"/><path d="M1821.1,808.9 L1831.0,809.5 L1830.5,769.0 L1820.6,768.4Z" fill="#927e19" stroke="#927e19"/><path d="M1831.0,809.5 L1840.9,810.1 L1840.5,769.6 L1830.5,769.0Z" fill="#907c19" stroke="#907c19"/><path d="M1840.9,810.1 L1850.9,810.6 L1850.5,770.1 L1840.5,769.6Z" fill="#8d7a19" stroke="#8d7a19"/><path d="M1850.9,810.6 L1860.8,811.0 L1860.5,770.5 L1850.5,770.1Z" fill="#8b7818" stroke="#8b7818"/><path d="M1860.8,811.0 L1870.8,811.4 L1870.5,770.9 L1860.5,770.5Z" fill="#897618" stroke="#897618"/><path d="M1870.8,811.4 L1880.8,811.7 L1880.6,771.2 L1870.5,770.9Z" fill="#877518" stroke="#877518"/><path d="M1880.8,811.7 L1890.9,811.9 L1890.7,771.4 L1880.6,771.2Z" fill="#857317" stroke="#857317"/><path d="M1890.9,811.9 L1900.9,812.1 L1900.8,771.6 L1890.7,771.4Z" fill="#837117" stroke="#837117"/><path d="M1900.9,812.1 L1911.0,812.2 L1910.9,771.7 L1900.8,771.6Z" fill="#806f16" stroke="#806f16"/><path d="M1911.0,812.2 L1921.0,812.2 L1921.0,771.7 L1910.9,771.7Z" fill="#7e6d16" stroke="#7e6d16"/><path d="M1921.0,812.2 L1931.0,812.2 L1931.1,771.7 L1921.0,771.7Z" fill="#7c6b16" stroke="#7c6b16"/><path d="M1931.0,812.2 L1941.1,812.1 L1941.2,771.6 L1931.1,771.7Z" fill="#7a6915" stroke="#7a6915"/><path d="M1941.1,812.1 L1951.1,811.9 L1951.3,771.4 L1941.2,771.6Z" fill="#776715" stroke="#776715"/><path d="M1951.1,811.9 L1961.2,811.7 L1961.4,771.2 L1951.3,771.4Z" fill="#756514" stroke="#756514"/><path d="M1961.2,811.7 L1971.2,811.4 L1971.5,770.9 L1961.4,771.2Z" fill="#736314" stroke="#736314"/><path d="M1971.2,811.4 L1981.2,811.0 L1981.5,770.5 L1971.5,770.9Z" fill="#706114" stroke="#706114"/><path d="M1981.2,811.0 L1991.1,810.6 L1991.5,770.1 L1981.5,770.5Z" fill="#6e5f13" stroke="#6e5f13"/><path d="M1991.1,810.6 L2001.1,810.1 L2001.5,769.6 L1991.5,770.1Z" fill="#6c5d13" stroke="#6c5d13"/><path d="M2001.1,810.1 L2011.0,809.5 L2011.5,769.0 L2001.5,769.6Z" fill="#695b12" stroke="#695b12"/><path d="M2011.0,809.5 L2020.9,808.9 L2021.4,768.4 L2011.5,769.0Z" fill="#675912" stroke="#675912"/><path d="M2020.9,808.9 L2030.7,808.2 L2031.3,767.7 L2021.4,768.4Z" fill="#645711" stroke="#645711"/><path d="M2030.7,808.2 L2040.5,807.4 L2041.2,767.0 L2031.3,767.7Z" fill="#625511" stroke="#625511"/><path d="M2040.5,807.4 L2050.2,806.6 L2051.0,766.2 L2041.2,767.0Z" fill="#605211" stroke="#605211"/><path d="M2050.2,806.6 L2059.9,805.7 L2060.7,765.3 L2051.0,766.2Z" fill="#5d5010" stroke="#5d5010"/><path d="M2059.9,805.7 L2069.6,804.8 L2070.4,764.4 L2060.7,765.3Z" fill="#5b4e10" stroke="#5b4e10"/><path d="M2069.6,804.8 L2079.1,803.7 L2080.1,763.4 L2070.4,764.4Z" fill="#584c0f" stroke="#584c0f"/><path d="M2079.1,803.7 L2088.7,802.7 L2089.6,762.3 L2080.1,763.4Z" fill="#564a0f" stroke="#564a0f"/><path d="M2088.7,802.7 L2098.1,801.5 L2099.2,761.2 L2089.6,762.3Z" fill="#53480e" stroke="#53480e"/><path d="M2098.1,801.5 L2107.5,800.3 L2108.6,760.0 L2099.2,761.2Z" fill="#51460e" stroke="#51460e"/><path d="M2107.5,800.3 L2116.8,799.0 L2118.0,758.8 L2108.6,760.0Z" fill="#4e430d" stroke="#4e430d"/><path d="M2116.8,799.0 L2126.1,797.7 L2127.3,757.5 L2118.0,758.8Z" fill="#4c410d" stroke="#4c410d"/><path d="M2126.1,797.7 L2135.3,796.3 L2136.5,756.2 L2127.3,757.5Z" fill="#493f0d" stroke="#493f0d"/><path d="M2135.3,796.3 L2144.3,794.9 L2145.6,754.7 L2136.5,756.2Z" fill="#473d0c" stroke="#473d0c"/><path d="M2144.3,794.9 L2153.3,793.4 L2154.7,753.3 L2145.6,754.7Z" fill="#443b0c" stroke="#443b0c"/><path d="M2153.3,793.4 L2162.3,791.8 L2163.6,751.8 L2154.7,753.3Z" fill="#42390b" stroke="#42390b"/><path d="M2162.3,791.8 L2171.1,790.2 L2172.5,750.2 L2163.6,751.8Z" fill="#3f360b" stroke="#3f360b"/><path d="M2171.1,790.2 L2179.8,788.5 L2181.3,748.5 L2172.5,750.2Z" fill="#3c340a" stroke="#3c340a"/><path d="M2179.8,788.5 L2188.4,786.8 L2190.0,746.9 L2181.3,748.5Z" fill="#3a320a" stroke="#3a320a"/><path d="M2188.4,786.8 L2197.0,785.0 L2198.6,745.1 L2190.0,746.9Z" fill="#373009" stroke="#373009"/><path d="M2197.0,785.0 L2205.4,783.2 L2207.0,743.3 L2198.6,745.1Z" fill="#352e09" stroke="#352e09"/><path d="M2205.4,783.2 L2213.7,781.3 L2215.4,741.5 L2207.0,743.3Z" fill="#322b09" stroke="#322b09"/><path d="M2213.7,781.3 L2221.9,779.4 L2223.7,739.6 L2215.4,741.5Z" fill="#332c09" stroke="#332c09"/><path d="M2221.9,779.4 L2230.1,777.4 L2231.8,737.7 L2223.7,739.6Z" fill="#352e09" stroke="#352e09"/><path d="M2230.1,777.4 L2238.0,775.3 L2239.9,735.7 L2231.8,737.7Z" fill="#383009" stroke="#383009"/><path d="M2238.0,775.3 L2245.9,773.3 L2247.8,733.6 L2239.9,735.7Z" fill="#3a320a" stroke="#3a320a"/><path d="M2245.9,773.3 L2253.7,771.1 L2255.6,731.5 L2247.8,733.6Z" fill="#3d350a" stroke="#3d350a"/><path d="M2253.7,771.1 L2261.3,768.9 L2263.3,729.4 L2255.6,731.5Z" fill="#40370b" stroke="#40370b"/><path d="M2261.3,768.9 L2268.8,766.7 L2270.8,727.2 L2263.3,729.4Z" fill="#42390b" stroke="#42390b"/><path d="M2268.8,766.7 L2276.2,764.4 L2278.3,725.0 L2270.8,727.2Z" fill="#453b0c" stroke="#453b0c"/><path d="M2276.2,764.4 L2283.5,762.1 L2285.6,722.8 L2278.3,725.0Z" fill="#473d0c" stroke="#473d0c"/><path d="M2283.5,762.1 L2290.7,759.8 L2292.7,720.5 L2285.6,722.8Z" fill="#4a400d" stroke="#4a400d"/><path d="M2290.7,759.8 L2297.7,757.4 L2299.8,718.1 L2292.7,720.5Z" fill="#4c420d" stroke="#4c420d"/><path d="M2297.7,757.4 L2304.5,754.9 L2306.7,715.8 L2299.8,718.1Z" fill="#4f440e" stroke="#4f440e"/><path d="M2304.5,754.9 L2311.3,752.5 L2313.5,713.3 L2306.7,715.8Z" fill="#51460e" stroke="#51460e"/><path d="M2311.3,752.5 L2317.9,750.0 L2320.1,710.9 L2313.5,713.3Z" fill="#54480e" stroke="#54480e"/><path d="M2317.9,750.0 L2324.4,747.4 L2326.6,708.4 L2320.1,710.9Z" fill="#564a0f" stroke="#564a0f"/><path d="M2324.4,747.4 L2330.7,744.8 L2333.0,705.9 L2326.6,708.4Z" fill="#594d0f" stroke="#594d0f"/><path d="M2330.7,744.8 L2336.9,742.2 L2339.2,703.3 L2333.0,705.9Z" fill="#5b4f10" stroke="#5b4f10"/><path d="M2336.9,742.2 L2343.0,739.5 L2345.3,700.7 L2339.2,703.3Z" fill="#5e5110" stroke="#5e5110"/><path d="M2343.0,739.5 L2348.9,736.9 L2351.2,698.1 L2345.3,700.7Z" fill="#605311" stroke="#605311"/><path d="M2348.9,736.9 L2354.6,734.1 L2357.0,695.4 L2351.2,698.1Z" fill="#635511" stroke="#635511"/><path d="M2354.6,734.1 L2360.3,731.4 L2362.7,692.8 L2357.0,695.4Z" fill="#655711" stroke="#655711"/><path d="M2360.3,731.4 L2365.7,728.6 L2368.2,690.1 L2362.7,692.8Z" fill="#675912" stroke="#675912"/><path d="M2365.7,728.6 L2371.1,725.8 L2373.5,687.3 L2368.2,690.1Z" fill="#6a5b12" stroke="#6a5b12"/><path d="M2371.1,725.8 L2376.2,723.0 L2378.7,684.6 L2373.5,687.3Z" fill="#6c5d13" stroke="#6c5d13"/><path d="M2376.2,723.0 L2381.3,720.1 L2383.8,681.8 L2378.7,684.6Z" fill="#6e5f13" stroke="#6e5f13"/><path d="M2381.3,720.1 L2386.2,717.2 L2388.7,678.9 L2383.8,681.8Z" fill="#716114" stroke="#716114"/><path d="M2386.2,717.2 L2390.9,714.3 L2393.5,676.1 L2388.7,678.9Z" fill="#736314" stroke="#736314"/><path d="M2390.9,714.3 L2395.5,711.4 L2398.1,673.3 L2393.5,676.1Z" fill="#766514" stroke="#766514"/><path d="M2395.5,711.4 L2399.9,708.4 L2402.5,670.4 L2398.1,673.3Z" fill="#786715" stroke="#786715"/><path d="M2399.9,708.4 L2404.2,705.5 L2406.8,667.5 L2402.5,670.4Z" fill="#7a6915" stroke="#7a6915"/><path d="M2404.2,705.5 L2408.3,702.5 L2411.0,664.6 L2406.8,667.5Z" fill="#7c6b16" stroke="#7c6b16"/><path d="M2408.3,702.5 L2412.3,699.5 L2415.0,661.6 L2411.0,664.6Z" fill="#7f6d16" stroke="#7f6d16"/><path d="M2412.3,699.5 L2416.2,696.4 L2418.8,658.7 L2415.0,661.6Z" fill="#816f16" stroke="#816f16"/><path d="M2416.2,696.4 L2419.8,693.4 L2422.5,655.7 L2418.8,658.7Z" fill="#837117" stroke="#837117"/><path d="M2419.8,693.4 L2423.4,690.4 L2426.1,652.7 L2422.5,655.7Z" fill="#857317" stroke="#857317"/><path d="M2423.4,690.4 L2426.7,687.3 L2429.4,649.7 L2426.1,652.7Z" fill="#877518" stroke="#877518"/><path d="M2426.7,687.3 L2430.0,684.2 L2432.7,646.7 L2429.4,649.7Z" fill="#8a7718" stroke="#8a7718"/><path d="M2430.0,684.2 L2433.0,681.1 L2435.8,643.7 L2432.7,646.7Z" fill="#8c7918" stroke="#8c7918"/><path d="M2433.0,681.1 L2436.0,678.0 L2438.7,640.7 L2435.8,643.7Z" fill="#8e7a19" stroke="#8e7a19"/><path d="M2436.0,678.0 L2438.7,674.9 L2441.5,637.7 L2438.7,640.7Z" fill="#907c19" stroke="#907c19"/><path d="M2438.7,674.9 L2441.4,671.8 L2444.1,634.6 L2441.5,637.7Z" fill="#927e19" stroke="#927e19"/><path d="M2441.4,671.8 L2443.8,668.6 L2446.6,631.6 L2444.1,634.6Z" fill="#94801a" stroke="#94801a"/><path d="M2443.8,668.6 L2446.1,665.5 L2448.9,628.5 L2446.6,631.6Z" fill="#96821a" stroke="#96821a"/><path d="M2446.1,665.5 L2448.3,662.4 L2451.1,625.4 L2448.9,628.5Z" fill="#98831b" stroke="#98831b"/><path d="M2448.3,662.4 L2450.3,659.2 L2453.1,622.4 L2451.1,625.4Z" fill="#9a851b" stroke="#9a851b"/><path d="M2450.3,659.2 L2452.2,656.1 L2454.9,619.3 L2453.1,622.4Z" fill="#9c871b" stroke="#9c871b"/><path d="M2452.2,656.1 L2453.9,652.9 L2456.7,616.2 L2454.9,619.3Z" fill="#9e881c" stroke="#9e881c"/><path d="M2453.9,652.9 L2455.5,649.8 L2458.2,613.2 L2456.7,616.2Z" fill="#a08a1c" stroke="#a08a1c"/><path d="M2455.5,649.8 L2456.9,646.6 L2459.7,610.1 L2458.2,613.2Z" fill="#a28c1c" stroke="#a28c1c"/><path d="M2456.9,646.6 L2458.2,643.5 L2460.9,607.0 L2459.7,610.1Z" fill="#a38d1d" stroke="#a38d1d"/><path d="M2458.2,643.5 L2459.3,640.3 L2462.1,603.9 L2460.9,607.0Z" fill="#a58f1d" stroke="#a58f1d"/><path d="M2459.3,640.3 L2460.3,637.2 L2463.1,600.9 L2462.1,603.9Z" fill="#a7901d" stroke="#a7901d"/><path d="M2460.3,637.2 L2461.2,634.0 L2463.9,597.8 L2463.1,600.9Z" fill="#a9921d" stroke="#a9921d"/><path d="M2461.2,634.0 L2461.9,630.9 L2464.6,594.7 L2463.9,597.8Z" fill="#aa931e" stroke="#aa931e"/><path d="M2461.9,630.9 L2462.4,627.7 L2465.2,591.7 L2464.6,594.7Z" fill="#ac951e" stroke="#ac951e"/><path d="M2462.4,627.7 L2462.8,624.6 L2465.6,588.6 L2465.2,591.7Z" fill="#ae961e" stroke="#ae961e"/><path d="M2462.8,624.6 L2463.1,621.5 L2465.9,585.6 L2465.6,588.6Z" fill="#af971f" stroke="#af971f"/></g>
<path d="M1385.3,546.0 L1382.9,550.9 L1380.8,555.9 L1379.1,560.9 L1377.7,565.9 L1376.8,570.9 L1376.2,576.0 L1376.0,581.1 L1376.2,586.3 L1376.8,591.4 L1377.8,596.6 L1379.2,601.8 L1381.0,606.9 L1383.3,612.1 L1385.9,617.3 L1389.0,622.5 L1392.5,627.7 L1396.5,632.8 L1400.8,638.0 L1405.6,643.1 L1410.9,648.2 L1416.5,653.2 L1422.7,658.3 L1429.2,663.2 L1436.2,668.2 L1443.6,673.0 L1451.4,677.8 L1459.7,682.6 L1468.4,687.3 L1477.5,691.9 L1487.1,696.4 L1497.0,700.9 L1507.4,705.2 L1518.1,709.5 L1529.3,713.6 L1540.8,717.7 L1552.8,721.6 L1565.1,725.4 L1577.7,729.1 L1590.7,732.7 L1604.1,736.2 L1617.8,739.5 L1631.8,742.6 L1646.1,745.7 L1660.7,748.5 L1675.5,751.3 L1690.7,753.8 L1706.0,756.2 L1721.6,758.5 L1737.5,760.6 L1753.5,762.5 L1769.7,764.2 L1786.1,765.8 L1802.6,767.1 L1819.3,768.3 L1836.1,769.4 L1852.9,770.2 L1869.9,770.8 L1886.9,771.3 L1903.9,771.6 L1921.0,771.7 L1938.1,771.6 L1955.1,771.3 L1972.1,770.8 L1989.1,770.2 L2005.9,769.4 L2022.7,768.3 L2039.4,767.1 L2055.9,765.8 L2072.3,764.2 L2088.5,762.5 L2104.5,760.6 L2120.4,758.5 L2136.0,756.2 L2151.3,753.8 L2166.5,751.3 L2181.3,748.5 L2195.9,745.7 L2210.2,742.6 L2224.2,739.5 L2237.9,736.2 L2251.3,732.7 L2264.3,729.1 L2276.9,725.4 L2289.2,721.6 L2301.2,717.7 L2312.7,713.6 L2323.9,709.5 L2334.6,705.2 L2345.0,700.9 L2354.9,696.4 L2364.5,691.9 L2373.6,687.3 L2382.3,682.6 L2390.6,677.8 L2398.4,673.0 L2405.8,668.2 L2412.8,663.2 L2419.3,658.3 L2425.5,653.2 L2431.1,648.2 L2436.4,643.1 L2441.2,638.0 L2445.5,632.8 L2449.5,627.7 L2453.0,622.5 L2456.1,617.3 L2458.7,612.1 L2461.0,606.9 L2462.8,601.8 L2464.2,596.6 L2465.2,591.4 L2465.8,586.3 L2466.0,581.1 L2465.8,576.0 L2465.2,570.9 L2464.3,565.9 L2462.9,560.9 L2461.2,555.9 L2459.1,550.9 L2456.7,546.0 L2438.1,546.1 L2440.4,550.9 L2442.3,555.7 L2443.9,560.5 L2445.1,565.3 L2446.0,570.2 L2446.4,575.1 L2446.5,580.0 L2446.3,585.0 L2445.6,589.9 L2444.6,594.9 L2443.1,599.9 L2441.3,604.9 L2439.0,609.9 L2436.4,614.8 L2433.3,619.8 L2429.9,624.8 L2426.0,629.7 L2421.7,634.7 L2417.0,639.6 L2411.9,644.5 L2406.4,649.3 L2400.4,654.1 L2394.0,658.9 L2387.3,663.6 L2380.1,668.3 L2372.4,672.9 L2364.4,677.5 L2356.0,681.9 L2347.2,686.3 L2338.0,690.7 L2328.3,694.9 L2318.3,699.1 L2307.9,703.1 L2297.2,707.1 L2286.0,711.0 L2274.5,714.8 L2262.7,718.4 L2250.5,721.9 L2238.0,725.3 L2225.1,728.6 L2212.0,731.8 L2198.5,734.8 L2184.8,737.7 L2170.8,740.4 L2156.5,743.0 L2141.9,745.5 L2127.2,747.8 L2112.2,749.9 L2097.0,751.9 L2081.6,753.7 L2066.0,755.4 L2050.3,756.9 L2034.5,758.2 L2018.5,759.3 L2002.4,760.3 L1986.2,761.1 L1970.0,761.7 L1953.7,762.1 L1937.4,762.4 L1921.0,762.5 L1904.6,762.4 L1888.3,762.1 L1872.0,761.7 L1855.8,761.1 L1839.6,760.3 L1823.5,759.3 L1807.5,758.2 L1791.7,756.9 L1776.0,755.4 L1760.4,753.7 L1745.0,751.9 L1729.8,749.9 L1714.8,747.8 L1700.1,745.5 L1685.5,743.0 L1671.2,740.4 L1657.2,737.7 L1643.5,734.8 L1630.0,731.8 L1616.9,728.6 L1604.0,725.3 L1591.5,721.9 L1579.3,718.4 L1567.5,714.8 L1556.0,711.0 L1544.8,707.1 L1534.1,703.1 L1523.7,699.1 L1513.7,694.9 L1504.0,690.7 L1494.8,686.3 L1486.0,681.9 L1477.6,677.5 L1469.6,672.9 L1461.9,668.3 L1454.7,663.6 L1448.0,658.9 L1441.6,654.1 L1435.6,649.3 L1430.1,644.5 L1425.0,639.6 L1420.3,634.7 L1416.0,629.7 L1412.1,624.8 L1408.7,619.8 L1405.6,614.8 L1403.0,609.9 L1400.7,604.9 L1398.9,599.9 L1397.4,594.9 L1396.4,589.9 L1395.7,585.0 L1395.5,580.0 L1395.6,575.1 L1396.0,570.2 L1396.9,565.3 L1398.1,560.5 L1399.7,555.7 L1401.6,550.9 L1403.9,546.1Z" fill="#eecd2a"/></g>
<g stroke-width="2.2" fill="none" stroke-linecap="round"><path d="M1261.6,639.6 L1262.0,643.9" stroke="#fffe34"/><path d="M1262.0,643.9 L1262.7,648.2" stroke="#fffe34"/><path d="M1262.7,648.2 L1263.6,652.5" stroke="#ffff34"/><path d="M1263.6,652.5 L1264.6,656.9" stroke="#ffff34"/><path d="M1264.6,656.9 L1266.0,661.2" stroke="#ffff34"/><path d="M1266.0,661.2 L1267.5,665.5" stroke="#ffff34"/><path d="M1267.5,665.5 L1269.2,669.9" stroke="#ffff34"/><path d="M1269.2,669.9 L1271.2,674.2" stroke="#ffff34"/><path d="M1271.2,674.2 L1273.4,678.5" stroke="#ffff34"/><path d="M1273.4,678.5 L1275.9,682.9" stroke="#ffff34"/><path d="M1275.9,682.9 L1278.5,687.2" stroke="#ffff34"/><path d="M1278.5,687.2 L1281.4,691.6" stroke="#ffff34"/><path d="M1281.4,691.6 L1284.6,695.9" stroke="#ffff34"/><path d="M1284.6,695.9 L1287.9,700.2" stroke="#ffff34"/><path d="M1287.9,700.2 L1291.5,704.5" stroke="#ffff34"/><path d="M1291.5,704.5 L1295.4,708.8" stroke="#ffff34"/><path d="M1295.4,708.8 L1299.5,713.1" stroke="#ffff34"/><path d="M1299.5,713.1 L1303.8,717.4" stroke="#ffff34"/><path d="M1303.8,717.4 L1308.3,721.6" stroke="#ffff34"/><path d="M1308.3,721.6 L1313.1,725.9" stroke="#ffff34"/><path d="M1313.1,725.9 L1318.2,730.1" stroke="#ffff34"/><path d="M1318.2,730.1 L1323.4,734.3" stroke="#ffff34"/><path d="M1323.4,734.3 L1328.9,738.5" stroke="#ffff34"/><path d="M1328.9,738.5 L1334.7,742.6" stroke="#ffff34"/><path d="M1334.7,742.6 L1340.7,746.7" stroke="#ffff34"/><path d="M1340.7,746.7 L1346.9,750.8" stroke="#ffff34"/><path d="M1346.9,750.8 L1353.4,754.9" stroke="#ffff34"/><path d="M1353.4,754.9 L1360.1,758.9" stroke="#fffe34"/><path d="M1360.1,758.9 L1367.0,762.9" stroke="#fffe34"/><path d="M1367.0,762.9 L1374.2,766.8" stroke="#fffe34"/><path d="M1374.2,766.8 L1381.6,770.7" stroke="#fffd34"/><path d="M1381.6,770.7 L1389.3,774.6" stroke="#fffd33"/><path d="M1389.3,774.6 L1397.2,778.4" stroke="#fffc33"/><path d="M1397.2,778.4 L1405.3,782.2" stroke="#fffc33"/><path d="M1405.3,782.2 L1413.6,785.9" stroke="#fffb33"/><path d="M1413.6,785.9 L1422.2,789.5" stroke="#fffa33"/><path d="M1422.2,789.5 L1431.0,793.2" stroke="#fffa33"/><path d="M1431.0,793.2 L1440.0,796.7" stroke="#fff933"/><path d="M1440.0,796.7 L1449.3,800.2" stroke="#fff933"/><path d="M1449.3,800.2 L1458.7,803.7" stroke="#fff832"/><path d="M1458.7,803.7 L1468.4,807.0" stroke="#fff732"/><path d="M1468.4,807.0 L1478.3,810.3" stroke="#fff632"/><path d="M1478.3,810.3 L1488.4,813.6" stroke="#fff632"/><path d="M1488.4,813.6 L1498.7,816.8" stroke="#fff532"/><path d="M1498.7,816.8 L1509.2,819.9" stroke="#fff432"/><path d="M1509.2,819.9 L1519.8,822.9" stroke="#fff331"/><path d="M1519.8,822.9 L1530.7,825.9" stroke="#fff231"/><path d="M1530.7,825.9 L1541.8,828.8" stroke="#fff131"/><path d="M1541.8,828.8 L1553.1,831.6" stroke="#fff031"/><path d="M1553.1,831.6 L1564.5,834.3" stroke="#ffef31"/><path d="M1564.5,834.3 L1576.1,836.9" stroke="#ffee30"/><path d="M1576.1,836.9 L1587.9,839.5" stroke="#ffed30"/><path d="M1587.9,839.5 L1599.9,842.0" stroke="#ffec30"/><path d="M1599.9,842.0 L1612.0,844.4" stroke="#ffeb30"/><path d="M1612.0,844.4 L1624.3,846.7" stroke="#ffea30"/><path d="M1624.3,846.7 L1636.7,848.9" stroke="#ffe92f"/><path d="M1636.7,848.9 L1649.3,851.0" stroke="#ffe82f"/><path d="M1649.3,851.0 L1662.0,853.0" stroke="#ffe72f"/><path d="M1662.0,853.0 L1674.8,855.0" stroke="#ffe52f"/><path d="M1674.8,855.0 L1687.8,856.8" stroke="#ffe42e"/><path d="M1687.8,856.8 L1700.8,858.5" stroke="#ffe32e"/><path d="M1700.8,858.5 L1714.0,860.2" stroke="#ffe22e"/><path d="M1714.0,860.2 L1727.3,861.7" stroke="#ffe02e"/><path d="M1727.3,861.7 L1740.7,863.2" stroke="#ffdf2d"/><path d="M1740.7,863.2 L1754.2,864.5" stroke="#ffde2d"/><path d="M1754.2,864.5 L1767.8,865.7" stroke="#ffdd2d"/><path d="M1767.8,865.7 L1781.5,866.8" stroke="#fedb2d"/><path d="M1781.5,866.8 L1795.2,867.9" stroke="#fcda2c"/><path d="M1795.2,867.9 L1809.0,868.8" stroke="#fbd82c"/><path d="M1809.0,868.8 L1822.9,869.6" stroke="#f9d72c"/><path d="M1822.9,869.6 L1836.8,870.3" stroke="#f7d62b"/><path d="M1836.8,870.3 L1850.8,870.9" stroke="#f6d42b"/><path d="M1850.8,870.9 L1864.8,871.4" stroke="#f4d32b"/><path d="M1864.8,871.4 L1878.8,871.8" stroke="#f2d12b"/><path d="M1878.8,871.8 L1892.9,872.0" stroke="#f1d02a"/><path d="M1892.9,872.0 L1906.9,872.2" stroke="#efce2a"/><path d="M1906.9,872.2 L1921.0,872.3" stroke="#edcd2a"/><path d="M1921.0,872.3 L1935.1,872.2" stroke="#ebcb29"/><path d="M1935.1,872.2 L1949.1,872.0" stroke="#eaca29"/><path d="M1949.1,872.0 L1963.2,871.8" stroke="#e8c829"/><path d="M1963.2,871.8 L1977.2,871.4" stroke="#e6c628"/><path d="M1977.2,871.4 L1991.2,870.9" stroke="#e4c528"/><path d="M1991.2,870.9 L2005.2,870.3" stroke="#e2c328"/><path d="M2005.2,870.3 L2019.1,869.6" stroke="#e0c227"/><path d="M2019.1,869.6 L2033.0,868.8" stroke="#dec027"/><path d="M2033.0,868.8 L2046.8,867.9" stroke="#ddbe27"/><path d="M2046.8,867.9 L2060.5,866.8" stroke="#dbbd26"/><path d="M2060.5,866.8 L2074.2,865.7" stroke="#d9bb26"/><path d="M2074.2,865.7 L2087.8,864.5" stroke="#d7ba26"/><path d="M2087.8,864.5 L2101.3,863.2" stroke="#d5b825"/><path d="M2101.3,863.2 L2114.7,861.7" stroke="#d3b625"/><path d="M2114.7,861.7 L2128.0,860.2" stroke="#d1b425"/><path d="M2128.0,860.2 L2141.2,858.5" stroke="#cfb324"/><path d="M2141.2,858.5 L2154.2,856.8" stroke="#cdb124"/><path d="M2154.2,856.8 L2167.2,855.0" stroke="#cbaf24"/><path d="M2167.2,855.0 L2180.0,853.0" stroke="#c9ae23"/><path d="M2180.0,853.0 L2192.7,851.0" stroke="#c7ac23"/><path d="M2192.7,851.0 L2205.3,848.9" stroke="#c5aa23"/><path d="M2205.3,848.9 L2217.7,846.7" stroke="#c3a922"/><path d="M2217.7,846.7 L2230.0,844.4" stroke="#c1a722"/><path d="M2230.0,844.4 L2242.1,842.0" stroke="#bfa521"/><path d="M2242.1,842.0 L2254.1,839.5" stroke="#bda321"/><path d="M2254.1,839.5 L2265.9,836.9" stroke="#bba221"/><path d="M2265.9,836.9 L2277.5,834.3" stroke="#b9a020"/><path d="M2277.5,834.3 L2288.9,831.6" stroke="#b79e20"/><path d="M2288.9,831.6 L2300.2,828.8" stroke="#b59c20"/><path d="M2300.2,828.8 L2311.3,825.9" stroke="#b39b1f"/><path d="M2311.3,825.9 L2322.2,822.9" stroke="#b1991f"/><path d="M2322.2,822.9 L2332.8,819.9" stroke="#af971f"/><path d="M2332.8,819.9 L2343.3,816.8" stroke="#ad961e"/><path d="M2343.3,816.8 L2353.6,813.6" stroke="#ab941e"/><path d="M2353.6,813.6 L2363.7,810.3" stroke="#a9921e"/><path d="M2363.7,810.3 L2373.6,807.0" stroke="#a7901d"/><path d="M2373.6,807.0 L2383.3,803.7" stroke="#a58f1d"/><path d="M2383.3,803.7 L2392.7,800.2" stroke="#a38d1d"/><path d="M2392.7,800.2 L2402.0,796.7" stroke="#a18b1c"/><path d="M2402.0,796.7 L2411.0,793.2" stroke="#9f8a1c"/><path d="M2411.0,793.2 L2419.8,789.5" stroke="#9d881b"/><path d="M2419.8,789.5 L2428.4,785.9" stroke="#9b861b"/><path d="M2428.4,785.9 L2436.7,782.2" stroke="#99841b"/><path d="M2436.7,782.2 L2444.8,778.4" stroke="#98831a"/><path d="M2444.8,778.4 L2452.7,774.6" stroke="#96811a"/><path d="M2452.7,774.6 L2460.4,770.7" stroke="#947f1a"/><path d="M2460.4,770.7 L2467.8,766.8" stroke="#927e19"/><path d="M2467.8,766.8 L2475.0,762.9" stroke="#907c19"/><path d="M2475.0,762.9 L2481.9,758.9" stroke="#8e7b19"/><path d="M2481.9,758.9 L2488.6,754.9" stroke="#8c7918"/><path d="M2488.6,754.9 L2495.1,750.8" stroke="#8a7718"/><path d="M2495.1,750.8 L2501.3,746.7" stroke="#887618"/><path d="M2501.3,746.7 L2507.3,742.6" stroke="#877417"/><path d="M2507.3,742.6 L2513.1,738.5" stroke="#857317"/><path d="M2513.1,738.5 L2518.6,734.3" stroke="#837117"/><path d="M2518.6,734.3 L2523.8,730.1" stroke="#817016"/><path d="M2523.8,730.1 L2528.9,725.9" stroke="#7f6e16"/><path d="M2528.9,725.9 L2533.7,721.6" stroke="#7e6d16"/><path d="M2533.7,721.6 L2538.2,717.4" stroke="#7c6b16"/><path d="M2538.2,717.4 L2542.5,713.1" stroke="#7a6a15"/><path d="M2542.5,713.1 L2546.6,708.8" stroke="#796815"/><path d="M2546.6,708.8 L2550.5,704.5" stroke="#776715"/><path d="M2550.5,704.5 L2554.1,700.2" stroke="#756514"/><path d="M2554.1,700.2 L2557.4,695.9" stroke="#746414"/><path d="M2557.4,695.9 L2560.6,691.6" stroke="#726214"/><path d="M2560.6,691.6 L2563.5,687.2" stroke="#706114"/><path d="M2563.5,687.2 L2566.1,682.9" stroke="#6f6013"/><path d="M2566.1,682.9 L2568.6,678.5" stroke="#6d5e13"/><path d="M2568.6,678.5 L2570.8,674.2" stroke="#6c5d13"/><path d="M2570.8,674.2 L2572.8,669.9" stroke="#6a5c12"/><path d="M2572.8,669.9 L2574.5,665.5" stroke="#695a12"/><path d="M2574.5,665.5 L2576.0,661.2" stroke="#675912"/><path d="M2576.0,661.2 L2577.4,656.9" stroke="#665812"/><path d="M2577.4,656.9 L2578.4,652.5" stroke="#645711"/><path d="M2578.4,652.5 L2579.3,648.2" stroke="#635511"/><path d="M2579.3,648.2 L2580.0,643.9" stroke="#625411"/><path d="M2580.0,643.9 L2580.4,639.6" stroke="#605311"/></g>
<clipPath id="holeclip"><path d="M1598.0,891.6 L1597.7,888.7 L1597.2,885.8 L1596.5,882.8 L1595.6,879.9 L1594.4,877.0 L1593.0,874.1 L1591.5,871.4 L1589.7,868.7 L1587.8,866.1 L1585.7,863.7 L1583.5,861.5 L1581.1,859.4 L1578.6,857.5 L1576.1,855.8 L1573.5,854.3 L1570.8,853.1 L1568.1,852.1 L1565.4,851.3 L1562.8,850.8 L1560.1,850.5 L1557.5,850.6 L1555.0,850.8 L1552.6,851.3 L1550.3,852.1 L1548.1,853.1 L1546.1,854.3 L1544.2,855.8 L1542.6,857.5 L1541.1,859.4 L1539.8,861.4 L1538.7,863.7 L1537.8,866.1 L1537.2,868.6 L1536.7,871.2 L1536.6,874.0 L1536.6,876.8 L1536.9,879.6 L1537.4,882.5 L1538.1,885.4 L1539.1,888.3 L1540.2,891.2 L1541.6,894.0 L1543.1,896.7 L1544.9,899.4 L1546.8,901.9 L1548.8,904.3 L1551.0,906.5 L1553.3,908.6 L1555.8,910.4 L1558.3,912.1 L1560.9,913.6 L1563.5,914.9 L1566.1,915.9 L1568.8,916.7 L1571.5,917.2 L1574.1,917.5 L1576.7,917.5 L1579.2,917.3 L1581.6,916.8 L1583.9,916.1 L1586.1,915.1 L1588.1,913.9 L1590.0,912.5 L1591.7,910.8 L1593.3,909.0 L1594.6,906.9 L1595.7,904.7 L1596.6,902.3 L1597.3,899.8 L1597.8,897.2 L1598.0,894.4Z"/></clipPath>
<g clip-path="url(#holeclip)">
<path d="M1598.0,891.6 L1597.7,888.7 L1597.2,885.8 L1596.5,882.8 L1595.6,879.9 L1594.4,877.0 L1593.0,874.1 L1591.5,871.4 L1589.7,868.7 L1587.8,866.1 L1585.7,863.7 L1583.5,861.5 L1581.1,859.4 L1578.6,857.5 L1576.1,855.8 L1573.5,854.3 L1570.8,853.1 L1568.1,852.1 L1565.4,851.3 L1562.8,850.8 L1560.1,850.5 L1557.5,850.6 L1555.0,850.8 L1552.6,851.3 L1550.3,852.1 L1548.1,853.1 L1546.1,854.3 L1544.2,855.8 L1542.6,857.5 L1541.1,859.4 L1539.8,861.4 L1538.7,863.7 L1537.8,866.1 L1537.2,868.6 L1536.7,871.2 L1536.6,874.0 L1536.6,876.8 L1536.9,879.6 L1537.4,882.5 L1538.1,885.4 L1539.1,888.3 L1540.2,891.2 L1541.6,894.0 L1543.1,896.7 L1544.9,899.4 L1546.8,901.9 L1548.8,904.3 L1551.0,906.5 L1553.3,908.6 L1555.8,910.4 L1558.3,912.1 L1560.9,913.6 L1563.5,914.9 L1566.1,915.9 L1568.8,916.7 L1571.5,917.2 L1574.1,917.5 L1576.7,917.5 L1579.2,917.3 L1581.6,916.8 L1583.9,916.1 L1586.1,915.1 L1588.1,913.9 L1590.0,912.5 L1591.7,910.8 L1593.3,909.0 L1594.6,906.9 L1595.7,904.7 L1596.6,902.3 L1597.3,899.8 L1597.8,897.2 L1598.0,894.4Z" fill="#eecd2a"/>
<path d="M1569.2,902.3 L1570.5,903.1 L1671.7,828.7 L1670.5,828.0Z" fill="#789b3e" stroke="#789b3e" stroke-width="0.7"/><path d="M1570.5,903.1 L1571.8,903.9 L1672.9,829.5 L1671.7,828.7Z" fill="#7ca140" stroke="#7ca140" stroke-width="0.7"/><path d="M1571.8,903.9 L1573.1,904.6 L1674.2,830.1 L1672.9,829.5Z" fill="#80a642" stroke="#80a642" stroke-width="0.7"/><path d="M1573.1,904.6 L1574.4,905.2 L1675.4,830.7 L1674.2,830.1Z" fill="#84ab44" stroke="#84ab44" stroke-width="0.7"/><path d="M1574.4,905.2 L1575.7,905.8 L1676.7,831.3 L1675.4,830.7Z" fill="#88b046" stroke="#88b046" stroke-width="0.7"/><path d="M1575.7,905.8 L1577.0,906.4 L1678.0,831.8 L1676.7,831.3Z" fill="#8bb448" stroke="#8bb448" stroke-width="0.7"/><path d="M1577.0,906.4 L1578.3,906.8 L1679.3,832.2 L1678.0,831.8Z" fill="#8fb949" stroke="#8fb949" stroke-width="0.7"/><path d="M1578.3,906.8 L1579.7,907.3 L1680.6,832.6 L1679.3,832.2Z" fill="#92bd4b" stroke="#92bd4b" stroke-width="0.7"/><path d="M1579.7,907.3 L1581.0,907.6 L1681.8,832.9 L1680.6,832.6Z" fill="#95c04c" stroke="#95c04c" stroke-width="0.7"/><path d="M1581.0,907.6 L1582.3,907.9 L1683.1,833.2 L1681.8,832.9Z" fill="#97c44e" stroke="#97c44e" stroke-width="0.7"/><path d="M1582.3,907.9 L1583.7,908.1 L1684.4,833.4 L1683.1,833.2Z" fill="#9ac74f" stroke="#9ac74f" stroke-width="0.7"/><path d="M1583.7,908.1 L1585.0,908.3 L1685.7,833.5 L1684.4,833.4Z" fill="#9cc950" stroke="#9cc950" stroke-width="0.7"/><path d="M1585.0,908.3 L1586.3,908.4 L1687.0,833.6 L1685.7,833.5Z" fill="#9ecc51" stroke="#9ecc51" stroke-width="0.7"/><path d="M1586.3,908.4 L1587.6,908.5 L1688.2,833.7 L1687.0,833.6Z" fill="#9fce52" stroke="#9fce52" stroke-width="0.7"/><path d="M1587.6,908.5 L1588.9,908.4 L1689.5,833.6 L1688.2,833.7Z" fill="#a1d053" stroke="#a1d053" stroke-width="0.7"/><path d="M1588.9,908.4 L1590.2,908.4 L1690.7,833.5 L1689.5,833.6Z" fill="#a2d153" stroke="#a2d153" stroke-width="0.7"/><path d="M1590.2,908.4 L1591.4,908.2 L1691.9,833.4 L1690.7,833.5Z" fill="#a3d254" stroke="#a3d254" stroke-width="0.7"/><path d="M1591.4,908.2 L1592.6,908.0 L1693.1,833.1 L1691.9,833.4Z" fill="#a3d354" stroke="#a3d354" stroke-width="0.7"/>
<path d="M1546.1,854.3 L1545.2,855.0 L1557.6,846.3 L1558.5,845.6Z" fill="#9fce52" stroke="#9fce52" stroke-width="0.7"/><path d="M1545.2,855.0 L1544.2,855.8 L1556.7,847.1 L1557.6,846.3Z" fill="#9ecc51" stroke="#9ecc51" stroke-width="0.7"/><path d="M1544.2,855.8 L1543.4,856.6 L1555.8,847.9 L1556.7,847.1Z" fill="#9cca50" stroke="#9cca50" stroke-width="0.7"/><path d="M1543.4,856.6 L1542.6,857.5 L1555.0,848.8 L1555.8,847.9Z" fill="#9ac74f" stroke="#9ac74f" stroke-width="0.7"/><path d="M1542.6,857.5 L1541.8,858.4 L1554.2,849.7 L1555.0,848.8Z" fill="#97c44e" stroke="#97c44e" stroke-width="0.7"/><path d="M1541.8,858.4 L1541.1,859.4 L1553.5,850.6 L1554.2,849.7Z" fill="#95c14d" stroke="#95c14d" stroke-width="0.7"/><path d="M1541.1,859.4 L1540.4,860.4 L1552.8,851.7 L1553.5,850.6Z" fill="#92bd4b" stroke="#92bd4b" stroke-width="0.7"/><path d="M1540.4,860.4 L1539.8,861.4 L1552.2,852.7 L1552.8,851.7Z" fill="#8fb94a" stroke="#8fb94a" stroke-width="0.7"/><path d="M1539.8,861.4 L1539.2,862.5 L1551.6,853.8 L1552.2,852.7Z" fill="#8cb548" stroke="#8cb548" stroke-width="0.7"/><path d="M1539.2,862.5 L1538.7,863.7 L1551.1,854.9 L1551.6,853.8Z" fill="#89b146" stroke="#89b146" stroke-width="0.7"/><path d="M1538.7,863.7 L1538.2,864.8 L1550.6,856.1 L1551.1,854.9Z" fill="#85ac44" stroke="#85ac44" stroke-width="0.7"/><path d="M1538.2,864.8 L1537.8,866.1 L1550.2,857.3 L1550.6,856.1Z" fill="#81a742" stroke="#81a742" stroke-width="0.7"/><path d="M1537.8,866.1 L1537.5,867.3 L1549.9,858.6 L1550.2,857.3Z" fill="#7da240" stroke="#7da240" stroke-width="0.7"/><path d="M1537.5,867.3 L1537.2,868.6 L1549.6,859.8 L1549.9,858.6Z" fill="#799c3e" stroke="#799c3e" stroke-width="0.7"/><path d="M1537.2,868.6 L1536.9,869.9 L1549.3,861.1 L1549.6,859.8Z" fill="#75973c" stroke="#75973c" stroke-width="0.7"/><path d="M1536.9,869.9 L1536.7,871.2 L1549.2,862.5 L1549.3,861.1Z" fill="#70913a" stroke="#70913a" stroke-width="0.7"/><path d="M1536.7,871.2 L1536.6,872.6 L1549.0,863.8 L1549.2,862.5Z" fill="#6b8b37" stroke="#6b8b37" stroke-width="0.7"/><path d="M1536.6,872.6 L1536.6,874.0 L1549.0,865.2 L1549.0,863.8Z" fill="#678535" stroke="#678535" stroke-width="0.7"/><path d="M1536.6,874.0 L1536.6,875.4 L1549.0,866.6 L1549.0,865.2Z" fill="#627e32" stroke="#627e32" stroke-width="0.7"/><path d="M1536.6,875.4 L1536.6,876.8 L1549.0,868.0 L1549.0,866.6Z" fill="#5d7830" stroke="#5d7830" stroke-width="0.7"/><path d="M1536.6,876.8 L1536.7,878.2 L1549.1,869.4 L1549.0,868.0Z" fill="#57712d" stroke="#57712d" stroke-width="0.7"/><path d="M1536.7,878.2 L1536.9,879.6 L1549.3,870.8 L1549.1,869.4Z" fill="#526a2a" stroke="#526a2a" stroke-width="0.7"/><path d="M1536.9,879.6 L1537.1,881.1 L1549.5,872.3 L1549.3,870.8Z" fill="#4d6327" stroke="#4d6327" stroke-width="0.7"/><path d="M1537.1,881.1 L1537.4,882.5 L1549.8,873.7 L1549.5,872.3Z" fill="#475c25" stroke="#475c25" stroke-width="0.7"/><path d="M1537.4,882.5 L1537.7,884.0 L1550.1,875.1 L1549.8,873.7Z" fill="#425522" stroke="#425522" stroke-width="0.7"/><path d="M1537.7,884.0 L1538.1,885.4 L1550.5,876.6 L1550.1,875.1Z" fill="#3c4e1f" stroke="#3c4e1f" stroke-width="0.7"/><path d="M1538.1,885.4 L1538.6,886.9 L1550.9,878.0 L1550.5,876.6Z" fill="#36461c" stroke="#36461c" stroke-width="0.7"/><path d="M1538.6,886.9 L1539.1,888.3 L1551.4,879.5 L1550.9,878.0Z" fill="#313f19" stroke="#313f19" stroke-width="0.7"/><path d="M1539.1,888.3 L1539.6,889.8 L1552.0,880.9 L1551.4,879.5Z" fill="#2b3816" stroke="#2b3816" stroke-width="0.7"/><path d="M1539.6,889.8 L1540.2,891.2 L1552.6,882.3 L1552.0,880.9Z" fill="#253013" stroke="#253013" stroke-width="0.7"/><path d="M1540.2,891.2 L1540.9,892.6 L1553.2,883.7 L1552.6,882.3Z" fill="#1f2910" stroke="#1f2910" stroke-width="0.7"/><path d="M1540.9,892.6 L1541.6,894.0 L1553.9,885.1 L1553.2,883.7Z" fill="#242f13" stroke="#242f13" stroke-width="0.7"/><path d="M1541.6,894.0 L1542.3,895.4 L1554.7,886.5 L1553.9,885.1Z" fill="#2a3716" stroke="#2a3716" stroke-width="0.7"/><path d="M1542.3,895.4 L1543.1,896.7 L1555.5,887.8 L1554.7,886.5Z" fill="#303e18" stroke="#303e18" stroke-width="0.7"/><path d="M1543.1,896.7 L1544.0,898.1 L1556.3,889.1 L1555.5,887.8Z" fill="#36451b" stroke="#36451b" stroke-width="0.7"/><path d="M1544.0,898.1 L1544.9,899.4 L1557.2,890.4 L1556.3,889.1Z" fill="#3b4d1e" stroke="#3b4d1e" stroke-width="0.7"/><path d="M1544.9,899.4 L1545.8,900.6 L1558.1,891.7 L1557.2,890.4Z" fill="#415421" stroke="#415421" stroke-width="0.7"/><path d="M1545.8,900.6 L1546.8,901.9 L1559.1,892.9 L1558.1,891.7Z" fill="#475b24" stroke="#475b24" stroke-width="0.7"/><path d="M1546.8,901.9 L1547.8,903.1 L1560.1,894.2 L1559.1,892.9Z" fill="#4c6227" stroke="#4c6227" stroke-width="0.7"/><path d="M1547.8,903.1 L1548.8,904.3 L1561.1,895.3 L1560.1,894.2Z" fill="#51692a" stroke="#51692a" stroke-width="0.7"/><path d="M1548.8,904.3 L1549.9,905.4 L1562.2,896.4 L1561.1,895.3Z" fill="#57702d" stroke="#57702d" stroke-width="0.7"/><path d="M1549.9,905.4 L1551.0,906.5 L1563.3,897.5 L1562.2,896.4Z" fill="#5c772f" stroke="#5c772f" stroke-width="0.7"/><path d="M1551.0,906.5 L1552.2,907.6 L1564.5,898.6 L1563.3,897.5Z" fill="#617e32" stroke="#617e32" stroke-width="0.7"/><path d="M1552.2,907.6 L1553.3,908.6 L1565.6,899.6 L1564.5,898.6Z" fill="#668434" stroke="#668434" stroke-width="0.7"/><path d="M1553.3,908.6 L1554.5,909.5 L1566.8,900.5 L1565.6,899.6Z" fill="#6b8a37" stroke="#6b8a37" stroke-width="0.7"/><path d="M1554.5,909.5 L1555.8,910.4 L1568.0,901.5 L1566.8,900.5Z" fill="#709039" stroke="#709039" stroke-width="0.7"/><path d="M1555.8,910.4 L1557.0,911.3 L1569.3,902.3 L1568.0,901.5Z" fill="#74963c" stroke="#74963c" stroke-width="0.7"/><path d="M1557.0,911.3 L1558.3,912.1 L1570.5,903.1 L1569.3,902.3Z" fill="#789c3e" stroke="#789c3e" stroke-width="0.7"/><path d="M1558.3,912.1 L1559.6,912.9 L1571.8,903.9 L1570.5,903.1Z" fill="#7da140" stroke="#7da140" stroke-width="0.7"/><path d="M1559.6,912.9 L1560.9,913.6 L1573.1,904.6 L1571.8,903.9Z" fill="#81a642" stroke="#81a642" stroke-width="0.7"/><path d="M1560.9,913.6 L1562.2,914.3 L1574.4,905.2 L1573.1,904.6Z" fill="#84ab44" stroke="#84ab44" stroke-width="0.7"/><path d="M1562.2,914.3 L1563.5,914.9 L1575.7,905.8 L1574.4,905.2Z" fill="#88b046" stroke="#88b046" stroke-width="0.7"/><path d="M1563.5,914.9 L1564.8,915.4 L1577.0,906.4 L1575.7,905.8Z" fill="#8cb448" stroke="#8cb448" stroke-width="0.7"/><path d="M1564.8,915.4 L1566.1,915.9 L1578.4,906.8 L1577.0,906.4Z" fill="#8fb949" stroke="#8fb949" stroke-width="0.7"/><path d="M1566.1,915.9 L1567.5,916.3 L1579.7,907.3 L1578.4,906.8Z" fill="#92bd4b" stroke="#92bd4b" stroke-width="0.7"/><path d="M1567.5,916.3 L1568.8,916.7 L1581.0,907.6 L1579.7,907.3Z" fill="#95c04c" stroke="#95c04c" stroke-width="0.7"/><path d="M1568.8,916.7 L1570.1,917.0 L1582.3,907.9 L1581.0,907.6Z" fill="#97c34e" stroke="#97c34e" stroke-width="0.7"/><path d="M1570.1,917.0 L1571.5,917.2 L1583.7,908.1 L1582.3,907.9Z" fill="#9ac74f" stroke="#9ac74f" stroke-width="0.7"/><path d="M1571.5,917.2 L1572.8,917.4 L1585.0,908.3 L1583.7,908.1Z" fill="#9cc950" stroke="#9cc950" stroke-width="0.7"/><path d="M1572.8,917.4 L1574.1,917.5 L1586.3,908.4 L1585.0,908.3Z" fill="#9ecc51" stroke="#9ecc51" stroke-width="0.7"/><path d="M1574.1,917.5 L1575.4,917.5 L1587.6,908.5 L1586.3,908.4Z" fill="#9fce52" stroke="#9fce52" stroke-width="0.7"/><path d="M1575.4,917.5 L1576.7,917.5 L1588.8,908.4 L1587.6,908.5Z" fill="#a1d053" stroke="#a1d053" stroke-width="0.7"/><path d="M1576.7,917.5 L1577.9,917.4 L1590.1,908.4 L1588.8,908.4Z" fill="#a2d153" stroke="#a2d153" stroke-width="0.7"/><path d="M1577.9,917.4 L1579.2,917.3 L1591.3,908.2 L1590.1,908.4Z" fill="#a3d254" stroke="#a3d254" stroke-width="0.7"/><path d="M1579.2,917.3 L1580.4,917.1 L1592.6,908.0 L1591.3,908.2Z" fill="#a3d354" stroke="#a3d354" stroke-width="0.7"/><path d="M1580.4,917.1 L1581.6,916.8 L1593.8,907.7 L1592.6,908.0Z" fill="#a4d454" stroke="#a4d454" stroke-width="0.7"/><path d="M1581.6,916.8 L1582.8,916.5 L1594.9,907.4 L1593.8,907.7Z" fill="#a4d454" stroke="#a4d454" stroke-width="0.7"/><path d="M1582.8,916.5 L1583.9,916.1 L1596.1,907.0 L1594.9,907.4Z" fill="#a4d454" stroke="#a4d454" stroke-width="0.7"/><path d="M1583.9,916.1 L1585.0,915.6 L1597.2,906.6 L1596.1,907.0Z" fill="#a3d354" stroke="#a3d354" stroke-width="0.7"/><path d="M1585.0,915.6 L1586.1,915.1 L1598.2,906.0 L1597.2,906.6Z" fill="#a3d254" stroke="#a3d254" stroke-width="0.7"/><path d="M1586.1,915.1 L1587.1,914.5 L1599.3,905.5 L1598.2,906.0Z" fill="#a2d153" stroke="#a2d153" stroke-width="0.7"/><path d="M1587.1,914.5 L1588.1,913.9 L1600.3,904.8 L1599.3,905.5Z" fill="#a1d053" stroke="#a1d053" stroke-width="0.7"/><path d="M1588.1,913.9 L1589.1,913.2 L1601.2,904.2 L1600.3,904.8Z" fill="#9fce52" stroke="#9fce52" stroke-width="0.7"/>
</g>
<g shape-rendering="crispEdges"><g stroke-width="2"><path d="M1320.0,1182.4 L1261.5,1170.7" stroke="#ff0000"/><path d="M1320.0,1182.4 L1290.2,1205.3" stroke="#00ff00"/><path d="M1320.0,1182.4 L1320.0,1122.1" stroke="#0000ff"/><path d="M1243.0,1174.1 L1255.0,1162.1 M1243.0,1162.1 L1255.0,1174.1" stroke="#000"/><path d="M1277.9,1215.5 L1289.9,1203.5 M1277.9,1203.5 L1283.9,1209.5" stroke="#000"/><path d="M1314.0,1103.0 L1326.0,1103.0 L1314.0,1115.0 L1326.0,1115.0" stroke="#000" fill="none"/></g></g>
 </svg></div>
 <!-- view toolbar -->
 <div class="tbar" style="left:1057px;top:1238px;width:1503px;height:89px"></div>
 <div class="abs" style="left:2224px;top:1240px;width:84px;height:85px;border-radius:9px 9px 0 0;background:linear-gradient(#d2d2d2,#b2b2b2)"></div>
<svg class="abs" style="left:1057px;top:1238px" width="1503" height="89" viewBox="1169 1302 1503 89">
<g fill="none" stroke="#555" stroke-width="2" stroke-dasharray="2 4"><path d="M1361,1306V1387M1749,1306V1387M2321,1306V1387M2525,1306V1387"/></g>
<!-- preview -->
<g fill="none" stroke="#1a1a1a" stroke-width="2.4" stroke-dasharray="3.6 3.6">
<path d="M1213.3,1315.2 L1237,1328.6 V1356 L1222,1364.4 M1205,1364.4 L1189.6,1356 V1328.6 L1213.3,1315.2"/>
<path d="M1189.6,1328.6 L1213.3,1341.4 L1237,1328.6 M1213.3,1341.4 V1352.4"/>
</g>
<g fill="#111"><path d="M1197,1351.8 H1206.6 L1217.6,1364 L1206.6,1376.7 H1197 L1208,1364Z M1213,1351.8 H1222.6 L1232.4,1364 L1222.6,1376.7 H1213 L1223.6,1364Z"/></g>
<!-- render -->
<g fill="none" stroke="#1a1a1a" stroke-width="2.8" stroke-linejoin="round">
<path d="M1305.3,1315 L1329.2,1328.4 V1356.6 L1312.8,1366 M1297.8,1366 L1281.5,1356.6 V1328.4 L1305.3,1315"/>
<path d="M1281.5,1328.4 L1305.3,1341.6 L1329.2,1328.4 M1305.3,1341.6 V1352.6"/>
</g>
<g fill="#1a1a1a"><path d="M1296.5,1352 H1314 V1355.2 H1296.5Z M1296.5,1373.8 H1314 V1377 H1296.5Z"/><path d="M1298.8,1357.2 H1311.8 L1305.3,1365.4Z"/><path d="M1300.3,1357.6 L1310.3,1371.6 M1310.3,1357.6 L1300.3,1371.6 M1298.8,1372.2 H1311.8" stroke="#1a1a1a" stroke-width="1.5" fill="none"/></g>
<!-- zoom all -->
<g fill="none" stroke="#000" stroke-width="3.4"><path d="M1395.7,1331.5 V1321.7 H1405.7 M1422.5,1321.7 H1432.6 V1331.5 M1395.7,1346.5 V1356.2 H1405.7 M1432.6,1346.5 V1354"/></g>
<g fill="none" stroke="#262626"><circle cx="1413.5" cy="1339.3" r="11.8" stroke-width="5.6"/><path d="M1421.5,1350.5 L1433,1364.2" stroke-width="7.2" stroke-linecap="butt"/></g>
<!-- zoom in -->
<g fill="none" stroke="#262626"><circle cx="1505.1" cy="1339.3" r="11.8" stroke-width="5.6"/><path d="M1513.1,1350.5 L1524.6,1364.2" stroke-width="7.2"/><path d="M1498.3,1339.3 H1511.9 M1505.1,1332.5 V1346.1" stroke="#000" stroke-width="2.4"/></g>
<!-- zoom out -->
<g fill="none" stroke="#262626"><circle cx="1597" cy="1339.3" r="11.8" stroke-width="5.6"/><path d="M1605,1350.5 L1616.5,1364.2" stroke-width="7.2"/><path d="M1590.2,1339 H1603.8" stroke="#000" stroke-width="2.4"/></g>
<!-- reset view -->
<path d="M1673.2,1346.2 A20.6,20.6 0 1 0 1680,1330.4" fill="none" stroke="#1a1a1a" stroke-width="6.8"/>
<path d="M1672,1324.2 V1339.8 L1687.8,1336.8 L1682,1331.5 L1679,1330Z" fill="#1a1a1a"/>
<!-- right -->
<g fill="none" stroke="#3c3c3c" stroke-width="3" stroke-linejoin="round"><path d="M1782.8,1340.5 L1791,1323 H1813.2 L1817.6,1340.5 L1811,1360 H1789.4Z"/><path d="M1782.8,1340.5 H1805 L1813.2,1323 M1805,1340.5 L1811,1360"/></g>
<path d="M1817.4,1335.4 L1830,1342 L1817.4,1348 L1820.6,1342Z" fill="#000"/>
<!-- top -->
<g fill="none" stroke="#3c3c3c" stroke-width="3" stroke-linejoin="round"><path d="M1898.1,1328 L1916.8,1335.5 V1357 L1898.1,1365.2 L1879.5,1357 V1335.5Z"/><path d="M1879.5,1335.5 L1898.1,1343 L1916.8,1335.5 M1898.1,1343 V1365.2"/></g>
<path d="M1891.6,1332 L1898.1,1318 L1904.6,1332 L1898.1,1328.6Z" fill="#000"/>
<!-- bottom -->
<g fill="none" stroke="#3c3c3c" stroke-width="3" stroke-linejoin="round"><path d="M1985.2,1319.6 L2003.8,1327.8 V1349.4 L1985.2,1356.4 L1967,1349.4 V1327.8Z"/><path d="M1967,1349.4 L1985.2,1342.6 L2003.8,1349.4 M1985.2,1342.6 V1319.6"/></g>
<path d="M1979.6,1354.8 L1986,1367.8 L1992.4,1354.8 L1986,1357.6Z" fill="#000"/>
<!-- left -->
<g fill="none" stroke="#3c3c3c" stroke-width="3" stroke-linejoin="round"><path d="M2105.2,1340.5 L2097,1323 H2074.8 L2070.4,1340.5 L2077,1360 H2098.6Z"/><path d="M2105.2,1340.5 H2083 L2074.8,1323 M2083,1340.5 L2077,1360"/></g>
<path d="M2070.6,1335.4 L2058,1342 L2070.6,1348 L2067.4,1342Z" fill="#000"/>
<!-- front -->
<g stroke="#2a2a2a" stroke-width="3" stroke-linejoin="round"><path d="M2173.8,1327 L2193.2,1335 V1356.8 L2173.8,1364.8 L2154.5,1356.8 V1335Z" fill="none"/><path d="M2154.5,1335 L2173.8,1343 V1364.8 L2154.5,1356.8Z" fill="#2a2a2a"/><path d="M2173.8,1343 L2193.2,1335" fill="none"/></g>
<!-- back -->
<g stroke="#2a2a2a" stroke-width="3" stroke-linejoin="round"><path d="M2266,1327 L2285.4,1335 V1356.8 L2266,1364.8 L2247,1356.8 V1335Z" fill="none"/><path d="M2266,1327 L2285.4,1335 V1353 L2266,1343Z" fill="#2a2a2a"/><path d="M2247,1335 L2266,1343 M2266,1327 V1364.8" fill="none"/></g>
<!-- perspective -->
<g fill="none" stroke="#000" stroke-width="3.2" stroke-linejoin="miter"><path d="M2358.8,1346 H2381.8 V1368.4 H2358.8Z"/><path d="M2358.8,1346 L2359.6,1341.2 L2364,1337.6 L2403.5,1323.6 M2381.8,1346 L2403.5,1323.6 L2381.8,1368.4"/></g>
<path d="M2396,1323 L2405,1321.6 L2404,1330.6Z" fill="#000"/>
<!-- ortho -->
<g fill="none" stroke="#000"><path d="M2449,1328.6 H2500.2 V1372.4 H2449Z" stroke-width="4.8"/><path d="M2460.6,1338.4 H2488 V1360 H2460.6Z" stroke-width="4.4"/><path d="M2449,1328.6 L2460.6,1338.4 M2500.2,1328.6 L2488,1338.4 M2449,1372.4 L2460.6,1360 M2500.2,1372.4 L2488,1360" stroke-width="2"/><path d="M2453,1332 H2496 M2453,1369.4 H2496 M2452.4,1332 V1369 M2497,1332 V1369" stroke-width="1.2"/></g>
<!-- >> -->
<g fill="none" stroke="#6e6e6e" stroke-width="4" stroke-linejoin="miter"><path d="M2638,1337 L2647,1345.4 L2638,1354 M2650.5,1337 L2659.5,1345.4 L2650.5,1354"/></g>
</svg>

 <!-- console -->
 <div class="dockhdr" style="left:1057px;top:1328px;width:1503px;height:44px"><span style="position:absolute;left:730px;top:0">Console</span></div>
 <svg class="abs" style="left:1060px;top:1335px" width="29" height="29" viewBox="0 0 29 29"><circle cx="14" cy="14" r="13.4" fill="#4b4b4b" stroke="#3a3a3a" stroke-width="1"/><path d="M8.6,8.6 L19.4,19.4 M19.4,8.6 L8.6,19.4" stroke="#fff" stroke-width="4.2" stroke-linecap="butt"/></svg>

 <div class="abs" style="left:1059px;top:1373px;width:1499px;height:64px;background:#fff;border:1px solid #b5b5b5;overflow:hidden;font-size:25.5px;line-height:31.7px;white-space:pre;letter-spacing:0.62px"><div style="position:absolute;left:9.5px;top:8px">Compiling design (CSG Tree generation)...
Compiling design (CSG Products generation)...</div><div style="position:absolute;right:0;top:0;width:29px;height:64px;background:#fafafa;border-left:1px solid #e6e6e6"></div></div>
 <div id="status"><span style="position:absolute;left:5.5px;letter-spacing:0.75px;word-spacing:2.3px">Viewport: translate = [ -0.00 -0.00 -0.00 ], rotate = [ 66.90 0.00 207.00 ], distance = 328.10</span><span style="position:absolute;right:24px;letter-spacing:0.5px">OpenSCAD 2015.03</span></div>
</div>
</body></html>
